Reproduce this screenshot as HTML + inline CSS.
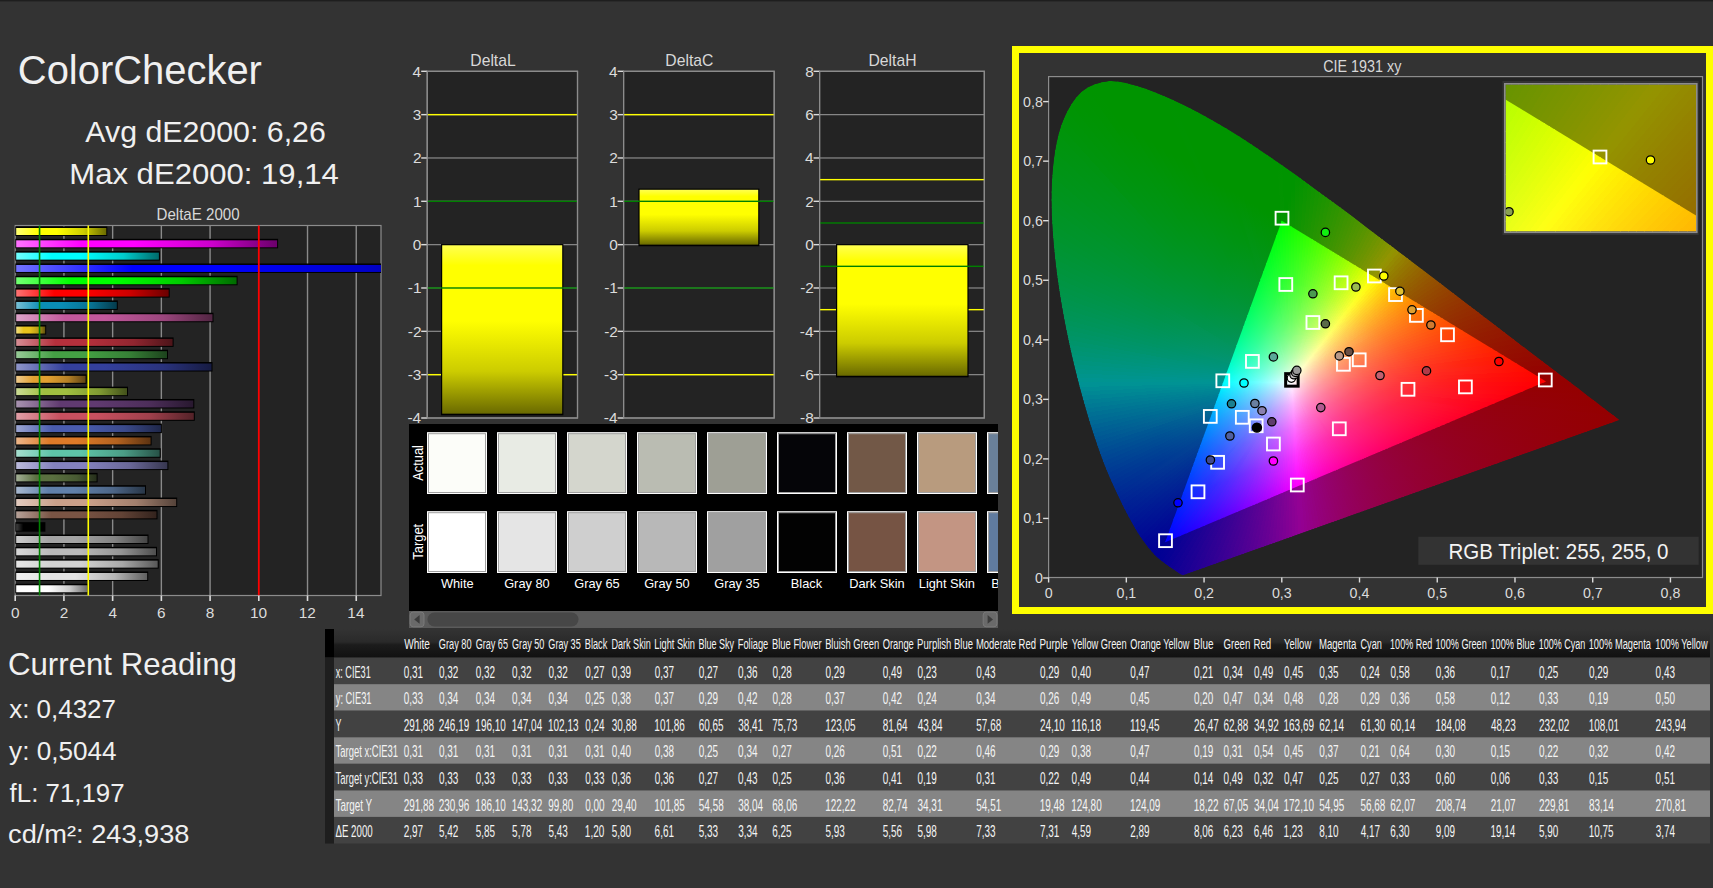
<!DOCTYPE html><html><head><meta charset="utf-8"><style>html,body{margin:0;padding:0;background:#333;width:1713px;height:888px;overflow:hidden}svg{display:block}text{font-family:"Liberation Sans",sans-serif}</style></head><body><svg width="1713" height="888" viewBox="0 0 1713 888"><defs><linearGradient id="eb0" gradientUnits="userSpaceOnUse" x1="16.2" y1="0" x2="106.3" y2="0"><stop offset="0" stop-color="#ffff73"/><stop offset=".25" stop-color="#ffff00"/><stop offset=".45" stop-color="#ffff00"/><stop offset=".75" stop-color="#cccc00"/><stop offset="1" stop-color="#6b6b00"/></linearGradient><linearGradient id="eb1" gradientUnits="userSpaceOnUse" x1="16.2" y1="0" x2="277.1" y2="0"><stop offset="0" stop-color="#ff73ff"/><stop offset=".25" stop-color="#ff00ff"/><stop offset=".45" stop-color="#ff00ff"/><stop offset=".75" stop-color="#cc00cc"/><stop offset="1" stop-color="#6b006b"/></linearGradient><linearGradient id="eb2" gradientUnits="userSpaceOnUse" x1="16.2" y1="0" x2="158.9" y2="0"><stop offset="0" stop-color="#73ffff"/><stop offset=".25" stop-color="#00ffff"/><stop offset=".45" stop-color="#00ffff"/><stop offset=".75" stop-color="#00cccc"/><stop offset="1" stop-color="#006b6b"/></linearGradient><linearGradient id="eb3" gradientUnits="userSpaceOnUse" x1="16.2" y1="0" x2="481.5" y2="0"><stop offset="0" stop-color="#7373ff"/><stop offset=".25" stop-color="#0000ff"/><stop offset=".45" stop-color="#0000ff"/><stop offset=".75" stop-color="#0000cc"/><stop offset="1" stop-color="#00006b"/></linearGradient><linearGradient id="eb4" gradientUnits="userSpaceOnUse" x1="16.2" y1="0" x2="236.6" y2="0"><stop offset="0" stop-color="#73ff73"/><stop offset=".25" stop-color="#00ff00"/><stop offset=".45" stop-color="#00ff00"/><stop offset=".75" stop-color="#00cc00"/><stop offset="1" stop-color="#006b00"/></linearGradient><linearGradient id="eb5" gradientUnits="userSpaceOnUse" x1="16.2" y1="0" x2="168.7" y2="0"><stop offset="0" stop-color="#ff7373"/><stop offset=".25" stop-color="#ff0000"/><stop offset=".45" stop-color="#ff0000"/><stop offset=".75" stop-color="#cc0000"/><stop offset="1" stop-color="#6b0000"/></linearGradient><linearGradient id="eb6" gradientUnits="userSpaceOnUse" x1="16.2" y1="0" x2="116.8" y2="0"><stop offset="0" stop-color="#78c0d6"/><stop offset=".25" stop-color="#0a8db5"/><stop offset=".45" stop-color="#0a8db5"/><stop offset=".75" stop-color="#087191"/><stop offset="1" stop-color="#043b4c"/></linearGradient><linearGradient id="eb7" gradientUnits="userSpaceOnUse" x1="16.2" y1="0" x2="212.5" y2="0"><stop offset="0" stop-color="#dda3c9"/><stop offset=".25" stop-color="#c2589c"/><stop offset=".45" stop-color="#c2589c"/><stop offset=".75" stop-color="#9b467d"/><stop offset="1" stop-color="#512542"/></linearGradient><linearGradient id="eb8" gradientUnits="userSpaceOnUse" x1="16.2" y1="0" x2="45.2" y2="0"><stop offset="0" stop-color="#f2df82"/><stop offset=".25" stop-color="#e8c41c"/><stop offset=".45" stop-color="#e8c41c"/><stop offset=".75" stop-color="#ba9d16"/><stop offset="1" stop-color="#61520c"/></linearGradient><linearGradient id="eb9" gradientUnits="userSpaceOnUse" x1="16.2" y1="0" x2="172.6" y2="0"><stop offset="0" stop-color="#d68d94"/><stop offset=".25" stop-color="#b5303c"/><stop offset=".45" stop-color="#b5303c"/><stop offset=".75" stop-color="#912630"/><stop offset="1" stop-color="#4c1419"/></linearGradient><linearGradient id="eb10" gradientUnits="userSpaceOnUse" x1="16.2" y1="0" x2="167.0" y2="0"><stop offset="0" stop-color="#98cb98"/><stop offset=".25" stop-color="#44a044"/><stop offset=".45" stop-color="#44a044"/><stop offset=".75" stop-color="#368036"/><stop offset="1" stop-color="#1d431d"/></linearGradient><linearGradient id="eb11" gradientUnits="userSpaceOnUse" x1="16.2" y1="0" x2="211.5" y2="0"><stop offset="0" stop-color="#8f96c9"/><stop offset=".25" stop-color="#34409c"/><stop offset=".45" stop-color="#34409c"/><stop offset=".75" stop-color="#2a337d"/><stop offset="1" stop-color="#161b42"/></linearGradient><linearGradient id="eb12" gradientUnits="userSpaceOnUse" x1="16.2" y1="0" x2="85.6" y2="0"><stop offset="0" stop-color="#efcb8d"/><stop offset=".25" stop-color="#e2a030"/><stop offset=".45" stop-color="#e2a030"/><stop offset=".75" stop-color="#b58026"/><stop offset="1" stop-color="#5f4314"/></linearGradient><linearGradient id="eb13" gradientUnits="userSpaceOnUse" x1="16.2" y1="0" x2="127.0" y2="0"><stop offset="0" stop-color="#cbdc96"/><stop offset=".25" stop-color="#a0c040"/><stop offset=".45" stop-color="#a0c040"/><stop offset=".75" stop-color="#809a33"/><stop offset="1" stop-color="#43511b"/></linearGradient><linearGradient id="eb14" gradientUnits="userSpaceOnUse" x1="16.2" y1="0" x2="193.3" y2="0"><stop offset="0" stop-color="#a893b0"/><stop offset=".25" stop-color="#603a70"/><stop offset=".45" stop-color="#603a70"/><stop offset=".75" stop-color="#4d2e5a"/><stop offset="1" stop-color="#28182f"/></linearGradient><linearGradient id="eb15" gradientUnits="userSpaceOnUse" x1="16.2" y1="0" x2="193.8" y2="0"><stop offset="0" stop-color="#e19fa7"/><stop offset=".25" stop-color="#c8505f"/><stop offset=".45" stop-color="#c8505f"/><stop offset=".75" stop-color="#a0404c"/><stop offset="1" stop-color="#542228"/></linearGradient><linearGradient id="eb16" gradientUnits="userSpaceOnUse" x1="16.2" y1="0" x2="160.9" y2="0"><stop offset="0" stop-color="#9ba5d2"/><stop offset=".25" stop-color="#4a5cae"/><stop offset=".45" stop-color="#4a5cae"/><stop offset=".75" stop-color="#3b4a8b"/><stop offset="1" stop-color="#1f2749"/></linearGradient><linearGradient id="eb17" gradientUnits="userSpaceOnUse" x1="16.2" y1="0" x2="150.6" y2="0"><stop offset="0" stop-color="#edb689"/><stop offset=".25" stop-color="#de7a28"/><stop offset=".45" stop-color="#de7a28"/><stop offset=".75" stop-color="#b26220"/><stop offset="1" stop-color="#5d3311"/></linearGradient><linearGradient id="eb18" gradientUnits="userSpaceOnUse" x1="16.2" y1="0" x2="159.7" y2="0"><stop offset="0" stop-color="#a6dfcf"/><stop offset=".25" stop-color="#5ec4a8"/><stop offset=".45" stop-color="#5ec4a8"/><stop offset=".75" stop-color="#4b9d86"/><stop offset="1" stop-color="#275247"/></linearGradient><linearGradient id="eb19" gradientUnits="userSpaceOnUse" x1="16.2" y1="0" x2="167.4" y2="0"><stop offset="0" stop-color="#bbbadb"/><stop offset=".25" stop-color="#8482be"/><stop offset=".45" stop-color="#8482be"/><stop offset=".75" stop-color="#6a6898"/><stop offset="1" stop-color="#373750"/></linearGradient><linearGradient id="eb20" gradientUnits="userSpaceOnUse" x1="16.2" y1="0" x2="96.6" y2="0"><stop offset="0" stop-color="#a4b096"/><stop offset=".25" stop-color="#5a7040"/><stop offset=".45" stop-color="#5a7040"/><stop offset=".75" stop-color="#485a33"/><stop offset="1" stop-color="#262f1b"/></linearGradient><linearGradient id="eb21" gradientUnits="userSpaceOnUse" x1="16.2" y1="0" x2="145.0" y2="0"><stop offset="0" stop-color="#a8b9d0"/><stop offset=".25" stop-color="#6080aa"/><stop offset=".45" stop-color="#6080aa"/><stop offset=".75" stop-color="#4d6688"/><stop offset="1" stop-color="#283647"/></linearGradient><linearGradient id="eb22" gradientUnits="userSpaceOnUse" x1="16.2" y1="0" x2="176.2" y2="0"><stop offset="0" stop-color="#e2cbbf"/><stop offset=".25" stop-color="#caa08a"/><stop offset=".45" stop-color="#caa08a"/><stop offset=".75" stop-color="#a2806e"/><stop offset="1" stop-color="#55433a"/></linearGradient><linearGradient id="eb23" gradientUnits="userSpaceOnUse" x1="16.2" y1="0" x2="156.5" y2="0"><stop offset="0" stop-color="#b6a198"/><stop offset=".25" stop-color="#7a5444"/><stop offset=".45" stop-color="#7a5444"/><stop offset=".75" stop-color="#624336"/><stop offset="1" stop-color="#33231d"/></linearGradient><linearGradient id="eb24" gradientUnits="userSpaceOnUse" x1="16.2" y1="0" x2="44.4" y2="0"><stop offset="0" stop-color="#404040"/><stop offset=".25" stop-color="#000000"/><stop offset=".45" stop-color="#000000"/><stop offset=".75" stop-color="#000000"/><stop offset="1" stop-color="#000000"/></linearGradient><linearGradient id="eb25" gradientUnits="userSpaceOnUse" x1="16.2" y1="0" x2="147.5" y2="0"><stop offset="0" stop-color="#cdcdcd"/><stop offset=".25" stop-color="#a4a4a4"/><stop offset=".45" stop-color="#a4a4a4"/><stop offset=".75" stop-color="#838383"/><stop offset="1" stop-color="#454545"/></linearGradient><linearGradient id="eb26" gradientUnits="userSpaceOnUse" x1="16.2" y1="0" x2="156.0" y2="0"><stop offset="0" stop-color="#d9d9d9"/><stop offset=".25" stop-color="#bababa"/><stop offset=".45" stop-color="#bababa"/><stop offset=".75" stop-color="#959595"/><stop offset="1" stop-color="#4e4e4e"/></linearGradient><linearGradient id="eb27" gradientUnits="userSpaceOnUse" x1="16.2" y1="0" x2="157.7" y2="0"><stop offset="0" stop-color="#e6e6e6"/><stop offset=".25" stop-color="#d2d2d2"/><stop offset=".45" stop-color="#d2d2d2"/><stop offset=".75" stop-color="#a8a8a8"/><stop offset="1" stop-color="#585858"/></linearGradient><linearGradient id="eb28" gradientUnits="userSpaceOnUse" x1="16.2" y1="0" x2="147.2" y2="0"><stop offset="0" stop-color="#f0f0f0"/><stop offset=".25" stop-color="#e4e4e4"/><stop offset=".45" stop-color="#e4e4e4"/><stop offset=".75" stop-color="#b6b6b6"/><stop offset="1" stop-color="#606060"/></linearGradient><linearGradient id="eb29" gradientUnits="userSpaceOnUse" x1="16.2" y1="0" x2="87.5" y2="0"><stop offset="0" stop-color="#ffffff"/><stop offset=".25" stop-color="#ffffff"/><stop offset=".45" stop-color="#ffffff"/><stop offset=".75" stop-color="#cccccc"/><stop offset="1" stop-color="#6b6b6b"/></linearGradient><linearGradient id="dgDeltaL" x1="0" y1="0" x2="0" y2="1"><stop offset="0" stop-color="#ffff50"/><stop offset=".12" stop-color="#ffff00"/><stop offset=".45" stop-color="#ffff00"/><stop offset=".75" stop-color="#cccc00"/><stop offset="1" stop-color="#6a6a00"/></linearGradient><linearGradient id="dgDeltaC" x1="0" y1="0" x2="0" y2="1"><stop offset="0" stop-color="#ffff50"/><stop offset=".12" stop-color="#ffff00"/><stop offset=".45" stop-color="#ffff00"/><stop offset=".75" stop-color="#cccc00"/><stop offset="1" stop-color="#6a6a00"/></linearGradient><linearGradient id="dgDeltaH" x1="0" y1="0" x2="0" y2="1"><stop offset="0" stop-color="#ffff50"/><stop offset=".12" stop-color="#ffff00"/><stop offset=".45" stop-color="#ffff00"/><stop offset=".75" stop-color="#cccc00"/><stop offset="1" stop-color="#6a6a00"/></linearGradient><clipPath id="loc"><path d="M1183.93 575.02C1183.91 575.02 1183.89 575.01 1183.85 575.02C1183.81 575.03 1183.75 575.07 1183.69 575.08C1183.64 575.09 1183.60 575.07 1183.54 575.08C1183.47 575.09 1183.38 575.13 1183.31 575.14C1183.23 575.15 1183.16 575.14 1183.07 575.14C1182.98 575.14 1182.88 575.14 1182.76 575.14C1182.65 575.14 1182.53 575.17 1182.37 575.14C1182.22 575.11 1182.06 575.06 1181.83 574.96C1181.60 574.86 1181.30 574.72 1180.97 574.55C1180.65 574.37 1180.33 574.17 1179.89 573.89C1179.45 573.61 1178.91 573.28 1178.33 572.88C1177.75 572.48 1177.14 572.03 1176.39 571.51C1175.64 570.99 1174.83 570.46 1173.82 569.78C1172.81 569.11 1171.63 568.34 1170.33 567.46C1169.02 566.58 1167.60 565.67 1165.97 564.48C1164.34 563.29 1162.54 562.02 1160.53 560.31C1158.52 558.61 1156.50 557.03 1153.92 554.24C1151.35 551.45 1148.42 548.23 1145.06 543.58C1141.71 538.93 1138.04 533.74 1133.79 526.31C1129.54 518.88 1124.87 510.28 1119.57 498.98C1114.27 487.67 1107.95 474.59 1102.00 458.48C1096.05 442.37 1089.75 423.37 1083.89 402.33C1078.03 381.29 1071.69 356.39 1066.87 332.24C1062.05 308.08 1057.51 281.41 1054.97 257.38C1052.43 233.35 1050.89 209.09 1051.63 188.07C1052.37 167.05 1054.87 146.86 1059.40 131.26C1063.94 115.65 1071.01 102.75 1078.84 94.45C1086.66 86.16 1096.60 82.88 1106.35 81.47C1116.11 80.06 1126.95 83.23 1137.37 86.00C1147.78 88.77 1158.65 93.66 1168.85 98.09C1179.04 102.51 1188.84 107.44 1198.54 112.56C1208.24 117.68 1217.62 123.13 1227.07 128.81C1236.51 134.50 1245.88 140.53 1255.21 146.68C1264.53 152.83 1273.77 159.24 1283.03 165.74C1292.30 172.23 1301.52 178.90 1310.78 185.63C1320.05 192.35 1329.36 199.23 1338.61 206.11C1347.86 212.99 1357.08 219.97 1366.28 226.89C1375.48 233.82 1384.72 240.79 1393.80 247.68C1402.88 254.56 1411.91 261.46 1420.77 268.22C1429.63 274.98 1438.42 281.70 1446.97 288.23C1455.52 294.76 1463.95 301.21 1472.07 307.40C1480.20 313.60 1488.18 319.64 1495.70 325.39C1503.23 331.14 1510.52 336.75 1517.23 341.88C1523.94 347.02 1530.10 351.70 1535.97 356.18C1541.84 360.65 1547.42 364.92 1552.45 368.74C1557.47 372.56 1561.99 375.96 1566.13 379.10C1570.26 382.25 1573.91 385.07 1577.24 387.62C1580.57 390.17 1583.45 392.38 1586.10 394.41C1588.76 396.43 1591.05 398.15 1593.18 399.77C1595.30 401.38 1597.11 402.78 1598.85 404.11C1600.59 405.44 1602.15 406.64 1603.59 407.75C1605.03 408.85 1606.31 409.84 1607.48 410.72C1608.64 411.61 1609.68 412.36 1610.59 413.05C1611.49 413.73 1612.01 414.14 1612.92 414.83C1613.83 415.53 1615.07 416.48 1616.03 417.22C1616.99 417.95 1618.06 418.77 1618.67 419.24C1619.28 419.71 1619.51 419.88 1619.68 420.01Z"/></clipPath><clipPath id="tri"><path d="M1546.07 381.49L1281.79 220.70L1165.19 542.27Z"/></clipPath><path id="w0" d="M0 0L700 -8.73L700 8.73Z"/><linearGradient id="q0"><stop offset=".0944" stop-color="#039492"/><stop offset=".0999" stop-color="#009492"/><stop offset=".3132" stop-color="#009490"/></linearGradient><linearGradient id="q1"><stop offset=".0937" stop-color="#039490"/><stop offset=".0993" stop-color="#009490"/><stop offset=".3149" stop-color="#00948b"/></linearGradient><linearGradient id="q2"><stop offset=".0931" stop-color="#03948d"/><stop offset=".0988" stop-color="#00948d"/><stop offset=".3168" stop-color="#009486"/></linearGradient><linearGradient id="q3"><stop offset=".0926" stop-color="#03948b"/><stop offset=".0954" stop-color="#00948b"/><stop offset=".3188" stop-color="#009481"/></linearGradient><linearGradient id="q4"><stop offset=".092" stop-color="#039489"/><stop offset=".0949" stop-color="#009489"/><stop offset=".3209" stop-color="#00947c"/></linearGradient><linearGradient id="q5"><stop offset=".0916" stop-color="#039487"/><stop offset=".0945" stop-color="#009486"/><stop offset=".3233" stop-color="#009477"/></linearGradient><linearGradient id="q6"><stop offset=".0911" stop-color="#039484"/><stop offset=".0941" stop-color="#009484"/><stop offset=".3258" stop-color="#009472"/></linearGradient><linearGradient id="q7"><stop offset=".0907" stop-color="#039482"/><stop offset=".0937" stop-color="#009482"/><stop offset=".3285" stop-color="#00946e"/></linearGradient><linearGradient id="q8"><stop offset=".0904" stop-color="#039480"/><stop offset=".0934" stop-color="#009480"/><stop offset=".3314" stop-color="#009469"/></linearGradient><linearGradient id="q9"><stop offset=".0901" stop-color="#03947e"/><stop offset=".0932" stop-color="#00947e"/><stop offset=".1953" stop-color="#009470"/><stop offset=".3345" stop-color="#009465"/></linearGradient><linearGradient id="q10"><stop offset=".0898" stop-color="#03947c"/><stop offset=".093" stop-color="#00947c"/><stop offset=".1965" stop-color="#00946d"/><stop offset=".3377" stop-color="#009461"/></linearGradient><linearGradient id="q11"><stop offset=".0896" stop-color="#03947a"/><stop offset=".0928" stop-color="#00947a"/><stop offset=".1976" stop-color="#00946a"/><stop offset=".3406" stop-color="#00945d"/></linearGradient><linearGradient id="q12"><stop offset=".0894" stop-color="#039478"/><stop offset=".0926" stop-color="#009478"/><stop offset=".1988" stop-color="#009466"/><stop offset=".3436" stop-color="#009459"/></linearGradient><linearGradient id="q13"><stop offset=".0893" stop-color="#039477"/><stop offset=".0925" stop-color="#009476"/><stop offset=".2001" stop-color="#009463"/><stop offset=".3468" stop-color="#009455"/></linearGradient><linearGradient id="q14"><stop offset=".0892" stop-color="#039475"/><stop offset=".1982" stop-color="#009461"/><stop offset=".3503" stop-color="#009452"/></linearGradient><linearGradient id="q15"><stop offset=".0891" stop-color="#039473"/><stop offset=".1997" stop-color="#00945e"/><stop offset=".3539" stop-color="#00944e"/></linearGradient><linearGradient id="q16"><stop offset=".0891" stop-color="#039471"/><stop offset=".2014" stop-color="#00945b"/><stop offset=".3578" stop-color="#00944b"/></linearGradient><linearGradient id="q17"><stop offset=".0891" stop-color="#03946f"/><stop offset=".2031" stop-color="#009458"/><stop offset=".362" stop-color="#009447"/></linearGradient><linearGradient id="q18"><stop offset=".0892" stop-color="#03946e"/><stop offset=".205" stop-color="#009455"/><stop offset=".3664" stop-color="#009444"/></linearGradient><linearGradient id="q19"><stop offset=".0893" stop-color="#03946c"/><stop offset=".207" stop-color="#009452"/><stop offset=".3711" stop-color="#009441"/></linearGradient><linearGradient id="q20"><stop offset=".0894" stop-color="#03946a"/><stop offset=".2091" stop-color="#009450"/><stop offset=".3761" stop-color="#00943d"/></linearGradient><linearGradient id="q21"><stop offset=".0896" stop-color="#039469"/><stop offset=".2077" stop-color="#00944d"/><stop offset=".3813" stop-color="#00943a"/></linearGradient><linearGradient id="q22"><stop offset=".0898" stop-color="#039467"/><stop offset=".2101" stop-color="#00944b"/><stop offset=".3869" stop-color="#009437"/></linearGradient><linearGradient id="q23"><stop offset=".09" stop-color="#039465"/><stop offset=".2125" stop-color="#009448"/><stop offset=".3924" stop-color="#009434"/></linearGradient><linearGradient id="q24"><stop offset=".0903" stop-color="#039464"/><stop offset=".2147" stop-color="#009446"/><stop offset=".3974" stop-color="#009431"/></linearGradient><linearGradient id="q25"><stop offset=".0907" stop-color="#039462"/><stop offset=".217" stop-color="#009443"/><stop offset=".4027" stop-color="#00942e"/></linearGradient><linearGradient id="q26"><stop offset=".091" stop-color="#039460"/><stop offset=".1473" stop-color="#00944f"/><stop offset=".2195" stop-color="#009440"/><stop offset=".4083" stop-color="#00942b"/></linearGradient><linearGradient id="q27"><stop offset=".0915" stop-color="#03945f"/><stop offset=".1487" stop-color="#00944d"/><stop offset=".2222" stop-color="#00943e"/><stop offset=".4142" stop-color="#009428"/></linearGradient><linearGradient id="q28"><stop offset=".0919" stop-color="#03945d"/><stop offset=".1502" stop-color="#00944b"/><stop offset=".225" stop-color="#00943b"/><stop offset=".4205" stop-color="#009425"/></linearGradient><linearGradient id="q29"><stop offset=".0924" stop-color="#03945c"/><stop offset=".1518" stop-color="#009449"/><stop offset=".2238" stop-color="#00943a"/><stop offset=".4272" stop-color="#009423"/></linearGradient><linearGradient id="q30"><stop offset=".093" stop-color="#03945a"/><stop offset=".1535" stop-color="#009447"/><stop offset=".2269" stop-color="#009437"/><stop offset=".4343" stop-color="#009420"/></linearGradient><linearGradient id="q31"><stop offset=".0936" stop-color="#039458"/><stop offset=".1553" stop-color="#009444"/><stop offset=".2302" stop-color="#009435"/><stop offset=".4418" stop-color="#00941d"/></linearGradient><linearGradient id="q32"><stop offset=".0943" stop-color="#039457"/><stop offset=".1573" stop-color="#009442"/><stop offset=".2337" stop-color="#009432"/><stop offset=".4497" stop-color="#00941a"/></linearGradient><linearGradient id="q33"><stop offset=".095" stop-color="#039455"/><stop offset=".1589" stop-color="#009440"/><stop offset=".2364" stop-color="#009430"/><stop offset=".4555" stop-color="#009418"/></linearGradient><linearGradient id="q34"><stop offset=".0957" stop-color="#039454"/><stop offset=".1606" stop-color="#00943e"/><stop offset=".2393" stop-color="#00942d"/><stop offset=".4616" stop-color="#009415"/></linearGradient><linearGradient id="q35"><stop offset=".0965" stop-color="#039452"/><stop offset=".1624" stop-color="#00943c"/><stop offset=".2423" stop-color="#00942b"/><stop offset=".4681" stop-color="#009413"/></linearGradient><linearGradient id="q36"><stop offset=".0974" stop-color="#039450"/><stop offset=".1643" stop-color="#00943a"/><stop offset=".2456" stop-color="#009429"/><stop offset=".475" stop-color="#009411"/></linearGradient><linearGradient id="q37"><stop offset=".0984" stop-color="#03944f"/><stop offset=".1615" stop-color="#009439"/><stop offset=".2442" stop-color="#009427"/><stop offset=".4823" stop-color="#00940e"/></linearGradient><linearGradient id="q38"><stop offset=".0993" stop-color="#03944d"/><stop offset=".1636" stop-color="#009437"/><stop offset=".2477" stop-color="#009425"/><stop offset=".4901" stop-color="#00940c"/></linearGradient><linearGradient id="q39"><stop offset=".1004" stop-color="#03944b"/><stop offset=".1658" stop-color="#009435"/><stop offset=".2512" stop-color="#009423"/><stop offset=".4975" stop-color="#009409"/></linearGradient><linearGradient id="q40"><stop offset=".1015" stop-color="#03944a"/><stop offset=".1673" stop-color="#009433"/><stop offset=".2533" stop-color="#009421"/><stop offset=".3647" stop-color="#009412"/><stop offset=".5013" stop-color="#009407"/></linearGradient><linearGradient id="q41"><stop offset=".1027" stop-color="#039448"/><stop offset=".169" stop-color="#009431"/><stop offset=".2556" stop-color="#00941f"/><stop offset=".3677" stop-color="#009410"/><stop offset=".5053" stop-color="#009405"/></linearGradient><linearGradient id="q42"><stop offset=".104" stop-color="#039446"/><stop offset=".1708" stop-color="#009430"/><stop offset=".2581" stop-color="#00941d"/><stop offset=".371" stop-color="#00940e"/><stop offset=".5097" stop-color="#009403"/></linearGradient><linearGradient id="q43"><stop offset=".1054" stop-color="#039445"/><stop offset=".1727" stop-color="#00942e"/><stop offset=".2607" stop-color="#00941b"/><stop offset=".3746" stop-color="#00940c"/><stop offset=".5143" stop-color="#009401"/></linearGradient><linearGradient id="q44"><stop offset=".1068" stop-color="#039443"/><stop offset=".1799" stop-color="#00942a"/><stop offset=".2687" stop-color="#009418"/><stop offset=".3888" stop-color="#009409"/><stop offset=".5193" stop-color="#009400"/></linearGradient><linearGradient id="q45"><stop offset=".1083" stop-color="#039441"/><stop offset=".1809" stop-color="#009429"/><stop offset=".2742" stop-color="#009416"/><stop offset=".4142" stop-color="#009405"/><stop offset=".5179" stop-color="#009400"/></linearGradient><linearGradient id="q46"><stop offset=".1099" stop-color="#039440"/><stop offset=".1819" stop-color="#009427"/><stop offset=".2796" stop-color="#009413"/><stop offset=".439" stop-color="#009401"/><stop offset=".5161" stop-color="#009400"/></linearGradient><linearGradient id="q47"><stop offset=".1117" stop-color="#02943e"/><stop offset=".1881" stop-color="#009424"/><stop offset=".285" stop-color="#009411"/><stop offset=".438" stop-color="#009400"/><stop offset=".5145" stop-color="#009400"/></linearGradient><linearGradient id="q48"><stop offset=".1135" stop-color="#02943c"/><stop offset=".1894" stop-color="#009423"/><stop offset=".2906" stop-color="#00940f"/><stop offset=".4171" stop-color="#009400"/><stop offset=".5132" stop-color="#009400"/></linearGradient><linearGradient id="q49"><stop offset=".1154" stop-color="#02943a"/><stop offset=".1944" stop-color="#009420"/><stop offset=".2932" stop-color="#00940d"/><stop offset=".4018" stop-color="#009400"/><stop offset=".5055" stop-color="#009400"/></linearGradient><linearGradient id="q50"><stop offset=".1175" stop-color="#029438"/><stop offset=".1944" stop-color="#00941f"/><stop offset=".2954" stop-color="#00940b"/><stop offset=".3867" stop-color="#009400"/><stop offset=".4973" stop-color="#009400"/></linearGradient><linearGradient id="q51"><stop offset=".1196" stop-color="#029436"/><stop offset=".1993" stop-color="#00941d"/><stop offset=".3023" stop-color="#009409"/><stop offset=".3726" stop-color="#009400"/><stop offset=".4897" stop-color="#009400"/></linearGradient><linearGradient id="q52"><stop offset=".122" stop-color="#029435"/><stop offset=".1991" stop-color="#00941b"/><stop offset=".3036" stop-color="#009407"/><stop offset=".3626" stop-color="#009400"/><stop offset=".4807" stop-color="#009400"/></linearGradient><linearGradient id="q53"><stop offset=".1244" stop-color="#029433"/><stop offset=".2032" stop-color="#009419"/><stop offset=".3082" stop-color="#009405"/><stop offset=".3519" stop-color="#009400"/><stop offset=".47" stop-color="#009400"/></linearGradient><linearGradient id="q54"><stop offset=".127" stop-color="#029431"/><stop offset=".2071" stop-color="#009417"/><stop offset=".3083" stop-color="#009404"/><stop offset=".3378" stop-color="#009400"/><stop offset=".4601" stop-color="#009400"/></linearGradient><linearGradient id="q55"><stop offset=".1298" stop-color="#02942e"/><stop offset=".2111" stop-color="#009415"/><stop offset=".3126" stop-color="#009402"/><stop offset=".4507" stop-color="#009400"/></linearGradient><linearGradient id="q56"><stop offset=".1328" stop-color="#02942c"/><stop offset=".2145" stop-color="#009413"/><stop offset=".3157" stop-color="#009400"/><stop offset=".4403" stop-color="#009400"/></linearGradient><linearGradient id="q57"><stop offset=".136" stop-color="#02942a"/><stop offset=".2105" stop-color="#009413"/><stop offset=".3075" stop-color="#009400"/><stop offset=".4305" stop-color="#009400"/></linearGradient><linearGradient id="q58"><stop offset=".1394" stop-color="#029428"/><stop offset=".2108" stop-color="#009412"/><stop offset=".3" stop-color="#009400"/><stop offset=".4213" stop-color="#009400"/></linearGradient><linearGradient id="q59"><stop offset=".143" stop-color="#029426"/><stop offset=".2112" stop-color="#009411"/><stop offset=".293" stop-color="#009400"/><stop offset=".4123" stop-color="#009400"/></linearGradient><linearGradient id="q60"><stop offset=".1469" stop-color="#029423"/><stop offset=".2085" stop-color="#009410"/><stop offset=".2863" stop-color="#009400"/><stop offset=".4031" stop-color="#009400"/></linearGradient><linearGradient id="q61"><stop offset=".1511" stop-color="#029421"/><stop offset=".2805" stop-color="#009400"/><stop offset=".3945" stop-color="#009400"/></linearGradient><linearGradient id="q62"><stop offset=".1556" stop-color="#02941f"/><stop offset=".2754" stop-color="#009400"/><stop offset=".3864" stop-color="#009400"/></linearGradient><linearGradient id="q63"><stop offset=".1604" stop-color="#02941c"/><stop offset=".2681" stop-color="#009400"/><stop offset=".3785" stop-color="#009400"/></linearGradient><linearGradient id="q64"><stop offset=".1657" stop-color="#029419"/><stop offset=".2617" stop-color="#009400"/><stop offset=".3707" stop-color="#009400"/></linearGradient><linearGradient id="q65"><stop offset=".1713" stop-color="#029417"/><stop offset=".2588" stop-color="#009400"/><stop offset=".3633" stop-color="#009400"/></linearGradient><linearGradient id="q66"><stop offset=".1775" stop-color="#029414"/><stop offset=".2522" stop-color="#009400"/><stop offset=".3564" stop-color="#009400"/></linearGradient><linearGradient id="q67"><stop offset=".1842" stop-color="#029411"/><stop offset=".2492" stop-color="#009400"/><stop offset=".3499" stop-color="#009400"/></linearGradient><linearGradient id="q68"><stop offset=".1915" stop-color="#02940e"/><stop offset=".2453" stop-color="#009400"/><stop offset=".3434" stop-color="#009400"/></linearGradient><linearGradient id="q69"><stop offset=".1995" stop-color="#02940b"/><stop offset=".2413" stop-color="#009400"/><stop offset=".3372" stop-color="#009400"/></linearGradient><linearGradient id="q70"><stop offset=".2082" stop-color="#029407"/><stop offset=".2363" stop-color="#009400"/><stop offset=".3314" stop-color="#009400"/></linearGradient><linearGradient id="q71"><stop offset=".2179" stop-color="#029404"/><stop offset=".233" stop-color="#009400"/><stop offset=".326" stop-color="#009400"/></linearGradient><linearGradient id="q72"><stop offset=".2227" stop-color="#039402"/><stop offset=".3208" stop-color="#009400"/></linearGradient><linearGradient id="q73"><stop offset=".2196" stop-color="#079402"/><stop offset=".2489" stop-color="#009400"/><stop offset=".3159" stop-color="#009400"/></linearGradient><linearGradient id="q74"><stop offset=".2167" stop-color="#0b9402"/><stop offset=".2621" stop-color="#009400"/><stop offset=".3111" stop-color="#009400"/></linearGradient><linearGradient id="q75"><stop offset=".214" stop-color="#0e9402"/><stop offset=".2773" stop-color="#009400"/><stop offset=".3066" stop-color="#009400"/></linearGradient><linearGradient id="q76"><stop offset=".2114" stop-color="#129402"/><stop offset=".3023" stop-color="#009400"/></linearGradient><linearGradient id="q77"><stop offset=".2089" stop-color="#159402"/><stop offset=".2983" stop-color="#039400"/></linearGradient><linearGradient id="q78"><stop offset=".2067" stop-color="#199402"/><stop offset=".2946" stop-color="#079400"/></linearGradient><linearGradient id="q79"><stop offset=".2045" stop-color="#1d9402"/><stop offset=".291" stop-color="#0b9400"/></linearGradient><linearGradient id="q80"><stop offset=".2025" stop-color="#209402"/><stop offset=".2876" stop-color="#0f9400"/></linearGradient><linearGradient id="q81"><stop offset=".2006" stop-color="#249402"/><stop offset=".2843" stop-color="#139400"/></linearGradient><linearGradient id="q82"><stop offset=".1988" stop-color="#289402"/><stop offset=".2813" stop-color="#179400"/></linearGradient><linearGradient id="q83"><stop offset=".1972" stop-color="#2b9402"/><stop offset=".2784" stop-color="#1b9400"/></linearGradient><linearGradient id="q84"><stop offset=".1956" stop-color="#2f9402"/><stop offset=".2757" stop-color="#1f9400"/></linearGradient><linearGradient id="q85"><stop offset=".1942" stop-color="#339402"/><stop offset=".2732" stop-color="#249400"/></linearGradient><linearGradient id="q86"><stop offset=".1929" stop-color="#379402"/><stop offset=".2708" stop-color="#289400"/></linearGradient><linearGradient id="q87"><stop offset=".1917" stop-color="#3a9402"/><stop offset=".2686" stop-color="#2c9400"/></linearGradient><linearGradient id="q88"><stop offset=".1905" stop-color="#3e9402"/><stop offset=".2665" stop-color="#319400"/></linearGradient><linearGradient id="q89"><stop offset=".1895" stop-color="#429402"/><stop offset=".2646" stop-color="#359400"/></linearGradient><linearGradient id="q90"><stop offset=".1886" stop-color="#469402"/><stop offset=".2627" stop-color="#3a9400"/></linearGradient><linearGradient id="q91"><stop offset=".1877" stop-color="#4a9402"/><stop offset=".261" stop-color="#3e9400"/></linearGradient><linearGradient id="q92"><stop offset=".187" stop-color="#4e9402"/><stop offset=".2595" stop-color="#439400"/></linearGradient><linearGradient id="q93"><stop offset=".1863" stop-color="#539402"/><stop offset=".258" stop-color="#489400"/></linearGradient><linearGradient id="q94"><stop offset=".1857" stop-color="#579402"/><stop offset=".2567" stop-color="#4c9400"/></linearGradient><linearGradient id="q95"><stop offset=".1852" stop-color="#5b9402"/><stop offset=".2555" stop-color="#519400"/></linearGradient><linearGradient id="q96"><stop offset=".1848" stop-color="#5f9402"/><stop offset=".2545" stop-color="#569400"/></linearGradient><linearGradient id="q97"><stop offset=".1845" stop-color="#649402"/><stop offset=".2535" stop-color="#5c9400"/></linearGradient><linearGradient id="q98"><stop offset=".1842" stop-color="#699402"/><stop offset=".2526" stop-color="#619400"/></linearGradient><linearGradient id="q99"><stop offset=".184" stop-color="#6d9402"/><stop offset=".2519" stop-color="#669400"/></linearGradient><linearGradient id="q100"><stop offset=".184" stop-color="#729402"/><stop offset=".2513" stop-color="#6c9400"/></linearGradient><linearGradient id="q101"><stop offset=".1839" stop-color="#779403"/><stop offset=".2507" stop-color="#729400"/></linearGradient><linearGradient id="q102"><stop offset=".184" stop-color="#7c9403"/><stop offset=".2503" stop-color="#789400"/></linearGradient><linearGradient id="q103"><stop offset=".1842" stop-color="#819403"/><stop offset=".25" stop-color="#7e9400"/></linearGradient><linearGradient id="q104"><stop offset=".1844" stop-color="#869403"/><stop offset=".2498" stop-color="#849400"/></linearGradient><linearGradient id="q105"><stop offset=".1847" stop-color="#8c9403"/><stop offset=".2497" stop-color="#8a9400"/></linearGradient><linearGradient id="q106"><stop offset=".1851" stop-color="#929403"/><stop offset=".2497" stop-color="#919400"/></linearGradient><linearGradient id="q107"><stop offset=".1856" stop-color="#949103"/><stop offset=".2498" stop-color="#949000"/></linearGradient><linearGradient id="q108"><stop offset=".1862" stop-color="#948b03"/><stop offset=".25" stop-color="#948900"/></linearGradient><linearGradient id="q109"><stop offset=".1868" stop-color="#948603"/><stop offset=".2503" stop-color="#948300"/></linearGradient><linearGradient id="q110"><stop offset=".1876" stop-color="#948102"/><stop offset=".2508" stop-color="#947d00"/></linearGradient><linearGradient id="q111"><stop offset=".1884" stop-color="#947c02"/><stop offset=".2513" stop-color="#947800"/></linearGradient><linearGradient id="q112"><stop offset=".1893" stop-color="#947702"/><stop offset=".2519" stop-color="#947300"/></linearGradient><linearGradient id="q113"><stop offset=".1903" stop-color="#947202"/><stop offset=".2527" stop-color="#946e00"/></linearGradient><linearGradient id="q114"><stop offset=".1914" stop-color="#946e02"/><stop offset=".2535" stop-color="#946900"/></linearGradient><linearGradient id="q115"><stop offset=".1926" stop-color="#946a02"/><stop offset=".2545" stop-color="#946400"/></linearGradient><linearGradient id="q116"><stop offset=".1939" stop-color="#946602"/><stop offset=".2556" stop-color="#946000"/></linearGradient><linearGradient id="q117"><stop offset=".1954" stop-color="#946202"/><stop offset=".2568" stop-color="#945b00"/></linearGradient><linearGradient id="q118"><stop offset=".1969" stop-color="#945e02"/><stop offset=".2581" stop-color="#945700"/></linearGradient><linearGradient id="q119"><stop offset=".1985" stop-color="#945a02"/><stop offset=".2595" stop-color="#945300"/></linearGradient><linearGradient id="q120"><stop offset=".2002" stop-color="#945602"/><stop offset=".2611" stop-color="#944f00"/></linearGradient><linearGradient id="q121"><stop offset=".2021" stop-color="#945302"/><stop offset=".2628" stop-color="#944c00"/></linearGradient><linearGradient id="q122"><stop offset=".2041" stop-color="#944f02"/><stop offset=".2647" stop-color="#944800"/></linearGradient><linearGradient id="q123"><stop offset=".2062" stop-color="#944c02"/><stop offset=".2667" stop-color="#944400"/></linearGradient><linearGradient id="q124"><stop offset=".2085" stop-color="#944902"/><stop offset=".2688" stop-color="#944100"/></linearGradient><linearGradient id="q125"><stop offset=".2109" stop-color="#944502"/><stop offset=".2711" stop-color="#943e00"/></linearGradient><linearGradient id="q126"><stop offset=".2134" stop-color="#944202"/><stop offset=".2735" stop-color="#943a00"/></linearGradient><linearGradient id="q127"><stop offset=".2162" stop-color="#943f02"/><stop offset=".2761" stop-color="#943700"/></linearGradient><linearGradient id="q128"><stop offset=".219" stop-color="#943c02"/><stop offset=".2789" stop-color="#943400"/></linearGradient><linearGradient id="q129"><stop offset=".2221" stop-color="#943902"/><stop offset=".2818" stop-color="#943100"/></linearGradient><linearGradient id="q130"><stop offset=".2253" stop-color="#943602"/><stop offset=".285" stop-color="#942e00"/></linearGradient><linearGradient id="q131"><stop offset=".2288" stop-color="#943302"/><stop offset=".2883" stop-color="#942b00"/></linearGradient><linearGradient id="q132"><stop offset=".2324" stop-color="#943002"/><stop offset=".2919" stop-color="#942900"/></linearGradient><linearGradient id="q133"><stop offset=".2363" stop-color="#942d01"/><stop offset=".2957" stop-color="#942600"/></linearGradient><linearGradient id="q134"><stop offset=".2404" stop-color="#942a01"/><stop offset=".2997" stop-color="#942300"/></linearGradient><linearGradient id="q135"><stop offset=".2448" stop-color="#942801"/><stop offset=".3039" stop-color="#942000"/></linearGradient><linearGradient id="q136"><stop offset=".2494" stop-color="#942501"/><stop offset=".3085" stop-color="#941e00"/></linearGradient><linearGradient id="q137"><stop offset=".2544" stop-color="#942201"/><stop offset=".3132" stop-color="#941b00"/></linearGradient><linearGradient id="q138"><stop offset=".2596" stop-color="#941f01"/><stop offset=".3183" stop-color="#941800"/></linearGradient><linearGradient id="q139"><stop offset=".2652" stop-color="#941d01"/><stop offset=".3236" stop-color="#941600"/></linearGradient><linearGradient id="q140"><stop offset=".2712" stop-color="#941a01"/><stop offset=".3293" stop-color="#941300"/></linearGradient><linearGradient id="q141"><stop offset=".2775" stop-color="#941701"/><stop offset=".3354" stop-color="#941100"/></linearGradient><linearGradient id="q142"><stop offset=".2843" stop-color="#941501"/><stop offset=".3419" stop-color="#940e00"/></linearGradient><linearGradient id="q143"><stop offset=".2916" stop-color="#941201"/><stop offset=".3487" stop-color="#940c00"/></linearGradient><linearGradient id="q144"><stop offset=".2993" stop-color="#940f01"/><stop offset=".356" stop-color="#940a00"/></linearGradient><linearGradient id="q145"><stop offset=".3077" stop-color="#940d01"/><stop offset=".3638" stop-color="#940700"/></linearGradient><linearGradient id="q146"><stop offset=".3166" stop-color="#940a01"/><stop offset=".3722" stop-color="#940500"/></linearGradient><linearGradient id="q147"><stop offset=".3263" stop-color="#940701"/><stop offset=".3811" stop-color="#940200"/></linearGradient><linearGradient id="q148"><stop offset=".3367" stop-color="#940501"/><stop offset=".3906" stop-color="#940000"/></linearGradient><linearGradient id="q149"><stop offset=".3479" stop-color="#940201"/><stop offset=".4009" stop-color="#940000"/></linearGradient><linearGradient id="q150"><stop offset=".3421" stop-color="#940103"/><stop offset=".4117" stop-color="#940000"/></linearGradient><linearGradient id="q151"><stop offset=".3265" stop-color="#940105"/><stop offset=".4234" stop-color="#940000"/></linearGradient><linearGradient id="q152"><stop offset=".3123" stop-color="#940108"/><stop offset=".4361" stop-color="#940000"/></linearGradient><linearGradient id="q153"><stop offset=".2994" stop-color="#94010a"/><stop offset=".4497" stop-color="#940000"/></linearGradient><linearGradient id="q154"><stop offset=".2877" stop-color="#94010c"/><stop offset=".4644" stop-color="#940000"/></linearGradient><linearGradient id="q155"><stop offset=".277" stop-color="#94010f"/><stop offset=".4802" stop-color="#940000"/></linearGradient><linearGradient id="q156"><stop offset=".2672" stop-color="#940111"/><stop offset=".4611" stop-color="#940001"/></linearGradient><linearGradient id="q157"><stop offset=".2581" stop-color="#940113"/><stop offset=".4436" stop-color="#940003"/></linearGradient><linearGradient id="q158"><stop offset=".2498" stop-color="#940115"/><stop offset=".4276" stop-color="#940005"/></linearGradient><linearGradient id="q159"><stop offset=".242" stop-color="#940117"/><stop offset=".4129" stop-color="#940007"/></linearGradient><linearGradient id="q160"><stop offset=".2349" stop-color="#940119"/><stop offset=".3993" stop-color="#940009"/></linearGradient><linearGradient id="q161"><stop offset=".2282" stop-color="#94011b"/><stop offset=".3868" stop-color="#94000b"/></linearGradient><linearGradient id="q162"><stop offset=".222" stop-color="#94011d"/><stop offset=".3752" stop-color="#94000d"/></linearGradient><linearGradient id="q163"><stop offset=".2163" stop-color="#94011f"/><stop offset=".3645" stop-color="#94000f"/></linearGradient><linearGradient id="q164"><stop offset=".2109" stop-color="#940121"/><stop offset=".3545" stop-color="#940011"/></linearGradient><linearGradient id="q165"><stop offset=".2058" stop-color="#940123"/><stop offset=".3452" stop-color="#940013"/></linearGradient><linearGradient id="q166"><stop offset=".2011" stop-color="#940125"/><stop offset=".3366" stop-color="#940014"/></linearGradient><linearGradient id="q167"><stop offset=".1967" stop-color="#940126"/><stop offset=".3285" stop-color="#940016"/></linearGradient><linearGradient id="q168"><stop offset=".1925" stop-color="#940128"/><stop offset=".3209" stop-color="#940018"/></linearGradient><linearGradient id="q169"><stop offset=".1886" stop-color="#94012a"/><stop offset=".3138" stop-color="#94001a"/></linearGradient><linearGradient id="q170"><stop offset=".185" stop-color="#94012c"/><stop offset=".3072" stop-color="#94001c"/></linearGradient><linearGradient id="q171"><stop offset=".1815" stop-color="#94022d"/><stop offset=".3009" stop-color="#94001d"/></linearGradient><linearGradient id="q172"><stop offset=".1783" stop-color="#94022f"/><stop offset=".2951" stop-color="#94001f"/></linearGradient><linearGradient id="q173"><stop offset=".1752" stop-color="#940231"/><stop offset=".2896" stop-color="#940021"/></linearGradient><linearGradient id="q174"><stop offset=".1724" stop-color="#940232"/><stop offset=".2844" stop-color="#940023"/></linearGradient><linearGradient id="q175"><stop offset=".1696" stop-color="#940234"/><stop offset=".2795" stop-color="#940024"/></linearGradient><linearGradient id="q176"><stop offset=".1671" stop-color="#940236"/><stop offset=".2749" stop-color="#940026"/></linearGradient><linearGradient id="q177"><stop offset=".1647" stop-color="#940237"/><stop offset=".2706" stop-color="#940028"/></linearGradient><linearGradient id="q178"><stop offset=".1624" stop-color="#940239"/><stop offset=".2665" stop-color="#94002a"/></linearGradient><linearGradient id="q179"><stop offset=".1603" stop-color="#94023a"/><stop offset=".2627" stop-color="#94002b"/></linearGradient><linearGradient id="q180"><stop offset=".1583" stop-color="#94023c"/><stop offset=".2591" stop-color="#94002d"/></linearGradient><linearGradient id="q181"><stop offset=".1564" stop-color="#94023e"/><stop offset=".2556" stop-color="#94002f"/></linearGradient><linearGradient id="q182"><stop offset=".1546" stop-color="#94023f"/><stop offset=".2524" stop-color="#940030"/></linearGradient><linearGradient id="q183"><stop offset=".1529" stop-color="#940241"/><stop offset=".2494" stop-color="#940032"/></linearGradient><linearGradient id="q184"><stop offset=".1513" stop-color="#940243"/><stop offset=".2466" stop-color="#940034"/></linearGradient><linearGradient id="q185"><stop offset=".1499" stop-color="#940244"/><stop offset=".2439" stop-color="#940036"/></linearGradient><linearGradient id="q186"><stop offset=".1485" stop-color="#940246"/><stop offset=".2414" stop-color="#940037"/></linearGradient><linearGradient id="q187"><stop offset=".1472" stop-color="#940247"/><stop offset=".239" stop-color="#940039"/></linearGradient><linearGradient id="q188"><stop offset=".146" stop-color="#940249"/><stop offset=".2368" stop-color="#94003b"/></linearGradient><linearGradient id="q189"><stop offset=".1448" stop-color="#94024b"/><stop offset=".2347" stop-color="#94003d"/></linearGradient><linearGradient id="q190"><stop offset=".1438" stop-color="#94024c"/><stop offset=".2327" stop-color="#94003f"/></linearGradient><linearGradient id="q191"><stop offset=".1428" stop-color="#94024e"/><stop offset=".2309" stop-color="#940040"/></linearGradient><linearGradient id="q192"><stop offset=".1419" stop-color="#940250"/><stop offset=".2292" stop-color="#940042"/></linearGradient><linearGradient id="q193"><stop offset=".1411" stop-color="#940251"/><stop offset=".2277" stop-color="#940044"/></linearGradient><linearGradient id="q194"><stop offset=".1403" stop-color="#940253"/><stop offset=".2262" stop-color="#940046"/></linearGradient><linearGradient id="q195"><stop offset=".1397" stop-color="#940255"/><stop offset=".2249" stop-color="#940048"/></linearGradient><linearGradient id="q196"><stop offset=".139" stop-color="#940257"/><stop offset=".2236" stop-color="#94004a"/></linearGradient><linearGradient id="q197"><stop offset=".1385" stop-color="#940258"/><stop offset=".2225" stop-color="#94004c"/></linearGradient><linearGradient id="q198"><stop offset=".138" stop-color="#94025a"/><stop offset=".2215" stop-color="#94004e"/></linearGradient><linearGradient id="q199"><stop offset=".1376" stop-color="#94025c"/><stop offset=".2206" stop-color="#940050"/></linearGradient><linearGradient id="q200"><stop offset=".1372" stop-color="#94025e"/><stop offset=".2198" stop-color="#940052"/></linearGradient><linearGradient id="q201"><stop offset=".1369" stop-color="#940260"/><stop offset=".2191" stop-color="#940055"/></linearGradient><linearGradient id="q202"><stop offset=".1367" stop-color="#940262"/><stop offset=".2184" stop-color="#940057"/></linearGradient><linearGradient id="q203"><stop offset=".1365" stop-color="#940264"/><stop offset=".2179" stop-color="#940059"/></linearGradient><linearGradient id="q204"><stop offset=".1364" stop-color="#940266"/><stop offset=".2175" stop-color="#94005b"/></linearGradient><linearGradient id="q205"><stop offset=".1364" stop-color="#940268"/><stop offset=".2171" stop-color="#94005e"/></linearGradient><linearGradient id="q206"><stop offset=".1364" stop-color="#94026a"/><stop offset=".2169" stop-color="#940060"/></linearGradient><linearGradient id="q207"><stop offset=".1364" stop-color="#94026c"/><stop offset=".2167" stop-color="#940063"/></linearGradient><linearGradient id="q208"><stop offset=".1365" stop-color="#94026e"/><stop offset=".2167" stop-color="#940065"/></linearGradient><linearGradient id="q209"><stop offset=".1367" stop-color="#940270"/><stop offset=".2167" stop-color="#940068"/></linearGradient><linearGradient id="q210"><stop offset=".137" stop-color="#940273"/><stop offset=".2168" stop-color="#94006b"/></linearGradient><linearGradient id="q211"><stop offset=".1373" stop-color="#940275"/><stop offset=".217" stop-color="#94006e"/></linearGradient><linearGradient id="q212"><stop offset=".1376" stop-color="#940278"/><stop offset=".2173" stop-color="#940071"/></linearGradient><linearGradient id="q213"><stop offset=".1381" stop-color="#94027a"/><stop offset=".2177" stop-color="#940074"/></linearGradient><linearGradient id="q214"><stop offset=".1386" stop-color="#94027d"/><stop offset=".2182" stop-color="#940077"/></linearGradient><linearGradient id="q215"><stop offset=".1391" stop-color="#94027f"/><stop offset=".2188" stop-color="#94007a"/></linearGradient><linearGradient id="q216"><stop offset=".1398" stop-color="#940382"/><stop offset=".2195" stop-color="#94007e"/></linearGradient><linearGradient id="q217"><stop offset=".1405" stop-color="#940385"/><stop offset=".2203" stop-color="#940081"/></linearGradient><linearGradient id="q218"><stop offset=".1412" stop-color="#940388"/><stop offset=".2212" stop-color="#940085"/></linearGradient><linearGradient id="q219"><stop offset=".142" stop-color="#94038b"/><stop offset=".2221" stop-color="#940089"/></linearGradient><linearGradient id="q220"><stop offset=".143" stop-color="#94038e"/><stop offset=".2232" stop-color="#94008d"/></linearGradient><linearGradient id="q221"><stop offset=".1439" stop-color="#940392"/><stop offset=".2244" stop-color="#940091"/></linearGradient><linearGradient id="q222"><stop offset=".145" stop-color="#920394"/><stop offset=".2257" stop-color="#920094"/></linearGradient><linearGradient id="q223"><stop offset=".1461" stop-color="#8f0394"/><stop offset=".2271" stop-color="#8d0094"/></linearGradient><linearGradient id="q224"><stop offset=".1474" stop-color="#8b0394"/><stop offset=".2286" stop-color="#890094"/></linearGradient><linearGradient id="q225"><stop offset=".1487" stop-color="#880394"/><stop offset=".2303" stop-color="#840094"/></linearGradient><linearGradient id="q226"><stop offset=".1501" stop-color="#840394"/><stop offset=".2321" stop-color="#800094"/></linearGradient><linearGradient id="q227"><stop offset=".1516" stop-color="#810394"/><stop offset=".234" stop-color="#7b0094"/></linearGradient><linearGradient id="q228"><stop offset=".1531" stop-color="#7d0394"/><stop offset=".236" stop-color="#770094"/></linearGradient><linearGradient id="q229"><stop offset=".1548" stop-color="#790394"/><stop offset=".2382" stop-color="#730094"/></linearGradient><linearGradient id="q230"><stop offset=".1566" stop-color="#760394"/><stop offset=".2405" stop-color="#6e0094"/></linearGradient><linearGradient id="q231"><stop offset=".1585" stop-color="#720394"/><stop offset=".2429" stop-color="#6a0094"/></linearGradient><linearGradient id="q232"><stop offset=".1606" stop-color="#6e0294"/><stop offset=".2456" stop-color="#650094"/></linearGradient><linearGradient id="q233"><stop offset=".1627" stop-color="#6b0294"/><stop offset=".2483" stop-color="#610094"/></linearGradient><linearGradient id="q234"><stop offset=".165" stop-color="#670294"/><stop offset=".2513" stop-color="#5d0094"/></linearGradient><linearGradient id="q235"><stop offset=".1675" stop-color="#630294"/><stop offset=".2545" stop-color="#580094"/></linearGradient><linearGradient id="q236"><stop offset=".17" stop-color="#5f0294"/><stop offset=".2578" stop-color="#540094"/></linearGradient><linearGradient id="q237"><stop offset=".1728" stop-color="#5c0294"/><stop offset=".2613" stop-color="#4f0094"/></linearGradient><linearGradient id="q238"><stop offset=".1757" stop-color="#580294"/><stop offset=".2651" stop-color="#4b0094"/></linearGradient><linearGradient id="q239"><stop offset=".1787" stop-color="#540294"/><stop offset=".2691" stop-color="#460094"/></linearGradient><linearGradient id="q240"><stop offset=".182" stop-color="#500294"/><stop offset=".2733" stop-color="#420094"/></linearGradient><linearGradient id="q241"><stop offset=".1855" stop-color="#4c0294"/><stop offset=".2778" stop-color="#3d0094"/></linearGradient><linearGradient id="q242"><stop offset=".1892" stop-color="#480294"/><stop offset=".2826" stop-color="#390094"/></linearGradient><linearGradient id="q243"><stop offset=".1931" stop-color="#440294"/><stop offset=".2877" stop-color="#340094"/></linearGradient><linearGradient id="q244"><stop offset=".1973" stop-color="#3f0294"/><stop offset=".293" stop-color="#2f0094"/></linearGradient><linearGradient id="q245"><stop offset=".2018" stop-color="#3b0294"/><stop offset=".2988" stop-color="#2a0094"/></linearGradient><linearGradient id="q246"><stop offset=".2065" stop-color="#370294"/><stop offset=".3049" stop-color="#260094"/></linearGradient><linearGradient id="q247"><stop offset=".2116" stop-color="#320294"/><stop offset=".3114" stop-color="#210094"/></linearGradient><linearGradient id="q248"><stop offset=".2171" stop-color="#2e0294"/><stop offset=".3183" stop-color="#1c0094"/></linearGradient><linearGradient id="q249"><stop offset=".2229" stop-color="#290294"/><stop offset=".3251" stop-color="#160094"/></linearGradient><linearGradient id="q250"><stop offset=".2292" stop-color="#240294"/><stop offset=".3256" stop-color="#130094"/></linearGradient><linearGradient id="q251"><stop offset=".2359" stop-color="#1f0294"/><stop offset=".3252" stop-color="#0f0094"/></linearGradient><linearGradient id="q252"><stop offset=".2431" stop-color="#1a0294"/><stop offset=".3251" stop-color="#0b0094"/></linearGradient><linearGradient id="q253"><stop offset=".2509" stop-color="#150294"/><stop offset=".325" stop-color="#070094"/></linearGradient><linearGradient id="q254"><stop offset=".2594" stop-color="#0f0294"/><stop offset=".3248" stop-color="#030094"/></linearGradient><linearGradient id="q255"><stop offset=".2685" stop-color="#0a0294"/><stop offset=".3245" stop-color="#000094"/></linearGradient><linearGradient id="q256"><stop offset=".2785" stop-color="#040294"/><stop offset=".3239" stop-color="#000094"/></linearGradient><linearGradient id="q257"><stop offset=".2727" stop-color="#020594"/><stop offset=".3232" stop-color="#000094"/></linearGradient><linearGradient id="q258"><stop offset=".2571" stop-color="#020b94"/><stop offset=".3219" stop-color="#000094"/></linearGradient><linearGradient id="q259"><stop offset=".2434" stop-color="#021094"/><stop offset=".3208" stop-color="#000194"/></linearGradient><linearGradient id="q260"><stop offset=".2311" stop-color="#021594"/><stop offset=".3196" stop-color="#000394"/></linearGradient><linearGradient id="q261"><stop offset=".2201" stop-color="#021a94"/><stop offset=".3181" stop-color="#000694"/></linearGradient><linearGradient id="q262"><stop offset=".2102" stop-color="#021f94"/><stop offset=".3166" stop-color="#000994"/></linearGradient><linearGradient id="q263"><stop offset=".2013" stop-color="#022494"/><stop offset=".3154" stop-color="#000b94"/></linearGradient><linearGradient id="q264"><stop offset=".1931" stop-color="#022894"/><stop offset=".3142" stop-color="#000e94"/></linearGradient><linearGradient id="q265"><stop offset=".1857" stop-color="#022c94"/><stop offset=".3127" stop-color="#001194"/></linearGradient><linearGradient id="q266"><stop offset=".1789" stop-color="#023094"/><stop offset=".3112" stop-color="#001494"/></linearGradient><linearGradient id="q267"><stop offset=".1726" stop-color="#023494"/><stop offset=".3098" stop-color="#001794"/></linearGradient><linearGradient id="q268"><stop offset=".1669" stop-color="#023894"/><stop offset=".3086" stop-color="#001a94"/></linearGradient><linearGradient id="q269"><stop offset=".1615" stop-color="#023c94"/><stop offset=".3075" stop-color="#001c94"/></linearGradient><linearGradient id="q270"><stop offset=".1566" stop-color="#034094"/><stop offset=".3066" stop-color="#001f94"/></linearGradient><linearGradient id="q271"><stop offset=".152" stop-color="#034394"/><stop offset=".3058" stop-color="#002294"/></linearGradient><linearGradient id="q272"><stop offset=".1478" stop-color="#034794"/><stop offset=".3047" stop-color="#002594"/></linearGradient><linearGradient id="q273"><stop offset=".1438" stop-color="#034a94"/><stop offset=".2167" stop-color="#003894"/><stop offset=".3037" stop-color="#002994"/></linearGradient><linearGradient id="q274"><stop offset=".1401" stop-color="#034e94"/><stop offset=".2143" stop-color="#003b94"/><stop offset=".3029" stop-color="#002c94"/></linearGradient><linearGradient id="q275"><stop offset=".1367" stop-color="#035194"/><stop offset=".2121" stop-color="#003e94"/><stop offset=".3022" stop-color="#002f94"/></linearGradient><linearGradient id="q276"><stop offset=".1335" stop-color="#035494"/><stop offset=".2101" stop-color="#004194"/><stop offset=".3016" stop-color="#003294"/></linearGradient><linearGradient id="q277"><stop offset=".1305" stop-color="#035794"/><stop offset=".2082" stop-color="#004494"/><stop offset=".3011" stop-color="#003594"/></linearGradient><linearGradient id="q278"><stop offset=".1276" stop-color="#035a94"/><stop offset=".2065" stop-color="#004794"/><stop offset=".3008" stop-color="#003994"/></linearGradient><linearGradient id="q279"><stop offset=".125" stop-color="#035d94"/><stop offset=".205" stop-color="#004b94"/><stop offset=".3006" stop-color="#003c94"/></linearGradient><linearGradient id="q280"><stop offset=".1225" stop-color="#036094"/><stop offset=".2014" stop-color="#004e94"/><stop offset=".3006" stop-color="#003f94"/></linearGradient><linearGradient id="q281"><stop offset=".1201" stop-color="#036394"/><stop offset=".2001" stop-color="#005194"/><stop offset=".3006" stop-color="#004394"/></linearGradient><linearGradient id="q282"><stop offset=".1179" stop-color="#036694"/><stop offset=".1988" stop-color="#005594"/><stop offset=".3004" stop-color="#004694"/></linearGradient><linearGradient id="q283"><stop offset=".1158" stop-color="#036994"/><stop offset=".1975" stop-color="#005894"/><stop offset=".3001" stop-color="#004a94"/></linearGradient><linearGradient id="q284"><stop offset=".1139" stop-color="#036b94"/><stop offset=".1963" stop-color="#005b94"/><stop offset=".3" stop-color="#004e94"/></linearGradient><linearGradient id="q285"><stop offset=".112" stop-color="#036e94"/><stop offset=".2999" stop-color="#005194"/></linearGradient><linearGradient id="q286"><stop offset=".1103" stop-color="#037194"/><stop offset=".3001" stop-color="#005594"/></linearGradient><linearGradient id="q287"><stop offset=".1087" stop-color="#037494"/><stop offset=".3003" stop-color="#005994"/></linearGradient><linearGradient id="q288"><stop offset=".1071" stop-color="#037694"/><stop offset=".112" stop-color="#007594"/><stop offset=".3007" stop-color="#005d94"/></linearGradient><linearGradient id="q289"><stop offset=".1057" stop-color="#037994"/><stop offset=".1106" stop-color="#007894"/><stop offset=".3012" stop-color="#006194"/></linearGradient><linearGradient id="q290"><stop offset=".1043" stop-color="#037c94"/><stop offset=".1093" stop-color="#007b94"/><stop offset=".3018" stop-color="#006694"/></linearGradient><linearGradient id="q291"><stop offset=".103" stop-color="#037e94"/><stop offset=".1081" stop-color="#007d94"/><stop offset=".3026" stop-color="#006a94"/></linearGradient><linearGradient id="q292"><stop offset=".1018" stop-color="#038194"/><stop offset=".1069" stop-color="#008094"/><stop offset=".3035" stop-color="#006e94"/></linearGradient><linearGradient id="q293"><stop offset=".1006" stop-color="#038394"/><stop offset=".1058" stop-color="#008394"/><stop offset=".3045" stop-color="#007394"/></linearGradient><linearGradient id="q294"><stop offset=".0996" stop-color="#038694"/><stop offset=".1048" stop-color="#008594"/><stop offset=".3057" stop-color="#007894"/></linearGradient><linearGradient id="q295"><stop offset=".0986" stop-color="#038994"/><stop offset=".1038" stop-color="#008894"/><stop offset=".3069" stop-color="#007c94"/></linearGradient><linearGradient id="q296"><stop offset=".0976" stop-color="#038b94"/><stop offset=".1029" stop-color="#008b94"/><stop offset=".3079" stop-color="#008294"/></linearGradient><linearGradient id="q297"><stop offset=".0967" stop-color="#038e94"/><stop offset=".1021" stop-color="#008d94"/><stop offset=".309" stop-color="#008794"/></linearGradient><linearGradient id="q298"><stop offset=".0959" stop-color="#039094"/><stop offset=".1013" stop-color="#009094"/><stop offset=".3103" stop-color="#008c94"/></linearGradient><linearGradient id="q299"><stop offset=".0951" stop-color="#039394"/><stop offset=".1006" stop-color="#009394"/><stop offset=".3117" stop-color="#009294"/></linearGradient><path id="w1" d="M0 0L700 -8.73L700 8.73Z"/><linearGradient id="q300"><stop offset="0" stop-color="#ffffff"/><stop offset=".0222" stop-color="#b9fffe"/><stop offset=".0456" stop-color="#78fffe"/><stop offset=".0715" stop-color="#38fffd"/><stop offset=".0974" stop-color="#00fffc"/></linearGradient><linearGradient id="q301"><stop offset="0" stop-color="#ffffff"/><stop offset=".022" stop-color="#b9fffd"/><stop offset=".0453" stop-color="#77fffb"/><stop offset=".071" stop-color="#38fff9"/><stop offset=".0967" stop-color="#00fff8"/></linearGradient><linearGradient id="q302"><stop offset="0" stop-color="#ffffff"/><stop offset=".0219" stop-color="#b8fffc"/><stop offset=".045" stop-color="#77fff9"/><stop offset=".0706" stop-color="#37fff6"/><stop offset=".0961" stop-color="#00fff4"/></linearGradient><linearGradient id="q303"><stop offset="0" stop-color="#ffffff"/><stop offset=".0218" stop-color="#b8fffb"/><stop offset=".0447" stop-color="#76fff7"/><stop offset=".0701" stop-color="#37fff3"/><stop offset=".0955" stop-color="#00ffef"/></linearGradient><linearGradient id="q304"><stop offset="0" stop-color="#ffffff"/><stop offset=".0216" stop-color="#b7fffa"/><stop offset=".0445" stop-color="#76fff4"/><stop offset=".0697" stop-color="#37fff0"/><stop offset=".095" stop-color="#00ffeb"/></linearGradient><linearGradient id="q305"><stop offset="0" stop-color="#ffffff"/><stop offset=".0215" stop-color="#b7fff8"/><stop offset=".0442" stop-color="#75fff2"/><stop offset=".0694" stop-color="#36ffed"/><stop offset=".0945" stop-color="#00ffe8"/></linearGradient><linearGradient id="q306"><stop offset="0" stop-color="#ffffff"/><stop offset=".0214" stop-color="#b7fff7"/><stop offset=".044" stop-color="#75fff0"/><stop offset=".0678" stop-color="#39ffea"/><stop offset=".094" stop-color="#00ffe4"/></linearGradient><linearGradient id="q307"><stop offset="0" stop-color="#ffffff"/><stop offset=".0213" stop-color="#b6fff6"/><stop offset=".0439" stop-color="#74ffee"/><stop offset=".0676" stop-color="#38ffe7"/><stop offset=".0936" stop-color="#00ffe0"/></linearGradient><linearGradient id="q308"><stop offset="0" stop-color="#ffffff"/><stop offset=".0213" stop-color="#b6fff5"/><stop offset=".0437" stop-color="#74ffec"/><stop offset=".0673" stop-color="#38ffe4"/><stop offset=".0933" stop-color="#00ffdc"/></linearGradient><linearGradient id="q309"><stop offset="0" stop-color="#ffffff"/><stop offset=".02" stop-color="#b9fff5"/><stop offset=".0424" stop-color="#77ffeb"/><stop offset=".0671" stop-color="#38ffe1"/><stop offset=".093" stop-color="#00ffd9"/></linearGradient><linearGradient id="q310"><stop offset="0" stop-color="#ffffff"/><stop offset=".0199" stop-color="#b9fff4"/><stop offset=".0422" stop-color="#76ffe9"/><stop offset=".0669" stop-color="#37ffde"/><stop offset=".0927" stop-color="#00ffd5"/></linearGradient><linearGradient id="q311"><stop offset="0" stop-color="#ffffff"/><stop offset=".0199" stop-color="#b8fff3"/><stop offset=".0421" stop-color="#76ffe7"/><stop offset=".0667" stop-color="#37ffdc"/><stop offset=".0925" stop-color="#00ffd2"/></linearGradient><linearGradient id="q312"><stop offset="0" stop-color="#ffffff"/><stop offset=".0199" stop-color="#b8fff2"/><stop offset=".042" stop-color="#75ffe5"/><stop offset=".0666" stop-color="#37ffd9"/><stop offset=".0923" stop-color="#00ffcf"/></linearGradient><linearGradient id="q313"><stop offset="0" stop-color="#ffffff"/><stop offset=".0198" stop-color="#b8fff1"/><stop offset=".042" stop-color="#75ffe3"/><stop offset=".0665" stop-color="#37ffd6"/><stop offset=".0921" stop-color="#00ffcb"/></linearGradient><linearGradient id="q314"><stop offset="0" stop-color="#ffffff"/><stop offset=".0198" stop-color="#b7fff0"/><stop offset=".0419" stop-color="#74ffe1"/><stop offset=".0664" stop-color="#36ffd4"/><stop offset=".092" stop-color="#00ffc8"/></linearGradient><linearGradient id="q315"><stop offset="0" stop-color="#ffffff"/><stop offset=".0198" stop-color="#b7ffef"/><stop offset=".0419" stop-color="#74ffdf"/><stop offset=".0664" stop-color="#36ffd1"/><stop offset=".092" stop-color="#00ffc5"/></linearGradient><linearGradient id="q316"><stop offset="0" stop-color="#ffffff"/><stop offset=".0198" stop-color="#b7ffee"/><stop offset=".0419" stop-color="#73ffdd"/><stop offset=".0663" stop-color="#36ffcf"/><stop offset=".0919" stop-color="#00ffc2"/></linearGradient><linearGradient id="q317"><stop offset="0" stop-color="#ffffff"/><stop offset=".0198" stop-color="#b6ffed"/><stop offset=".0419" stop-color="#73ffdc"/><stop offset=".0663" stop-color="#35ffcc"/><stop offset=".092" stop-color="#00ffbf"/></linearGradient><linearGradient id="q318"><stop offset="0" stop-color="#ffffff"/><stop offset=".0198" stop-color="#b6ffec"/><stop offset=".0419" stop-color="#72ffda"/><stop offset=".0664" stop-color="#35ffca"/><stop offset=".092" stop-color="#00ffbc"/></linearGradient><linearGradient id="q319"><stop offset="0" stop-color="#ffffff"/><stop offset=".0198" stop-color="#b6ffeb"/><stop offset=".042" stop-color="#72ffd8"/><stop offset=".0665" stop-color="#35ffc7"/><stop offset=".0921" stop-color="#00ffb9"/></linearGradient><linearGradient id="q320"><stop offset="0" stop-color="#ffffff"/><stop offset=".0198" stop-color="#b5ffea"/><stop offset=".042" stop-color="#72ffd6"/><stop offset=".0666" stop-color="#34ffc5"/><stop offset=".0922" stop-color="#00ffb6"/></linearGradient><linearGradient id="q321"><stop offset="0" stop-color="#ffffff"/><stop offset=".0199" stop-color="#b5ffe9"/><stop offset=".0421" stop-color="#71ffd5"/><stop offset=".0667" stop-color="#34ffc2"/><stop offset=".0924" stop-color="#00ffb3"/></linearGradient><linearGradient id="q322"><stop offset="0" stop-color="#ffffff"/><stop offset=".0199" stop-color="#b4ffe8"/><stop offset=".0422" stop-color="#71ffd3"/><stop offset=".0668" stop-color="#34ffc0"/><stop offset=".0926" stop-color="#00ffb0"/></linearGradient><linearGradient id="q323"><stop offset="0" stop-color="#ffffff"/><stop offset=".02" stop-color="#b4ffe7"/><stop offset=".0412" stop-color="#74ffd2"/><stop offset=".0659" stop-color="#36ffbe"/><stop offset=".0929" stop-color="#00ffad"/></linearGradient><linearGradient id="q324"><stop offset="0" stop-color="#ffffff"/><stop offset=".0201" stop-color="#b4ffe6"/><stop offset=".0413" stop-color="#73ffd0"/><stop offset=".0661" stop-color="#36ffbc"/><stop offset=".0932" stop-color="#00ffaa"/></linearGradient><linearGradient id="q325"><stop offset="0" stop-color="#ffffff"/><stop offset=".0201" stop-color="#b3ffe5"/><stop offset=".0414" stop-color="#73ffcf"/><stop offset=".0663" stop-color="#36ffba"/><stop offset=".0936" stop-color="#00ffa7"/></linearGradient><linearGradient id="q326"><stop offset="0" stop-color="#ffffff"/><stop offset=".0202" stop-color="#b3ffe4"/><stop offset=".0416" stop-color="#72ffcd"/><stop offset=".0666" stop-color="#35ffb7"/><stop offset=".0939" stop-color="#00ffa4"/></linearGradient><linearGradient id="q327"><stop offset="0" stop-color="#ffffff"/><stop offset=".0203" stop-color="#b3ffe3"/><stop offset=".0418" stop-color="#72ffcb"/><stop offset=".0669" stop-color="#35ffb5"/><stop offset=".0944" stop-color="#00ffa2"/></linearGradient><linearGradient id="q328"><stop offset="0" stop-color="#ffffff"/><stop offset=".0204" stop-color="#b2ffe2"/><stop offset=".042" stop-color="#71ffca"/><stop offset=".0672" stop-color="#35ffb3"/><stop offset=".0949" stop-color="#00ff9f"/></linearGradient><linearGradient id="q329"><stop offset="0" stop-color="#ffffff"/><stop offset=".0205" stop-color="#b2ffe1"/><stop offset=".0423" stop-color="#71ffc8"/><stop offset=".0676" stop-color="#35ffb0"/><stop offset=".0954" stop-color="#00ff9c"/></linearGradient><linearGradient id="q330"><stop offset="0" stop-color="#ffffff"/><stop offset=".0194" stop-color="#b6ffe2"/><stop offset=".0425" stop-color="#71ffc6"/><stop offset=".068" stop-color="#34ffae"/><stop offset=".096" stop-color="#00ff99"/></linearGradient><linearGradient id="q331"><stop offset="0" stop-color="#ffffff"/><stop offset=".0196" stop-color="#b5ffe1"/><stop offset=".0428" stop-color="#70ffc4"/><stop offset=".0685" stop-color="#34ffac"/><stop offset=".0966" stop-color="#00ff96"/></linearGradient><linearGradient id="q332"><stop offset="0" stop-color="#ffffff"/><stop offset=".0197" stop-color="#b5ffe0"/><stop offset=".0431" stop-color="#70ffc3"/><stop offset=".069" stop-color="#34ffa9"/><stop offset=".0973" stop-color="#00ff93"/></linearGradient><linearGradient id="q333"><stop offset="0" stop-color="#ffffff"/><stop offset=".0198" stop-color="#b5ffdf"/><stop offset=".0434" stop-color="#6fffc1"/><stop offset=".0695" stop-color="#33ffa7"/><stop offset=".098" stop-color="#00ff91"/></linearGradient><linearGradient id="q334"><stop offset="0" stop-color="#ffffff"/><stop offset=".02" stop-color="#b4ffde"/><stop offset=".0438" stop-color="#6fffbf"/><stop offset=".07" stop-color="#33ffa5"/><stop offset=".0988" stop-color="#00ff8e"/></linearGradient><linearGradient id="q335"><stop offset="0" stop-color="#ffffff"/><stop offset=".0202" stop-color="#b4ffdd"/><stop offset=".0441" stop-color="#6effbd"/><stop offset=".0706" stop-color="#33ffa2"/><stop offset=".0996" stop-color="#00ff8b"/></linearGradient><linearGradient id="q336"><stop offset="0" stop-color="#ffffff"/><stop offset=".0204" stop-color="#b3ffdc"/><stop offset=".0445" stop-color="#6effbb"/><stop offset=".0713" stop-color="#33ffa0"/><stop offset=".1005" stop-color="#00ff88"/></linearGradient><linearGradient id="q337"><stop offset="0" stop-color="#ffffff"/><stop offset=".0206" stop-color="#b3ffdb"/><stop offset=".045" stop-color="#6dffba"/><stop offset=".0719" stop-color="#32ff9d"/><stop offset=".1015" stop-color="#00ff85"/></linearGradient><linearGradient id="q338"><stop offset="0" stop-color="#ffffff"/><stop offset=".0208" stop-color="#b3ffda"/><stop offset=".0441" stop-color="#70ffb9"/><stop offset=".0714" stop-color="#34ff9c"/><stop offset=".1025" stop-color="#00ff83"/></linearGradient><linearGradient id="q339"><stop offset="0" stop-color="#ffffff"/><stop offset=".021" stop-color="#b2ffd9"/><stop offset=".0446" stop-color="#70ffb8"/><stop offset=".0721" stop-color="#34ff9a"/><stop offset=".1036" stop-color="#00ff80"/></linearGradient><linearGradient id="q340"><stop offset="0" stop-color="#ffffff"/><stop offset=".0212" stop-color="#b2ffd8"/><stop offset=".0451" stop-color="#6fffb6"/><stop offset=".0729" stop-color="#34ff97"/><stop offset=".1048" stop-color="#00ff7d"/></linearGradient><linearGradient id="q341"><stop offset="0" stop-color="#ffffff"/><stop offset=".0215" stop-color="#b1ffd7"/><stop offset=".0456" stop-color="#6fffb4"/><stop offset=".0738" stop-color="#33ff95"/><stop offset=".106" stop-color="#00ff7a"/></linearGradient><linearGradient id="q342"><stop offset="0" stop-color="#ffffff"/><stop offset=".0217" stop-color="#b1ffd5"/><stop offset=".0462" stop-color="#6effb2"/><stop offset=".0747" stop-color="#33ff92"/><stop offset=".1073" stop-color="#00ff77"/></linearGradient><linearGradient id="q343"><stop offset="0" stop-color="#ffffff"/><stop offset=".022" stop-color="#b1ffd4"/><stop offset=".0468" stop-color="#6effb0"/><stop offset=".0757" stop-color="#33ff90"/><stop offset=".1087" stop-color="#00ff74"/></linearGradient><linearGradient id="q344"><stop offset="0" stop-color="#ffffff"/><stop offset=".0223" stop-color="#b0ffd3"/><stop offset=".0474" stop-color="#6dffae"/><stop offset=".0767" stop-color="#32ff8d"/><stop offset=".1102" stop-color="#00ff71"/></linearGradient><linearGradient id="q345"><stop offset="0" stop-color="#ffffff"/><stop offset=".0226" stop-color="#b0ffd2"/><stop offset=".0481" stop-color="#6dffac"/><stop offset=".0778" stop-color="#32ff8b"/><stop offset=".1118" stop-color="#00ff6e"/></linearGradient><linearGradient id="q346"><stop offset="0" stop-color="#ffffff"/><stop offset=".023" stop-color="#afffd1"/><stop offset=".0488" stop-color="#6cffaa"/><stop offset=".079" stop-color="#32ff88"/><stop offset=".1135" stop-color="#00ff6b"/></linearGradient><linearGradient id="q347"><stop offset="0" stop-color="#ffffff"/><stop offset=".0233" stop-color="#afffcf"/><stop offset=".0496" stop-color="#6cffa8"/><stop offset=".0802" stop-color="#31ff85"/><stop offset=".1152" stop-color="#00ff68"/></linearGradient><linearGradient id="q348"><stop offset="0" stop-color="#ffffff"/><stop offset=".0119" stop-color="#d3ffe5"/><stop offset=".0237" stop-color="#aeffce"/><stop offset=".0504" stop-color="#6bffa6"/><stop offset=".0815" stop-color="#31ff83"/><stop offset=".1171" stop-color="#00ff65"/></linearGradient><linearGradient id="q349"><stop offset="0" stop-color="#ffffff"/><stop offset=".0121" stop-color="#d3ffe4"/><stop offset=".0241" stop-color="#aeffcd"/><stop offset=".0513" stop-color="#6bffa3"/><stop offset=".0829" stop-color="#31ff80"/><stop offset=".1191" stop-color="#00ff62"/></linearGradient><linearGradient id="q350"><stop offset="0" stop-color="#ffffff"/><stop offset=".023" stop-color="#b2ffce"/><stop offset=".0506" stop-color="#6dffa3"/><stop offset=".0829" stop-color="#33ff7e"/><stop offset=".1212" stop-color="#00ff5e"/></linearGradient><linearGradient id="q351"><stop offset="0" stop-color="#ffffff"/><stop offset=".0234" stop-color="#b1ffcd"/><stop offset=".0516" stop-color="#6dffa1"/><stop offset=".0844" stop-color="#32ff7c"/><stop offset=".1235" stop-color="#00ff5b"/></linearGradient><linearGradient id="q352"><stop offset="0" stop-color="#ffffff"/><stop offset=".0112" stop-color="#d7ffe5"/><stop offset=".0239" stop-color="#b1ffcc"/><stop offset=".0526" stop-color="#6cff9f"/><stop offset=".086" stop-color="#32ff79"/><stop offset=".1258" stop-color="#00ff58"/></linearGradient><linearGradient id="q353"><stop offset="0" stop-color="#ffffff"/><stop offset=".0114" stop-color="#d7ffe4"/><stop offset=".0244" stop-color="#b0ffca"/><stop offset=".0536" stop-color="#6bff9c"/><stop offset=".0878" stop-color="#32ff76"/><stop offset=".1284" stop-color="#00ff54"/></linearGradient><linearGradient id="q354"><stop offset="0" stop-color="#ffffff"/><stop offset=".0116" stop-color="#d7ffe3"/><stop offset=".0249" stop-color="#afffc9"/><stop offset=".0548" stop-color="#6bff9a"/><stop offset=".0896" stop-color="#31ff73"/><stop offset=".1311" stop-color="#00ff51"/></linearGradient><linearGradient id="q355"><stop offset="0" stop-color="#ffffff"/><stop offset=".0119" stop-color="#d6ffe3"/><stop offset=".0254" stop-color="#afffc7"/><stop offset=".056" stop-color="#6aff97"/><stop offset=".0916" stop-color="#31ff6f"/><stop offset=".134" stop-color="#00ff4d"/></linearGradient><linearGradient id="q356"><stop offset="0" stop-color="#ffffff"/><stop offset=".0121" stop-color="#d6ffe2"/><stop offset=".026" stop-color="#aeffc6"/><stop offset=".0572" stop-color="#69ff95"/><stop offset=".0937" stop-color="#30ff6c"/><stop offset=".137" stop-color="#00ff4a"/></linearGradient><linearGradient id="q357"><stop offset="0" stop-color="#ffffff"/><stop offset=".0124" stop-color="#d5ffe1"/><stop offset=".0266" stop-color="#aeffc4"/><stop offset=".0586" stop-color="#69ff92"/><stop offset=".0959" stop-color="#30ff69"/><stop offset=".1403" stop-color="#00ff46"/></linearGradient><linearGradient id="q358"><stop offset="0" stop-color="#ffffff"/><stop offset=".0127" stop-color="#d5ffe0"/><stop offset=".0273" stop-color="#adffc2"/><stop offset=".0437" stop-color="#87ffa6"/><stop offset=".0601" stop-color="#68ff8f"/><stop offset=".0983" stop-color="#2fff65"/><stop offset=".1438" stop-color="#00ff42"/></linearGradient><linearGradient id="q359"><stop offset="0" stop-color="#ffffff"/><stop offset=".0131" stop-color="#d5ffdf"/><stop offset=".028" stop-color="#acffc0"/><stop offset=".0448" stop-color="#87ffa4"/><stop offset=".0616" stop-color="#67ff8c"/><stop offset=".1009" stop-color="#2fff62"/><stop offset=".1476" stop-color="#00ff3e"/></linearGradient><linearGradient id="q360"><stop offset="0" stop-color="#ffffff"/><stop offset=".0134" stop-color="#d4ffde"/><stop offset=".0288" stop-color="#acffbf"/><stop offset=".0614" stop-color="#6aff8c"/><stop offset=".1017" stop-color="#31ff60"/><stop offset=".1516" stop-color="#00ff3a"/></linearGradient><linearGradient id="q361"><stop offset="0" stop-color="#ffffff"/><stop offset=".0138" stop-color="#d4ffdd"/><stop offset=".0296" stop-color="#abffbd"/><stop offset=".0632" stop-color="#69ff89"/><stop offset=".1046" stop-color="#30ff5c"/><stop offset=".1559" stop-color="#00ff36"/></linearGradient><linearGradient id="q362"><stop offset="0" stop-color="#ffffff"/><stop offset=".0142" stop-color="#d3ffdc"/><stop offset=".0285" stop-color="#afffbe"/><stop offset=".0467" stop-color="#88ff9f"/><stop offset=".065" stop-color="#68ff85"/><stop offset=".1077" stop-color="#30ff58"/><stop offset=".1606" stop-color="#00ff32"/></linearGradient><linearGradient id="q363"><stop offset="0" stop-color="#ffffff"/><stop offset=".0147" stop-color="#d3ffdb"/><stop offset=".0293" stop-color="#aeffbc"/><stop offset=".0482" stop-color="#87ff9c"/><stop offset=".0671" stop-color="#67ff82"/><stop offset=".1111" stop-color="#2fff54"/><stop offset=".1656" stop-color="#00ff2d"/></linearGradient><linearGradient id="q364"><stop offset="0" stop-color="#ffffff"/><stop offset=".0151" stop-color="#d2ffd9"/><stop offset=".0303" stop-color="#adffba"/><stop offset=".0498" stop-color="#86ff99"/><stop offset=".0693" stop-color="#66ff7f"/><stop offset=".1147" stop-color="#2eff50"/><stop offset=".171" stop-color="#00ff29"/></linearGradient><linearGradient id="q365"><stop offset="0" stop-color="#ffffff"/><stop offset=".0157" stop-color="#d1ffd8"/><stop offset=".0313" stop-color="#acffb8"/><stop offset=".0515" stop-color="#85ff96"/><stop offset=".0716" stop-color="#65ff7b"/><stop offset=".1186" stop-color="#2eff4b"/><stop offset=".1768" stop-color="#00ff24"/></linearGradient><linearGradient id="q366"><stop offset="0" stop-color="#ffffff"/><stop offset=".0162" stop-color="#d1ffd6"/><stop offset=".0325" stop-color="#abffb5"/><stop offset=".0533" stop-color="#84ff93"/><stop offset=".0742" stop-color="#64ff77"/><stop offset=".1229" stop-color="#2dff47"/><stop offset=".1832" stop-color="#00ff1f"/></linearGradient><linearGradient id="q367"><stop offset="0" stop-color="#ffffff"/><stop offset=".0168" stop-color="#d0ffd5"/><stop offset=".0337" stop-color="#aaffb3"/><stop offset=".0529" stop-color="#87ff93"/><stop offset=".0746" stop-color="#66ff76"/><stop offset=".0986" stop-color="#49ff5c"/><stop offset=".1275" stop-color="#2dff42"/><stop offset=".1901" stop-color="#00ff1a"/></linearGradient><linearGradient id="q368"><stop offset="0" stop-color="#ffffff"/><stop offset=".0175" stop-color="#cfffd3"/><stop offset=".035" stop-color="#a9ffb0"/><stop offset=".055" stop-color="#85ff8f"/><stop offset=".0775" stop-color="#65ff72"/><stop offset=".1301" stop-color="#2eff3f"/><stop offset=".1976" stop-color="#00ff15"/></linearGradient><linearGradient id="q369"><stop offset="0" stop-color="#ffffff"/><stop offset=".0182" stop-color="#cfffd2"/><stop offset=".0365" stop-color="#a8ffad"/><stop offset=".0573" stop-color="#84ff8c"/><stop offset=".0808" stop-color="#64ff6d"/><stop offset=".1355" stop-color="#2dff3a"/><stop offset=".2058" stop-color="#00ff0f"/></linearGradient><linearGradient id="q370"><stop offset="0" stop-color="#ffffff"/><stop offset=".019" stop-color="#ceffd0"/><stop offset=".0381" stop-color="#a7ffaa"/><stop offset=".0598" stop-color="#83ff87"/><stop offset=".0843" stop-color="#62ff68"/><stop offset=".1414" stop-color="#2cff34"/><stop offset=".2149" stop-color="#00ff0a"/></linearGradient><linearGradient id="q371"><stop offset="0" stop-color="#ffffff"/><stop offset=".0199" stop-color="#cdffce"/><stop offset=".0399" stop-color="#a5ffa7"/><stop offset=".0626" stop-color="#81ff83"/><stop offset=".0882" stop-color="#61ff63"/><stop offset=".148" stop-color="#2cff2f"/><stop offset=".2249" stop-color="#00ff04"/></linearGradient><linearGradient id="q372"><stop offset="0" stop-color="#ffffff"/><stop offset=".0175" stop-color="#d3ffd3"/><stop offset=".0378" stop-color="#abffaa"/><stop offset=".0611" stop-color="#86ff85"/><stop offset=".0873" stop-color="#65ff64"/><stop offset=".1164" stop-color="#49ff47"/><stop offset=".1513" stop-color="#2dff2b"/><stop offset=".2298" stop-color="#03ff00"/></linearGradient><linearGradient id="q373"><stop offset="0" stop-color="#ffffff"/><stop offset=".0201" stop-color="#cfffcd"/><stop offset=".0402" stop-color="#a9ffa6"/><stop offset=".0631" stop-color="#86ff82"/><stop offset=".0889" stop-color="#67ff61"/><stop offset=".1492" stop-color="#33ff2c"/><stop offset=".2266" stop-color="#09ff00"/></linearGradient><linearGradient id="q374"><stop offset="0" stop-color="#ffffff"/><stop offset=".0198" stop-color="#d0ffce"/><stop offset=".0396" stop-color="#acffa6"/><stop offset=".0623" stop-color="#8aff82"/><stop offset=".0878" stop-color="#6bff62"/><stop offset=".1472" stop-color="#39ff2c"/><stop offset=".2236" stop-color="#0fff00"/></linearGradient><linearGradient id="q375"><stop offset="0" stop-color="#ffffff"/><stop offset=".0196" stop-color="#d2ffce"/><stop offset=".0391" stop-color="#aeffa7"/><stop offset=".0615" stop-color="#8eff83"/><stop offset=".0866" stop-color="#70ff63"/><stop offset=".1453" stop-color="#3eff2d"/><stop offset=".2208" stop-color="#15ff00"/></linearGradient><linearGradient id="q376"><stop offset="0" stop-color="#ffffff"/><stop offset=".0193" stop-color="#d4ffcf"/><stop offset=".0387" stop-color="#b1ffa8"/><stop offset=".0607" stop-color="#91ff84"/><stop offset=".0856" stop-color="#75ff64"/><stop offset=".1436" stop-color="#44ff2d"/><stop offset=".2181" stop-color="#1cff00"/></linearGradient><linearGradient id="q377"><stop offset="0" stop-color="#ffffff"/><stop offset=".0191" stop-color="#d5ffcf"/><stop offset=".0382" stop-color="#b4ffa9"/><stop offset=".06" stop-color="#95ff85"/><stop offset=".0846" stop-color="#79ff64"/><stop offset=".1419" stop-color="#49ff2e"/><stop offset=".2156" stop-color="#22ff00"/></linearGradient><linearGradient id="q378"><stop offset="0" stop-color="#ffffff"/><stop offset=".0189" stop-color="#d7ffd0"/><stop offset=".0378" stop-color="#b7ffa9"/><stop offset=".0594" stop-color="#99ff86"/><stop offset=".0837" stop-color="#7dff65"/><stop offset=".1404" stop-color="#4fff2e"/><stop offset=".2133" stop-color="#28ff00"/></linearGradient><linearGradient id="q379"><stop offset="0" stop-color="#ffffff"/><stop offset=".0187" stop-color="#d9ffd0"/><stop offset=".0374" stop-color="#b9ffaa"/><stop offset=".0588" stop-color="#9cff86"/><stop offset=".0828" stop-color="#82ff66"/><stop offset=".1095" stop-color="#6aff49"/><stop offset=".1416" stop-color="#53ff2c"/><stop offset=".211" stop-color="#2fff00"/></linearGradient><linearGradient id="q380"><stop offset="0" stop-color="#ffffff"/><stop offset=".0185" stop-color="#daffd0"/><stop offset=".037" stop-color="#bcffab"/><stop offset=".0582" stop-color="#a0ff87"/><stop offset=".082" stop-color="#86ff67"/><stop offset=".1084" stop-color="#6fff49"/><stop offset=".1402" stop-color="#58ff2d"/><stop offset=".209" stop-color="#35ff00"/></linearGradient><linearGradient id="q381"><stop offset="0" stop-color="#ffffff"/><stop offset=".0183" stop-color="#dcffd1"/><stop offset=".0367" stop-color="#bfffab"/><stop offset=".0603" stop-color="#a1ff84"/><stop offset=".0839" stop-color="#88ff64"/><stop offset=".1389" stop-color="#5eff2d"/><stop offset=".207" stop-color="#3bff00"/></linearGradient><linearGradient id="q382"><stop offset="0" stop-color="#ffffff"/><stop offset=".0182" stop-color="#ddffd1"/><stop offset=".0364" stop-color="#c1ffac"/><stop offset=".0597" stop-color="#a4ff85"/><stop offset=".0831" stop-color="#8dff65"/><stop offset=".1377" stop-color="#64ff2e"/><stop offset=".2052" stop-color="#42ff00"/></linearGradient><linearGradient id="q383"><stop offset="0" stop-color="#ffffff"/><stop offset=".018" stop-color="#dfffd2"/><stop offset=".0361" stop-color="#c4ffad"/><stop offset=".0592" stop-color="#a8ff86"/><stop offset=".0824" stop-color="#91ff66"/><stop offset=".1365" stop-color="#69ff2e"/><stop offset=".2035" stop-color="#48ff00"/></linearGradient><linearGradient id="q384"><stop offset="0" stop-color="#ffffff"/><stop offset=".0179" stop-color="#e0ffd2"/><stop offset=".0358" stop-color="#c6ffad"/><stop offset=".0588" stop-color="#abff86"/><stop offset=".0818" stop-color="#95ff66"/><stop offset=".1354" stop-color="#6fff2f"/><stop offset=".2019" stop-color="#4fff00"/></linearGradient><linearGradient id="q385"><stop offset="0" stop-color="#ffffff"/><stop offset=".0178" stop-color="#e1ffd3"/><stop offset=".0355" stop-color="#c9ffae"/><stop offset=".0583" stop-color="#afff87"/><stop offset=".0812" stop-color="#9aff67"/><stop offset=".1345" stop-color="#75ff2f"/><stop offset=".2004" stop-color="#55ff00"/></linearGradient><linearGradient id="q386"><stop offset="0" stop-color="#ffffff"/><stop offset=".0176" stop-color="#e3ffd3"/><stop offset=".0353" stop-color="#ccffaf"/><stop offset=".058" stop-color="#b3ff88"/><stop offset=".0806" stop-color="#9eff68"/><stop offset=".1335" stop-color="#7aff30"/><stop offset=".199" stop-color="#5cff00"/></linearGradient><linearGradient id="q387"><stop offset="0" stop-color="#ffffff"/><stop offset=".0175" stop-color="#e4ffd4"/><stop offset=".0376" stop-color="#cbffab"/><stop offset=".0801" stop-color="#a3ff69"/><stop offset=".1327" stop-color="#80ff30"/><stop offset=".1978" stop-color="#62ff00"/></linearGradient><linearGradient id="q388"><stop offset="0" stop-color="#ffffff"/><stop offset=".0174" stop-color="#e6ffd4"/><stop offset=".0373" stop-color="#ceffab"/><stop offset=".0796" stop-color="#a7ff69"/><stop offset=".1319" stop-color="#86ff30"/><stop offset=".1966" stop-color="#69ff00"/></linearGradient><linearGradient id="q389"><stop offset="0" stop-color="#ffffff"/><stop offset=".0173" stop-color="#e7ffd4"/><stop offset=".0371" stop-color="#d0ffac"/><stop offset=".0792" stop-color="#acff6a"/><stop offset=".1312" stop-color="#8cff31"/><stop offset=".1956" stop-color="#70ff00"/></linearGradient><linearGradient id="q390"><stop offset="0" stop-color="#ffffff"/><stop offset=".0172" stop-color="#e8ffd5"/><stop offset=".0369" stop-color="#d3ffad"/><stop offset=".0591" stop-color="#bfff87"/><stop offset=".0813" stop-color="#aeff68"/><stop offset=".133" stop-color="#90ff2f"/><stop offset=".1946" stop-color="#77ff00"/></linearGradient><linearGradient id="q391"><stop offset="0" stop-color="#ffffff"/><stop offset=".0172" stop-color="#eaffd5"/><stop offset=".0368" stop-color="#d6ffad"/><stop offset=".0809" stop-color="#b3ff68"/><stop offset=".1324" stop-color="#96ff30"/><stop offset=".1937" stop-color="#7eff00"/></linearGradient><linearGradient id="q392"><stop offset="0" stop-color="#ffffff"/><stop offset=".0171" stop-color="#ebffd6"/><stop offset=".0366" stop-color="#d8ffae"/><stop offset=".0806" stop-color="#b7ff69"/><stop offset=".1319" stop-color="#9cff30"/><stop offset=".1929" stop-color="#85ff00"/></linearGradient><linearGradient id="q393"><stop offset="0" stop-color="#ffffff"/><stop offset=".017" stop-color="#edffd6"/><stop offset=".0365" stop-color="#dbffaf"/><stop offset=".0803" stop-color="#bcff6a"/><stop offset=".1314" stop-color="#a2ff31"/><stop offset=".1922" stop-color="#8cff00"/></linearGradient><linearGradient id="q394"><stop offset="0" stop-color="#ffffff"/><stop offset=".017" stop-color="#eeffd6"/><stop offset=".0364" stop-color="#ddffaf"/><stop offset=".0801" stop-color="#c1ff6a"/><stop offset=".131" stop-color="#a8ff31"/><stop offset=".1916" stop-color="#94ff00"/></linearGradient><linearGradient id="q395"><stop offset="0" stop-color="#ffffff"/><stop offset=".0169" stop-color="#efffd7"/><stop offset=".0363" stop-color="#e0ffb0"/><stop offset=".0798" stop-color="#c5ff6b"/><stop offset=".1306" stop-color="#afff31"/><stop offset=".1911" stop-color="#9bff00"/></linearGradient><linearGradient id="q396"><stop offset="0" stop-color="#ffffff"/><stop offset=".0169" stop-color="#f1ffd7"/><stop offset=".0362" stop-color="#e3ffb1"/><stop offset=".0797" stop-color="#caff6c"/><stop offset=".1304" stop-color="#b5ff32"/><stop offset=".1907" stop-color="#a3ff00"/></linearGradient><linearGradient id="q397"><stop offset="0" stop-color="#ffffff"/><stop offset=".0361" stop-color="#e5ffb1"/><stop offset=".0795" stop-color="#cfff6d"/><stop offset=".1301" stop-color="#bcff32"/><stop offset=".1904" stop-color="#abff00"/></linearGradient><linearGradient id="q398"><stop offset="0" stop-color="#ffffff"/><stop offset=".0193" stop-color="#f2ffd3"/><stop offset=".0385" stop-color="#e7ffad"/><stop offset=".0818" stop-color="#d3ff6a"/><stop offset=".1323" stop-color="#c1ff31"/><stop offset=".1901" stop-color="#b3ff00"/></linearGradient><linearGradient id="q399"><stop offset="0" stop-color="#ffffff"/><stop offset=".0192" stop-color="#f3ffd3"/><stop offset=".0385" stop-color="#e9ffae"/><stop offset=".0817" stop-color="#d8ff6b"/><stop offset=".1322" stop-color="#c8ff31"/><stop offset=".1899" stop-color="#bbff00"/></linearGradient><linearGradient id="q400"><stop offset="0" stop-color="#ffffff"/><stop offset=".0384" stop-color="#ecffaf"/><stop offset=".0817" stop-color="#ddff6c"/><stop offset=".1322" stop-color="#cfff32"/><stop offset=".1898" stop-color="#c3ff00"/></linearGradient><linearGradient id="q401"><stop offset="0" stop-color="#ffffff"/><stop offset=".0384" stop-color="#efffb0"/><stop offset=".0817" stop-color="#e2ff6d"/><stop offset=".1322" stop-color="#d6ff32"/><stop offset=".1898" stop-color="#ccff00"/></linearGradient><linearGradient id="q402"><stop offset="0" stop-color="#ffffff"/><stop offset=".0385" stop-color="#f2ffb0"/><stop offset=".0817" stop-color="#e7ff6d"/><stop offset=".1322" stop-color="#ddff33"/><stop offset=".1899" stop-color="#d5ff00"/></linearGradient><linearGradient id="q403"><stop offset="0" stop-color="#ffffff"/><stop offset=".0385" stop-color="#f5ffb1"/><stop offset=".0818" stop-color="#ecff6e"/><stop offset=".1323" stop-color="#e5ff33"/><stop offset=".1901" stop-color="#deff00"/></linearGradient><linearGradient id="q404"><stop offset="0" stop-color="#ffffff"/><stop offset=".0385" stop-color="#f8ffb2"/><stop offset=".0819" stop-color="#f2ff6f"/><stop offset=".1325" stop-color="#ecff34"/><stop offset=".1903" stop-color="#e7ff00"/></linearGradient><linearGradient id="q405"><stop offset="0" stop-color="#ffffff"/><stop offset=".0386" stop-color="#fbffb2"/><stop offset=".082" stop-color="#f7ff70"/><stop offset=".1327" stop-color="#f4ff34"/><stop offset=".1906" stop-color="#f1ff00"/></linearGradient><linearGradient id="q406"><stop offset="0" stop-color="#ffffff"/><stop offset=".0387" stop-color="#feffb3"/><stop offset=".0846" stop-color="#fdff6e"/><stop offset=".1354" stop-color="#fcff32"/><stop offset=".191" stop-color="#fbff00"/></linearGradient><linearGradient id="q407"><stop offset="0" stop-color="#ffffff"/><stop offset=".0388" stop-color="#fffdb3"/><stop offset=".0824" stop-color="#fffc70"/><stop offset=".1333" stop-color="#fffa34"/><stop offset=".1915" stop-color="#fff900"/></linearGradient><linearGradient id="q408"><stop offset="0" stop-color="#ffffff"/><stop offset=".0389" stop-color="#fffab1"/><stop offset=".0827" stop-color="#fff66f"/><stop offset=".1338" stop-color="#fff333"/><stop offset=".1921" stop-color="#ffef00"/></linearGradient><linearGradient id="q409"><stop offset="0" stop-color="#ffffff"/><stop offset=".039" stop-color="#fff7b0"/><stop offset=".083" stop-color="#fff16d"/><stop offset=".1342" stop-color="#ffeb32"/><stop offset=".1928" stop-color="#ffe600"/></linearGradient><linearGradient id="q410"><stop offset="0" stop-color="#ffffff"/><stop offset=".0392" stop-color="#fff4af"/><stop offset=".0833" stop-color="#ffeb6c"/><stop offset=".1348" stop-color="#ffe431"/><stop offset=".1936" stop-color="#ffdd00"/></linearGradient><linearGradient id="q411"><stop offset="0" stop-color="#ffffff"/><stop offset=".0369" stop-color="#fff2b2"/><stop offset=".0812" stop-color="#ffe76d"/><stop offset=".1329" stop-color="#ffdd33"/><stop offset=".1944" stop-color="#ffd500"/></linearGradient><linearGradient id="q412"><stop offset="0" stop-color="#ffffff"/><stop offset=".0173" stop-color="#fff7d7"/><stop offset=".0371" stop-color="#ffefb0"/><stop offset=".0816" stop-color="#ffe26c"/><stop offset=".1335" stop-color="#ffd632"/><stop offset=".1954" stop-color="#ffcc00"/></linearGradient><linearGradient id="q413"><stop offset="0" stop-color="#ffffff"/><stop offset=".0174" stop-color="#fff6d6"/><stop offset=".0373" stop-color="#ffedaf"/><stop offset=".082" stop-color="#ffdd6a"/><stop offset=".1343" stop-color="#ffd031"/><stop offset=".1964" stop-color="#ffc400"/></linearGradient><linearGradient id="q414"><stop offset="0" stop-color="#ffffff"/><stop offset=".0175" stop-color="#fff4d6"/><stop offset=".0375" stop-color="#ffeaae"/><stop offset=".0825" stop-color="#ffd869"/><stop offset=".135" stop-color="#ffc930"/><stop offset=".1976" stop-color="#ffbd00"/></linearGradient><linearGradient id="q415"><stop offset="0" stop-color="#ffffff"/><stop offset=".0176" stop-color="#fff3d5"/><stop offset=".0377" stop-color="#ffe7ad"/><stop offset=".0604" stop-color="#ffdc87"/><stop offset=".083" stop-color="#ffd368"/><stop offset=".1359" stop-color="#ffc32f"/><stop offset=".1988" stop-color="#ffb500"/></linearGradient><linearGradient id="q416"><stop offset="0" stop-color="#ffffff"/><stop offset=".0177" stop-color="#fff1d4"/><stop offset=".038" stop-color="#ffe4ab"/><stop offset=".0811" stop-color="#ffd069"/><stop offset=".1343" stop-color="#ffbe30"/><stop offset=".2001" stop-color="#ffae00"/></linearGradient><linearGradient id="q417"><stop offset="0" stop-color="#ffffff"/><stop offset=".0179" stop-color="#fff0d3"/><stop offset=".0383" stop-color="#ffe2aa"/><stop offset=".0817" stop-color="#ffcb68"/><stop offset=".1352" stop-color="#ffb830"/><stop offset=".2016" stop-color="#ffa700"/></linearGradient><linearGradient id="q418"><stop offset="0" stop-color="#ffffff"/><stop offset=".018" stop-color="#ffefd2"/><stop offset=".036" stop-color="#ffe1ad"/><stop offset=".0591" stop-color="#ffd286"/><stop offset=".0823" stop-color="#ffc767"/><stop offset=".1363" stop-color="#ffb22f"/><stop offset=".2032" stop-color="#ffa000"/></linearGradient><linearGradient id="q419"><stop offset="0" stop-color="#ffffff"/><stop offset=".0182" stop-color="#ffedd2"/><stop offset=".0363" stop-color="#ffdeac"/><stop offset=".0596" stop-color="#ffcf85"/><stop offset=".083" stop-color="#ffc265"/><stop offset=".1374" stop-color="#ffac2e"/><stop offset=".2048" stop-color="#ff9a00"/></linearGradient><linearGradient id="q420"><stop offset="0" stop-color="#ffffff"/><stop offset=".0183" stop-color="#ffecd1"/><stop offset=".0366" stop-color="#ffdcab"/><stop offset=".0602" stop-color="#ffcb84"/><stop offset=".0837" stop-color="#ffbe64"/><stop offset=".1386" stop-color="#ffa72d"/><stop offset=".2066" stop-color="#ff9400"/></linearGradient><linearGradient id="q421"><stop offset="0" stop-color="#ffffff"/><stop offset=".0185" stop-color="#ffead0"/><stop offset=".037" stop-color="#ffd9aa"/><stop offset=".0581" stop-color="#ffc986"/><stop offset=".0818" stop-color="#ffbb66"/><stop offset=".1082" stop-color="#ffae48"/><stop offset=".1399" stop-color="#ffa12c"/><stop offset=".2086" stop-color="#ff8d00"/></linearGradient><linearGradient id="q422"><stop offset="0" stop-color="#ffffff"/><stop offset=".0187" stop-color="#ffe9cf"/><stop offset=".0373" stop-color="#ffd6a9"/><stop offset=".0587" stop-color="#ffc685"/><stop offset=".0827" stop-color="#ffb664"/><stop offset=".1386" stop-color="#ff9d2e"/><stop offset=".2106" stop-color="#ff8700"/></linearGradient><linearGradient id="q423"><stop offset="0" stop-color="#ffffff"/><stop offset=".0189" stop-color="#ffe7ce"/><stop offset=".0377" stop-color="#ffd4a7"/><stop offset=".0593" stop-color="#ffc283"/><stop offset=".0835" stop-color="#ffb263"/><stop offset=".1401" stop-color="#ff972d"/><stop offset=".2128" stop-color="#ff8100"/></linearGradient><linearGradient id="q424"><stop offset="0" stop-color="#ffffff"/><stop offset=".0191" stop-color="#ffe5cd"/><stop offset=".0381" stop-color="#ffd1a6"/><stop offset=".0599" stop-color="#ffbf82"/><stop offset=".0844" stop-color="#ffae62"/><stop offset=".1416" stop-color="#ff922c"/><stop offset=".2151" stop-color="#ff7c00"/></linearGradient><linearGradient id="q425"><stop offset="0" stop-color="#ffffff"/><stop offset=".0165" stop-color="#ffe7d3"/><stop offset=".0358" stop-color="#ffd1aa"/><stop offset=".0579" stop-color="#ffbd85"/><stop offset=".0826" stop-color="#ffac64"/><stop offset=".1102" stop-color="#ff9c47"/><stop offset=".1432" stop-color="#ff8d2b"/><stop offset=".2176" stop-color="#ff7600"/></linearGradient><linearGradient id="q426"><stop offset="0" stop-color="#ffffff"/><stop offset=".0167" stop-color="#ffe6d2"/><stop offset=".0362" stop-color="#ffcfa9"/><stop offset=".0586" stop-color="#ffba83"/><stop offset=".0836" stop-color="#ffa762"/><stop offset=".1115" stop-color="#ff9745"/><stop offset=".145" stop-color="#ff882a"/><stop offset=".2203" stop-color="#ff7000"/></linearGradient><linearGradient id="q427"><stop offset="0" stop-color="#ffffff"/><stop offset=".0169" stop-color="#ffe4d1"/><stop offset=".0367" stop-color="#ffcca7"/><stop offset=".0593" stop-color="#ffb682"/><stop offset=".0847" stop-color="#ffa361"/><stop offset=".1129" stop-color="#ff9344"/><stop offset=".1468" stop-color="#ff832a"/><stop offset=".2231" stop-color="#ff6b00"/></linearGradient><linearGradient id="q428"><stop offset="0" stop-color="#ffffff"/><stop offset=".0172" stop-color="#ffe3d0"/><stop offset=".0372" stop-color="#ffcaa6"/><stop offset=".0601" stop-color="#ffb381"/><stop offset=".0858" stop-color="#ff9f60"/><stop offset=".1144" stop-color="#ff8e43"/><stop offset=".1488" stop-color="#ff7e29"/><stop offset=".226" stop-color="#ff6600"/></linearGradient><linearGradient id="q429"><stop offset="0" stop-color="#ffffff"/><stop offset=".0174" stop-color="#ffe2d0"/><stop offset=".0377" stop-color="#ffc7a5"/><stop offset=".0609" stop-color="#ffaf7f"/><stop offset=".087" stop-color="#ff9b5e"/><stop offset=".116" stop-color="#ff8a42"/><stop offset=".148" stop-color="#ff7a2a"/><stop offset=".2292" stop-color="#ff6000"/></linearGradient><linearGradient id="q430"><stop offset="0" stop-color="#ffffff"/><stop offset=".0177" stop-color="#ffe0cf"/><stop offset=".0383" stop-color="#ffc4a3"/><stop offset=".0589" stop-color="#ffaf82"/><stop offset=".0854" stop-color="#ff9960"/><stop offset=".1148" stop-color="#ff8744"/><stop offset=".1501" stop-color="#ff7629"/><stop offset=".2325" stop-color="#ff5b00"/></linearGradient><linearGradient id="q431"><stop offset="0" stop-color="#ffffff"/><stop offset=".0179" stop-color="#ffdece"/><stop offset=".0388" stop-color="#ffc2a2"/><stop offset=".0598" stop-color="#ffab80"/><stop offset=".0867" stop-color="#ff955f"/><stop offset=".1165" stop-color="#ff8242"/><stop offset=".1524" stop-color="#ff7128"/><stop offset=".2361" stop-color="#ff5600"/></linearGradient><linearGradient id="q432"><stop offset="0" stop-color="#ffffff"/><stop offset=".0182" stop-color="#ffddcd"/><stop offset=".0395" stop-color="#ffbfa1"/><stop offset=".0607" stop-color="#ffa87f"/><stop offset=".088" stop-color="#ff915e"/><stop offset=".1184" stop-color="#ff7e41"/><stop offset=".1548" stop-color="#ff6c28"/><stop offset=".2399" stop-color="#ff5100"/></linearGradient><linearGradient id="q433"><stop offset="0" stop-color="#ffffff"/><stop offset=".0185" stop-color="#ffdbcc"/><stop offset=".037" stop-color="#ffc0a5"/><stop offset=".0617" stop-color="#ffa47e"/><stop offset=".0895" stop-color="#ff8d5c"/><stop offset=".1204" stop-color="#ff7940"/><stop offset=".1574" stop-color="#ff6727"/><stop offset=".2439" stop-color="#ff4c00"/></linearGradient><linearGradient id="q434"><stop offset="0" stop-color="#ffffff"/><stop offset=".0188" stop-color="#ffdacb"/><stop offset=".0377" stop-color="#ffbda4"/><stop offset=".0628" stop-color="#ffa17c"/><stop offset=".0911" stop-color="#ff895b"/><stop offset=".1225" stop-color="#ff753f"/><stop offset=".1602" stop-color="#ff6326"/><stop offset=".2481" stop-color="#ff4700"/></linearGradient><linearGradient id="q435"><stop offset="0" stop-color="#ffffff"/><stop offset=".0192" stop-color="#ffd8ca"/><stop offset=".0384" stop-color="#ffbaa2"/><stop offset=".0608" stop-color="#ffa07f"/><stop offset=".0895" stop-color="#ff875d"/><stop offset=".1215" stop-color="#ff7240"/><stop offset=".1599" stop-color="#ff5f27"/><stop offset=".2526" stop-color="#ff4200"/></linearGradient><linearGradient id="q436"><stop offset="0" stop-color="#ffffff"/><stop offset=".0195" stop-color="#ffd6c9"/><stop offset=".0391" stop-color="#ffb8a1"/><stop offset=".0619" stop-color="#ff9d7d"/><stop offset=".0912" stop-color="#ff835b"/><stop offset=".1238" stop-color="#ff6e3f"/><stop offset=".1629" stop-color="#ff5b26"/><stop offset=".2574" stop-color="#ff3e00"/></linearGradient><linearGradient id="q437"><stop offset="0" stop-color="#ffffff"/><stop offset=".0199" stop-color="#ffd4c8"/><stop offset=".0399" stop-color="#ffb5a0"/><stop offset=".0631" stop-color="#ff997c"/><stop offset=".093" stop-color="#ff7f5a"/><stop offset=".1263" stop-color="#ff693e"/><stop offset=".1661" stop-color="#ff5626"/><stop offset=".2625" stop-color="#ff3900"/></linearGradient><linearGradient id="q438"><stop offset="0" stop-color="#ffffff"/><stop offset=".0203" stop-color="#ffd2c7"/><stop offset=".0407" stop-color="#ffb29e"/><stop offset=".0644" stop-color="#ff957a"/><stop offset=".095" stop-color="#ff7b58"/><stop offset=".1289" stop-color="#ff653d"/><stop offset=".1696" stop-color="#ff5125"/><stop offset=".2679" stop-color="#ff3400"/></linearGradient><linearGradient id="q439"><stop offset="0" stop-color="#ffffff"/><stop offset=".0208" stop-color="#ffd1c6"/><stop offset=".0416" stop-color="#ffaf9d"/><stop offset=".0658" stop-color="#ff9279"/><stop offset=".097" stop-color="#ff7657"/><stop offset=".1316" stop-color="#ff603c"/><stop offset=".1732" stop-color="#ff4d24"/><stop offset=".2737" stop-color="#ff2f00"/></linearGradient><linearGradient id="q440"><stop offset="0" stop-color="#ffffff"/><stop offset=".0177" stop-color="#ffd6cd"/><stop offset=".039" stop-color="#ffb1a1"/><stop offset=".0638" stop-color="#ff927c"/><stop offset=".0956" stop-color="#ff7559"/><stop offset=".1311" stop-color="#ff5e3d"/><stop offset=".1736" stop-color="#ff4a25"/><stop offset=".2798" stop-color="#ff2b00"/></linearGradient><linearGradient id="q441"><stop offset="0" stop-color="#ffffff"/><stop offset=".0181" stop-color="#ffd4cc"/><stop offset=".0399" stop-color="#ffaea0"/><stop offset=".0653" stop-color="#ff8e7a"/><stop offset=".0979" stop-color="#ff7057"/><stop offset=".1341" stop-color="#ff593c"/><stop offset=".1776" stop-color="#ff4524"/><stop offset=".2864" stop-color="#ff2600"/></linearGradient><linearGradient id="q442"><stop offset="0" stop-color="#ffffff"/><stop offset=".0186" stop-color="#ffd2cb"/><stop offset=".0409" stop-color="#ffab9e"/><stop offset=".0668" stop-color="#ff8a78"/><stop offset=".1003" stop-color="#ff6c56"/><stop offset=".1374" stop-color="#ff553b"/><stop offset=".182" stop-color="#ff4023"/><stop offset=".2934" stop-color="#ff2200"/></linearGradient><linearGradient id="q443"><stop offset="0" stop-color="#ffffff"/><stop offset=".019" stop-color="#ffd0ca"/><stop offset=".0419" stop-color="#ffa89c"/><stop offset=".0686" stop-color="#ff8677"/><stop offset=".1028" stop-color="#ff6854"/><stop offset=".1409" stop-color="#ff5039"/><stop offset=".1866" stop-color="#ff3c23"/><stop offset=".3009" stop-color="#ff1d00"/></linearGradient><linearGradient id="q444"><stop offset="0" stop-color="#ffffff"/><stop offset=".0196" stop-color="#ffcec9"/><stop offset=".043" stop-color="#ffa49b"/><stop offset=".0704" stop-color="#ff8275"/><stop offset=".1017" stop-color="#ff6656"/><stop offset=".1408" stop-color="#ff4d3b"/><stop offset=".1877" stop-color="#ff3823"/><stop offset=".2424" stop-color="#ff2710"/><stop offset=".3089" stop-color="#ff1800"/></linearGradient><linearGradient id="q445"><stop offset="0" stop-color="#ffffff"/><stop offset=".0201" stop-color="#ffccc7"/><stop offset=".0442" stop-color="#ffa199"/><stop offset=".0723" stop-color="#ff7e73"/><stop offset=".1045" stop-color="#ff6254"/><stop offset=".1447" stop-color="#ff4939"/><stop offset=".1929" stop-color="#ff3422"/><stop offset=".2492" stop-color="#ff2310"/><stop offset=".3175" stop-color="#ff1400"/></linearGradient><linearGradient id="q446"><stop offset="0" stop-color="#ffffff"/><stop offset=".0207" stop-color="#ffcac6"/><stop offset=".0455" stop-color="#ff9d97"/><stop offset=".0744" stop-color="#ff7a71"/><stop offset=".1075" stop-color="#ff5d53"/><stop offset=".1489" stop-color="#ff4438"/><stop offset=".1985" stop-color="#ff2f22"/><stop offset=".3267" stop-color="#ff0f00"/></linearGradient><linearGradient id="q447"><stop offset="0" stop-color="#ffffff"/><stop offset=".0213" stop-color="#ffc7c5"/><stop offset=".0469" stop-color="#ff9a95"/><stop offset=".0767" stop-color="#ff756f"/><stop offset=".1108" stop-color="#ff5851"/><stop offset=".1534" stop-color="#ff3f37"/><stop offset=".2046" stop-color="#ff2a21"/><stop offset=".3367" stop-color="#ff0b00"/></linearGradient><linearGradient id="q448"><stop offset="0" stop-color="#ffffff"/><stop offset=".022" stop-color="#ffc5c3"/><stop offset=".044" stop-color="#ff9d9a"/><stop offset=".0748" stop-color="#ff7572"/><stop offset=".1099" stop-color="#ff5753"/><stop offset=".1539" stop-color="#ff3c38"/><stop offset=".2067" stop-color="#ff2721"/><stop offset=".2727" stop-color="#ff150f"/><stop offset=".3474" stop-color="#ff0600"/></linearGradient><linearGradient id="q449"><stop offset="0" stop-color="#ffffff"/><stop offset=".0091" stop-color="#ffe4e4"/><stop offset=".0227" stop-color="#ffc2c2"/><stop offset=".0454" stop-color="#ff9998"/><stop offset=".0773" stop-color="#ff7170"/><stop offset=".1136" stop-color="#ff5251"/><stop offset=".1591" stop-color="#ff3836"/><stop offset=".2136" stop-color="#ff2220"/><stop offset=".2818" stop-color="#ff100e"/><stop offset=".359" stop-color="#ff0200"/></linearGradient><linearGradient id="q450"><stop offset="0" stop-color="#ffffff"/><stop offset=".0223" stop-color="#ffc2c3"/><stop offset=".0447" stop-color="#ff999a"/><stop offset=".076" stop-color="#ff7072"/><stop offset=".1117" stop-color="#ff5153"/><stop offset=".1564" stop-color="#ff3639"/><stop offset=".21" stop-color="#ff2123"/><stop offset=".2771" stop-color="#ff0e11"/><stop offset=".3531" stop-color="#ff0003"/></linearGradient><linearGradient id="q451"><stop offset="0" stop-color="#ffffff"/><stop offset=".0213" stop-color="#ffc4c5"/><stop offset=".0426" stop-color="#ff9b9d"/><stop offset=".0725" stop-color="#ff7276"/><stop offset=".1066" stop-color="#ff5358"/><stop offset=".1493" stop-color="#ff383d"/><stop offset=".2004" stop-color="#ff2228"/><stop offset=".2644" stop-color="#ff0f15"/><stop offset=".3369" stop-color="#ff0007"/></linearGradient><linearGradient id="q452"><stop offset="0" stop-color="#ffffff"/><stop offset=".0204" stop-color="#ffc5c8"/><stop offset=".0449" stop-color="#ff969a"/><stop offset=".0734" stop-color="#ff7076"/><stop offset=".1061" stop-color="#ff5159"/><stop offset=".1469" stop-color="#ff3740"/><stop offset=".1958" stop-color="#ff212b"/><stop offset=".3223" stop-color="#ff000b"/></linearGradient><linearGradient id="q453"><stop offset="0" stop-color="#ffffff"/><stop offset=".0196" stop-color="#ffc6ca"/><stop offset=".043" stop-color="#ff979e"/><stop offset=".0704" stop-color="#ff717a"/><stop offset=".1017" stop-color="#ff535d"/><stop offset=".1408" stop-color="#ff3844"/><stop offset=".1878" stop-color="#ff222f"/><stop offset=".309" stop-color="#ff000f"/></linearGradient><linearGradient id="q454"><stop offset="0" stop-color="#ffffff"/><stop offset=".0188" stop-color="#ffc7cc"/><stop offset=".0413" stop-color="#ff99a1"/><stop offset=".0677" stop-color="#ff737e"/><stop offset=".0977" stop-color="#ff5461"/><stop offset=".1353" stop-color="#ff3948"/><stop offset=".1804" stop-color="#ff2233"/><stop offset=".2969" stop-color="#ff0014"/></linearGradient><linearGradient id="q455"><stop offset="0" stop-color="#ffffff"/><stop offset=".0181" stop-color="#ffc8cd"/><stop offset=".0398" stop-color="#ff9aa4"/><stop offset=".0651" stop-color="#ff7581"/><stop offset=".0941" stop-color="#ff5665"/><stop offset=".1303" stop-color="#ff3a4c"/><stop offset=".1737" stop-color="#ff2337"/><stop offset=".2243" stop-color="#ff1026"/><stop offset=".2859" stop-color="#ff0017"/></linearGradient><linearGradient id="q456"><stop offset="0" stop-color="#ffffff"/><stop offset=".0174" stop-color="#ffc9cf"/><stop offset=".0384" stop-color="#ff9ca6"/><stop offset=".0628" stop-color="#ff7685"/><stop offset=".0907" stop-color="#ff5769"/><stop offset=".1256" stop-color="#ff3b50"/><stop offset=".1675" stop-color="#ff243b"/><stop offset=".2164" stop-color="#ff112a"/><stop offset=".2757" stop-color="#ff001b"/></linearGradient><linearGradient id="q457"><stop offset="0" stop-color="#ffffff"/><stop offset=".0169" stop-color="#ffcad1"/><stop offset=".0371" stop-color="#ff9da9"/><stop offset=".0607" stop-color="#ff7788"/><stop offset=".091" stop-color="#ff556a"/><stop offset=".1248" stop-color="#ff3a52"/><stop offset=".1652" stop-color="#ff233e"/><stop offset=".2664" stop-color="#ff001f"/></linearGradient><linearGradient id="q458"><stop offset="0" stop-color="#ffffff"/><stop offset=".0163" stop-color="#ffcbd2"/><stop offset=".0359" stop-color="#ff9eac"/><stop offset=".0587" stop-color="#ff798b"/><stop offset=".0881" stop-color="#ff566d"/><stop offset=".1207" stop-color="#ff3b56"/><stop offset=".1599" stop-color="#ff2441"/><stop offset=".2577" stop-color="#ff0023"/></linearGradient><linearGradient id="q459"><stop offset="0" stop-color="#ffffff"/><stop offset=".0158" stop-color="#ffccd4"/><stop offset=".0348" stop-color="#ffa0ae"/><stop offset=".0569" stop-color="#ff7a8e"/><stop offset=".0854" stop-color="#ff5771"/><stop offset=".117" stop-color="#ff3c59"/><stop offset=".1549" stop-color="#ff2445"/><stop offset=".2498" stop-color="#ff0026"/></linearGradient><linearGradient id="q460"><stop offset="0" stop-color="#ffffff"/><stop offset=".0153" stop-color="#ffcdd5"/><stop offset=".0337" stop-color="#ffa1b0"/><stop offset=".0552" stop-color="#ff7b91"/><stop offset=".0828" stop-color="#ff5974"/><stop offset=".1135" stop-color="#ff3d5d"/><stop offset=".1503" stop-color="#ff2548"/><stop offset=".2424" stop-color="#ff002a"/></linearGradient><linearGradient id="q461"><stop offset="0" stop-color="#ffffff"/><stop offset=".0149" stop-color="#ffced6"/><stop offset=".0328" stop-color="#ffa2b2"/><stop offset=".0537" stop-color="#ff7d94"/><stop offset=".0805" stop-color="#ff5a77"/><stop offset=".1103" stop-color="#ff3e60"/><stop offset=".1461" stop-color="#ff254c"/><stop offset=".2355" stop-color="#ff002d"/></linearGradient><linearGradient id="q462"><stop offset="0" stop-color="#ffffff"/><stop offset=".0174" stop-color="#ffc6d1"/><stop offset=".0348" stop-color="#ff9db0"/><stop offset=".0551" stop-color="#ff7993"/><stop offset=".0812" stop-color="#ff5877"/><stop offset=".1102" stop-color="#ff3c61"/><stop offset=".145" stop-color="#ff244e"/><stop offset=".2291" stop-color="#ff0030"/></linearGradient><linearGradient id="q463"><stop offset="0" stop-color="#ffffff"/><stop offset=".0169" stop-color="#ffc7d2"/><stop offset=".0339" stop-color="#ff9eb2"/><stop offset=".0537" stop-color="#ff7a95"/><stop offset=".0791" stop-color="#ff597a"/><stop offset=".1073" stop-color="#ff3d64"/><stop offset=".1412" stop-color="#ff2551"/><stop offset=".2232" stop-color="#ff0034"/></linearGradient><linearGradient id="q464"><stop offset="0" stop-color="#ffffff"/><stop offset=".0165" stop-color="#ffc8d4"/><stop offset=".0331" stop-color="#ff9fb4"/><stop offset=".0523" stop-color="#ff7b98"/><stop offset=".0771" stop-color="#ff5a7d"/><stop offset=".1047" stop-color="#ff3e67"/><stop offset=".1377" stop-color="#ff2554"/><stop offset=".2176" stop-color="#ff0037"/></linearGradient><linearGradient id="q465"><stop offset="0" stop-color="#ffffff"/><stop offset=".0161" stop-color="#ffc8d5"/><stop offset=".0323" stop-color="#ffa0b6"/><stop offset=".0511" stop-color="#ff7c9a"/><stop offset=".0753" stop-color="#ff5a80"/><stop offset=".1022" stop-color="#ff3f6a"/><stop offset=".1344" stop-color="#ff2657"/><stop offset=".2124" stop-color="#ff003a"/></linearGradient><linearGradient id="q466"><stop offset="0" stop-color="#ffffff"/><stop offset=".0158" stop-color="#ffc9d6"/><stop offset=".0315" stop-color="#ffa1b8"/><stop offset=".0499" stop-color="#ff7d9d"/><stop offset=".0736" stop-color="#ff5b83"/><stop offset=".0998" stop-color="#ff3f6d"/><stop offset=".1313" stop-color="#ff265a"/><stop offset=".2075" stop-color="#ff003d"/></linearGradient><linearGradient id="q467"><stop offset="0" stop-color="#ffffff"/><stop offset=".0154" stop-color="#ffcad7"/><stop offset=".0308" stop-color="#ffa2b9"/><stop offset=".0488" stop-color="#ff7e9f"/><stop offset=".0719" stop-color="#ff5c85"/><stop offset=".0976" stop-color="#ff4070"/><stop offset=".1285" stop-color="#ff275d"/><stop offset=".203" stop-color="#ff0040"/></linearGradient><linearGradient id="q468"><stop offset="0" stop-color="#ffffff"/><stop offset=".0151" stop-color="#ffcad8"/><stop offset=".0302" stop-color="#ffa3bb"/><stop offset=".0478" stop-color="#ff7fa1"/><stop offset=".0704" stop-color="#ff5d88"/><stop offset=".0956" stop-color="#ff4173"/><stop offset=".1257" stop-color="#ff2760"/><stop offset=".1987" stop-color="#ff0043"/></linearGradient><linearGradient id="q469"><stop offset="0" stop-color="#ffffff"/><stop offset=".0148" stop-color="#ffcbd9"/><stop offset=".0296" stop-color="#ffa4bd"/><stop offset=".0493" stop-color="#ff7ca0"/><stop offset=".0715" stop-color="#ff5b88"/><stop offset=".0961" stop-color="#ff3f74"/><stop offset=".1257" stop-color="#ff2662"/><stop offset=".1947" stop-color="#ff0046"/></linearGradient><linearGradient id="q470"><stop offset="0" stop-color="#ffffff"/><stop offset=".0145" stop-color="#ffccda"/><stop offset=".029" stop-color="#ffa5bf"/><stop offset=".0483" stop-color="#ff7da2"/><stop offset=".0701" stop-color="#ff5c8b"/><stop offset=".0942" stop-color="#ff4077"/><stop offset=".1232" stop-color="#ff2765"/><stop offset=".1909" stop-color="#ff0049"/></linearGradient><linearGradient id="q471"><stop offset="0" stop-color="#ffffff"/><stop offset=".0142" stop-color="#ffccdb"/><stop offset=".0308" stop-color="#ffa0bc"/><stop offset=".0474" stop-color="#ff7ea4"/><stop offset=".0688" stop-color="#ff5c8d"/><stop offset=".0925" stop-color="#ff4079"/><stop offset=".1209" stop-color="#ff2768"/><stop offset=".1873" stop-color="#ff004c"/></linearGradient><linearGradient id="q472"><stop offset="0" stop-color="#ffffff"/><stop offset=".014" stop-color="#ffcddc"/><stop offset=".0303" stop-color="#ffa1be"/><stop offset=".0466" stop-color="#ff7fa7"/><stop offset=".0675" stop-color="#ff5d8f"/><stop offset=".0908" stop-color="#ff417c"/><stop offset=".1188" stop-color="#ff286a"/><stop offset=".184" stop-color="#ff004f"/></linearGradient><linearGradient id="q473"><stop offset="0" stop-color="#ffffff"/><stop offset=".0137" stop-color="#ffcddd"/><stop offset=".0298" stop-color="#ffa1bf"/><stop offset=".0458" stop-color="#ff80a9"/><stop offset=".0664" stop-color="#ff5e92"/><stop offset=".0893" stop-color="#ff427f"/><stop offset=".1167" stop-color="#ff286d"/><stop offset=".1808" stop-color="#ff0052"/></linearGradient><linearGradient id="q474"><stop offset="0" stop-color="#ffffff"/><stop offset=".0135" stop-color="#ffcede"/><stop offset=".0293" stop-color="#ffa2c1"/><stop offset=".045" stop-color="#ff80ab"/><stop offset=".0653" stop-color="#ff5f94"/><stop offset=".0878" stop-color="#ff4281"/><stop offset=".1148" stop-color="#ff2870"/><stop offset=".1779" stop-color="#ff0055"/></linearGradient><linearGradient id="q475"><stop offset="0" stop-color="#ffffff"/><stop offset=".0133" stop-color="#ffcedf"/><stop offset=".0288" stop-color="#ffa3c3"/><stop offset=".0443" stop-color="#ff81ad"/><stop offset=".0643" stop-color="#ff6096"/><stop offset=".0864" stop-color="#ff4384"/><stop offset=".113" stop-color="#ff2973"/><stop offset=".1751" stop-color="#ff0058"/></linearGradient><linearGradient id="q476"><stop offset="0" stop-color="#ffffff"/><stop offset=".0131" stop-color="#ffcfe0"/><stop offset=".0284" stop-color="#ffa4c4"/><stop offset=".0437" stop-color="#ff82ae"/><stop offset=".0633" stop-color="#ff6099"/><stop offset=".0851" stop-color="#ff4486"/><stop offset=".1113" stop-color="#ff2975"/><stop offset=".1724" stop-color="#ff005b"/></linearGradient><linearGradient id="q477"><stop offset="0" stop-color="#ffffff"/><stop offset=".0129" stop-color="#ffcfe1"/><stop offset=".028" stop-color="#ffa4c6"/><stop offset=".0452" stop-color="#ff7fae"/><stop offset=".0645" stop-color="#ff5e99"/><stop offset=".086" stop-color="#ff4287"/><stop offset=".1097" stop-color="#ff2a78"/><stop offset=".1699" stop-color="#ff005d"/></linearGradient><linearGradient id="q478"><stop offset="0" stop-color="#ffffff"/><stop offset=".0127" stop-color="#ffd0e2"/><stop offset=".0276" stop-color="#ffa5c7"/><stop offset=".0446" stop-color="#ff7fb0"/><stop offset=".0636" stop-color="#ff5f9b"/><stop offset=".0849" stop-color="#ff428a"/><stop offset=".1082" stop-color="#ff2a7b"/><stop offset=".1676" stop-color="#ff0060"/></linearGradient><linearGradient id="q479"><stop offset="0" stop-color="#ffffff"/><stop offset=".0126" stop-color="#ffd0e2"/><stop offset=".0272" stop-color="#ffa6c8"/><stop offset=".044" stop-color="#ff80b1"/><stop offset=".0628" stop-color="#ff5f9d"/><stop offset=".0837" stop-color="#ff438c"/><stop offset=".1068" stop-color="#ff2b7d"/><stop offset=".1654" stop-color="#ff0063"/></linearGradient><linearGradient id="q480"><stop offset="0" stop-color="#ffffff"/><stop offset=".0124" stop-color="#ffd1e3"/><stop offset=".0269" stop-color="#ffa6ca"/><stop offset=".0434" stop-color="#ff81b3"/><stop offset=".062" stop-color="#ff60a0"/><stop offset=".0827" stop-color="#ff448e"/><stop offset=".1075" stop-color="#ff297f"/><stop offset=".1633" stop-color="#ff0066"/></linearGradient><linearGradient id="q481"><stop offset="0" stop-color="#ffffff"/><stop offset=".0123" stop-color="#ffd1e4"/><stop offset=".0266" stop-color="#ffa7cb"/><stop offset=".0429" stop-color="#ff82b5"/><stop offset=".0613" stop-color="#ff61a2"/><stop offset=".0817" stop-color="#ff4491"/><stop offset=".1062" stop-color="#ff2981"/><stop offset=".1614" stop-color="#ff0069"/></linearGradient><linearGradient id="q482"><stop offset="0" stop-color="#ffffff"/><stop offset=".0121" stop-color="#ffd2e5"/><stop offset=".0263" stop-color="#ffa8cd"/><stop offset=".0424" stop-color="#ff82b7"/><stop offset=".0606" stop-color="#ff61a4"/><stop offset=".0808" stop-color="#ff4593"/><stop offset=".105" stop-color="#ff2a84"/><stop offset=".1595" stop-color="#ff006b"/></linearGradient><linearGradient id="q483"><stop offset="0" stop-color="#ffffff"/><stop offset=".012" stop-color="#ffd2e5"/><stop offset=".026" stop-color="#ffa8ce"/><stop offset=".0419" stop-color="#ff83b9"/><stop offset=".0599" stop-color="#ff62a6"/><stop offset=".0799" stop-color="#ff4596"/><stop offset=".1039" stop-color="#ff2a86"/><stop offset=".1578" stop-color="#ff006e"/></linearGradient><linearGradient id="q484"><stop offset="0" stop-color="#ffffff"/><stop offset=".0119" stop-color="#ffd2e6"/><stop offset=".0257" stop-color="#ffa9cf"/><stop offset=".0415" stop-color="#ff84ba"/><stop offset=".0593" stop-color="#ff63a8"/><stop offset=".0791" stop-color="#ff4698"/><stop offset=".1028" stop-color="#ff2b89"/><stop offset=".1562" stop-color="#ff0071"/></linearGradient><linearGradient id="q485"><stop offset="0" stop-color="#ffffff"/><stop offset=".0117" stop-color="#ffd3e7"/><stop offset=".0254" stop-color="#ffaad0"/><stop offset=".0411" stop-color="#ff84bc"/><stop offset=".0587" stop-color="#ff63aa"/><stop offset=".0783" stop-color="#ff469a"/><stop offset=".1018" stop-color="#ff2b8b"/><stop offset=".1546" stop-color="#ff0074"/></linearGradient><linearGradient id="q486"><stop offset="0" stop-color="#ffffff"/><stop offset=".0136" stop-color="#ffcde4"/><stop offset=".0272" stop-color="#ffa5cf"/><stop offset=".0427" stop-color="#ff81bc"/><stop offset=".0601" stop-color="#ff61aa"/><stop offset=".1008" stop-color="#ff2b8e"/><stop offset=".1532" stop-color="#ff0077"/></linearGradient><linearGradient id="q487"><stop offset="0" stop-color="#ffffff"/><stop offset=".0135" stop-color="#ffcde5"/><stop offset=".0269" stop-color="#ffa6d0"/><stop offset=".0423" stop-color="#ff82bd"/><stop offset=".0596" stop-color="#ff62ad"/><stop offset=".1" stop-color="#ff2c90"/><stop offset=".1519" stop-color="#ff0079"/></linearGradient><linearGradient id="q488"><stop offset="0" stop-color="#ffffff"/><stop offset=".0133" stop-color="#ffcee6"/><stop offset=".0267" stop-color="#ffa6d2"/><stop offset=".0419" stop-color="#ff83bf"/><stop offset=".0591" stop-color="#ff62af"/><stop offset=".0991" stop-color="#ff2c93"/><stop offset=".1506" stop-color="#ff007c"/></linearGradient><linearGradient id="q489"><stop offset="0" stop-color="#ffffff"/><stop offset=".0132" stop-color="#ffcee7"/><stop offset=".0265" stop-color="#ffa7d3"/><stop offset=".0416" stop-color="#ff83c1"/><stop offset=".0587" stop-color="#ff63b1"/><stop offset=".0984" stop-color="#ff2d96"/><stop offset=".1495" stop-color="#ff007f"/></linearGradient><linearGradient id="q490"><stop offset="0" stop-color="#ffffff"/><stop offset=".0131" stop-color="#ffcfe7"/><stop offset=".0263" stop-color="#ffa8d4"/><stop offset=".0413" stop-color="#ff84c3"/><stop offset=".0582" stop-color="#ff64b3"/><stop offset=".0977" stop-color="#ff2d98"/><stop offset=".1484" stop-color="#ff0082"/></linearGradient><linearGradient id="q491"><stop offset="0" stop-color="#ffffff"/><stop offset=".0131" stop-color="#ffcfe8"/><stop offset=".0261" stop-color="#ffa8d6"/><stop offset=".041" stop-color="#ff85c4"/><stop offset=".0578" stop-color="#ff64b5"/><stop offset=".097" stop-color="#ff2d9b"/><stop offset=".1474" stop-color="#ff0085"/></linearGradient><linearGradient id="q492"><stop offset="0" stop-color="#ffffff"/><stop offset=".013" stop-color="#ffcfe9"/><stop offset=".026" stop-color="#ffa9d7"/><stop offset=".0408" stop-color="#ff85c6"/><stop offset=".0575" stop-color="#ff65b7"/><stop offset=".0964" stop-color="#ff2e9d"/><stop offset=".1465" stop-color="#ff0088"/></linearGradient><linearGradient id="q493"><stop offset="0" stop-color="#ffffff"/><stop offset=".0129" stop-color="#ffd0ea"/><stop offset=".0258" stop-color="#ffaad8"/><stop offset=".0405" stop-color="#ff86c8"/><stop offset=".0571" stop-color="#ff66b9"/><stop offset=".0958" stop-color="#ff2ea0"/><stop offset=".1456" stop-color="#ff008b"/></linearGradient><linearGradient id="q494"><stop offset="0" stop-color="#ffffff"/><stop offset=".0128" stop-color="#ffd0ea"/><stop offset=".0257" stop-color="#ffaad9"/><stop offset=".0403" stop-color="#ff87ca"/><stop offset=".0568" stop-color="#ff66bb"/><stop offset=".0752" stop-color="#ff49ae"/><stop offset=".0972" stop-color="#ff2da2"/><stop offset=".1448" stop-color="#ff008e"/></linearGradient><linearGradient id="q495"><stop offset="0" stop-color="#ffffff"/><stop offset=".0128" stop-color="#ffd1eb"/><stop offset=".0255" stop-color="#ffabdb"/><stop offset=".0401" stop-color="#ff87cb"/><stop offset=".0566" stop-color="#ff67bd"/><stop offset=".0748" stop-color="#ff49b1"/><stop offset=".0967" stop-color="#ff2da4"/><stop offset=".1441" stop-color="#ff0091"/></linearGradient><linearGradient id="q496"><stop offset="0" stop-color="#ffffff"/><stop offset=".0127" stop-color="#ffd1ec"/><stop offset=".0254" stop-color="#ffabdc"/><stop offset=".0418" stop-color="#ff84cb"/><stop offset=".0581" stop-color="#ff64be"/><stop offset=".0963" stop-color="#ff2da7"/><stop offset=".1435" stop-color="#ff0094"/></linearGradient><linearGradient id="q497"><stop offset="0" stop-color="#ffffff"/><stop offset=".0127" stop-color="#ffd1ec"/><stop offset=".0253" stop-color="#ffacdd"/><stop offset=".0416" stop-color="#ff85cd"/><stop offset=".0579" stop-color="#ff65c0"/><stop offset=".0959" stop-color="#ff2eaa"/><stop offset=".1429" stop-color="#ff0097"/></linearGradient><linearGradient id="q498"><stop offset="0" stop-color="#ffffff"/><stop offset=".0126" stop-color="#ffd2ed"/><stop offset=".0252" stop-color="#ffadde"/><stop offset=".0415" stop-color="#ff85cf"/><stop offset=".0577" stop-color="#ff66c2"/><stop offset=".0956" stop-color="#ff2eac"/><stop offset=".1424" stop-color="#ff009a"/></linearGradient><linearGradient id="q499"><stop offset="0" stop-color="#ffffff"/><stop offset=".0126" stop-color="#ffd2ee"/><stop offset=".0252" stop-color="#ffade0"/><stop offset=".0413" stop-color="#ff86d1"/><stop offset=".0575" stop-color="#ff66c4"/><stop offset=".0953" stop-color="#ff2faf"/><stop offset=".142" stop-color="#ff009d"/></linearGradient><linearGradient id="q500"><stop offset="0" stop-color="#ffffff"/><stop offset=".0125" stop-color="#ffd3ef"/><stop offset=".0251" stop-color="#ffaee1"/><stop offset=".0412" stop-color="#ff87d3"/><stop offset=".0574" stop-color="#ff67c7"/><stop offset=".095" stop-color="#ff2fb2"/><stop offset=".1416" stop-color="#ff00a1"/></linearGradient><linearGradient id="q501"><stop offset="0" stop-color="#ffffff"/><stop offset=".0125" stop-color="#ffd3ef"/><stop offset=".025" stop-color="#ffaee2"/><stop offset=".0411" stop-color="#ff88d4"/><stop offset=".0572" stop-color="#ff68c9"/><stop offset=".0948" stop-color="#ff2fb5"/><stop offset=".1413" stop-color="#ff00a4"/></linearGradient><linearGradient id="q502"><stop offset="0" stop-color="#ffffff"/><stop offset=".0125" stop-color="#ffd3f0"/><stop offset=".0268" stop-color="#ffaae2"/><stop offset=".0571" stop-color="#ff68cb"/><stop offset=".0946" stop-color="#ff30b8"/><stop offset=".1411" stop-color="#ff00a7"/></linearGradient><linearGradient id="q503"><stop offset="0" stop-color="#ffffff"/><stop offset=".0125" stop-color="#ffd4f1"/><stop offset=".0268" stop-color="#ffabe3"/><stop offset=".0571" stop-color="#ff69cd"/><stop offset=".0945" stop-color="#ff30bb"/><stop offset=".1409" stop-color="#ff00ab"/></linearGradient><linearGradient id="q504"><stop offset="0" stop-color="#ffffff"/><stop offset=".0125" stop-color="#ffd4f1"/><stop offset=".0267" stop-color="#fface5"/><stop offset=".057" stop-color="#ff6ad0"/><stop offset=".0944" stop-color="#ff31be"/><stop offset=".1408" stop-color="#ff00ae"/></linearGradient><linearGradient id="q505"><stop offset="0" stop-color="#ffffff"/><stop offset=".0125" stop-color="#ffd5f2"/><stop offset=".0267" stop-color="#fface6"/><stop offset=".0427" stop-color="#ff87da"/><stop offset=".0588" stop-color="#ff67d1"/><stop offset=".0962" stop-color="#ff2fc0"/><stop offset=".1407" stop-color="#ff00b2"/></linearGradient><linearGradient id="q506"><stop offset="0" stop-color="#ffffff"/><stop offset=".0125" stop-color="#ffd5f3"/><stop offset=".0267" stop-color="#ffade7"/><stop offset=".0427" stop-color="#ff87dc"/><stop offset=".0588" stop-color="#ff68d3"/><stop offset=".0962" stop-color="#ff2fc3"/><stop offset=".1407" stop-color="#ff00b5"/></linearGradient><linearGradient id="q507"><stop offset="0" stop-color="#ffffff"/><stop offset=".0125" stop-color="#ffd5f4"/><stop offset=".0267" stop-color="#ffaee9"/><stop offset=".0588" stop-color="#ff69d6"/><stop offset=".0962" stop-color="#ff30c6"/><stop offset=".1408" stop-color="#ff00b9"/></linearGradient><linearGradient id="q508"><stop offset="0" stop-color="#ffffff"/><stop offset=".0125" stop-color="#ffd6f4"/><stop offset=".0268" stop-color="#ffaeea"/><stop offset=".0589" stop-color="#ff69d8"/><stop offset=".0963" stop-color="#ff30c9"/><stop offset=".1409" stop-color="#ff00bd"/></linearGradient><linearGradient id="q509"><stop offset="0" stop-color="#ffffff"/><stop offset=".0125" stop-color="#ffd6f5"/><stop offset=".0268" stop-color="#ffafeb"/><stop offset=".0589" stop-color="#ff6adb"/><stop offset=".0964" stop-color="#ff31cd"/><stop offset=".1411" stop-color="#ff00c1"/></linearGradient><linearGradient id="q510"><stop offset="0" stop-color="#ffffff"/><stop offset=".0125" stop-color="#ffd7f6"/><stop offset=".0268" stop-color="#ffafed"/><stop offset=".059" stop-color="#ff6bdd"/><stop offset=".0966" stop-color="#ff31d0"/><stop offset=".1414" stop-color="#ff00c5"/></linearGradient><linearGradient id="q511"><stop offset="0" stop-color="#ffffff"/><stop offset=".0126" stop-color="#ffd7f7"/><stop offset=".0269" stop-color="#ffb0ee"/><stop offset=".0592" stop-color="#ff6ce0"/><stop offset=".0968" stop-color="#ff32d4"/><stop offset=".1417" stop-color="#ff00c9"/></linearGradient><linearGradient id="q512"><stop offset="0" stop-color="#ffffff"/><stop offset=".027" stop-color="#ffb1f0"/><stop offset=".0593" stop-color="#ff6ce2"/><stop offset=".0971" stop-color="#ff32d7"/><stop offset=".142" stop-color="#ff00cd"/></linearGradient><linearGradient id="q513"><stop offset="0" stop-color="#ffffff"/><stop offset=".0271" stop-color="#ffb2f1"/><stop offset=".0595" stop-color="#ff6de5"/><stop offset=".0974" stop-color="#ff33db"/><stop offset=".1425" stop-color="#ff00d2"/></linearGradient><linearGradient id="q514"><stop offset="0" stop-color="#ffffff"/><stop offset=".0145" stop-color="#ffd3f8"/><stop offset=".029" stop-color="#ffaef2"/><stop offset=".0615" stop-color="#ff6be7"/><stop offset=".0996" stop-color="#ff31de"/><stop offset=".143" stop-color="#ff00d6"/></linearGradient><linearGradient id="q515"><stop offset="0" stop-color="#ffffff"/><stop offset=".0291" stop-color="#ffaff4"/><stop offset=".0618" stop-color="#ff6cea"/><stop offset=".1" stop-color="#ff31e2"/><stop offset=".1436" stop-color="#ff00db"/></linearGradient><linearGradient id="q516"><stop offset="0" stop-color="#ffffff"/><stop offset=".0292" stop-color="#ffaff5"/><stop offset=".0621" stop-color="#ff6ced"/><stop offset=".1004" stop-color="#ff32e6"/><stop offset=".1442" stop-color="#ff00e0"/></linearGradient><linearGradient id="q517"><stop offset="0" stop-color="#ffffff"/><stop offset=".0294" stop-color="#ffb0f7"/><stop offset=".0624" stop-color="#ff6df0"/><stop offset=".1009" stop-color="#ff33ea"/><stop offset=".1449" stop-color="#ff00e5"/></linearGradient><linearGradient id="q518"><stop offset="0" stop-color="#ffffff"/><stop offset=".0295" stop-color="#ffb1f9"/><stop offset=".0627" stop-color="#ff6ef3"/><stop offset=".1015" stop-color="#ff33ee"/><stop offset=".1457" stop-color="#ff00ea"/></linearGradient><linearGradient id="q519"><stop offset="0" stop-color="#ffffff"/><stop offset=".0297" stop-color="#ffb2fa"/><stop offset=".0631" stop-color="#ff6ff6"/><stop offset=".1021" stop-color="#ff34f3"/><stop offset=".1466" stop-color="#ff00f0"/></linearGradient><linearGradient id="q520"><stop offset="0" stop-color="#ffffff"/><stop offset=".0299" stop-color="#ffb3fc"/><stop offset=".0635" stop-color="#ff70fa"/><stop offset=".1027" stop-color="#ff34f7"/><stop offset=".1475" stop-color="#ff00f5"/></linearGradient><linearGradient id="q521"><stop offset="0" stop-color="#ffffff"/><stop offset=".0301" stop-color="#ffb3fe"/><stop offset=".0658" stop-color="#ff6efd"/><stop offset=".1053" stop-color="#ff32fc"/><stop offset=".1485" stop-color="#ff00fb"/></linearGradient><linearGradient id="q522"><stop offset="0" stop-color="#ffffff"/><stop offset=".0303" stop-color="#feb4ff"/><stop offset=".0663" stop-color="#fd6eff"/><stop offset=".1061" stop-color="#fd33ff"/><stop offset=".1496" stop-color="#fc00ff"/></linearGradient><linearGradient id="q523"><stop offset="0" stop-color="#ffffff"/><stop offset=".0305" stop-color="#fcb3ff"/><stop offset=".0668" stop-color="#fa6eff"/><stop offset=".1069" stop-color="#f832ff"/><stop offset=".1508" stop-color="#f600ff"/></linearGradient><linearGradient id="q524"><stop offset="0" stop-color="#ffffff"/><stop offset=".0308" stop-color="#fab3ff"/><stop offset=".0654" stop-color="#f670ff"/><stop offset=".1059" stop-color="#f334ff"/><stop offset=".1521" stop-color="#f000ff"/></linearGradient><linearGradient id="q525"><stop offset="0" stop-color="#ffffff"/><stop offset=".0311" stop-color="#f8b2ff"/><stop offset=".066" stop-color="#f370ff"/><stop offset=".1068" stop-color="#ee34ff"/><stop offset=".1534" stop-color="#e900ff"/></linearGradient><linearGradient id="q526"><stop offset="0" stop-color="#ffffff"/><stop offset=".0314" stop-color="#f7b2ff"/><stop offset=".0666" stop-color="#ef6fff"/><stop offset=".1078" stop-color="#e934ff"/><stop offset=".1549" stop-color="#e300ff"/></linearGradient><linearGradient id="q527"><stop offset="0" stop-color="#ffffff"/><stop offset=".0317" stop-color="#f5b1ff"/><stop offset=".0673" stop-color="#ec6fff"/><stop offset=".1089" stop-color="#e433ff"/><stop offset=".1564" stop-color="#dd00ff"/></linearGradient><linearGradient id="q528"><stop offset="0" stop-color="#ffffff"/><stop offset=".032" stop-color="#f3b1ff"/><stop offset=".068" stop-color="#e86eff"/><stop offset=".11" stop-color="#df33ff"/><stop offset=".158" stop-color="#d700ff"/></linearGradient><linearGradient id="q529"><stop offset="0" stop-color="#ffffff"/><stop offset=".0324" stop-color="#f1b0ff"/><stop offset=".0688" stop-color="#e46dff"/><stop offset=".1112" stop-color="#da33ff"/><stop offset=".1598" stop-color="#d000ff"/></linearGradient><linearGradient id="q530"><stop offset="0" stop-color="#ffffff"/><stop offset=".0327" stop-color="#eeb0ff"/><stop offset=".0696" stop-color="#e16dff"/><stop offset=".1125" stop-color="#d432ff"/><stop offset=".1616" stop-color="#ca00ff"/></linearGradient><linearGradient id="q531"><stop offset="0" stop-color="#ffffff"/><stop offset=".0331" stop-color="#ecafff"/><stop offset=".0704" stop-color="#dd6cff"/><stop offset=".1139" stop-color="#cf32ff"/><stop offset=".1636" stop-color="#c400ff"/></linearGradient><linearGradient id="q532"><stop offset="0" stop-color="#ffffff"/><stop offset=".0336" stop-color="#eaafff"/><stop offset=".0713" stop-color="#d96cff"/><stop offset=".1154" stop-color="#ca31ff"/><stop offset=".1657" stop-color="#bd00ff"/></linearGradient><linearGradient id="q533"><stop offset="0" stop-color="#ffffff"/><stop offset=".017" stop-color="#f3d3ff"/><stop offset=".034" stop-color="#e8aeff"/><stop offset=".0723" stop-color="#d56bff"/><stop offset=".1169" stop-color="#c531ff"/><stop offset=".1679" stop-color="#b700ff"/></linearGradient><linearGradient id="q534"><stop offset="0" stop-color="#ffffff"/><stop offset=".0172" stop-color="#f1d3ff"/><stop offset=".0345" stop-color="#e6aeff"/><stop offset=".0733" stop-color="#d16aff"/><stop offset=".1186" stop-color="#bf31ff"/><stop offset=".1703" stop-color="#b000ff"/></linearGradient><linearGradient id="q535"><stop offset="0" stop-color="#ffffff"/><stop offset=".0328" stop-color="#e5b1ff"/><stop offset=".0722" stop-color="#ce6dff"/><stop offset=".1181" stop-color="#bb33ff"/><stop offset=".1728" stop-color="#aa00ff"/></linearGradient><linearGradient id="q536"><stop offset="0" stop-color="#ffffff"/><stop offset=".0333" stop-color="#e3b1ff"/><stop offset=".0733" stop-color="#ca6cff"/><stop offset=".1199" stop-color="#b532ff"/><stop offset=".1755" stop-color="#a300ff"/></linearGradient><linearGradient id="q537"><stop offset="0" stop-color="#ffffff"/><stop offset=".0158" stop-color="#f0d7ff"/><stop offset=".0339" stop-color="#e1b0ff"/><stop offset=".0745" stop-color="#c66cff"/><stop offset=".1219" stop-color="#b032ff"/><stop offset=".1783" stop-color="#9c00ff"/></linearGradient><linearGradient id="q538"><stop offset="0" stop-color="#ffffff"/><stop offset=".0161" stop-color="#eed7ff"/><stop offset=".0344" stop-color="#deb0ff"/><stop offset=".0757" stop-color="#c26bff"/><stop offset=".1239" stop-color="#aa31ff"/><stop offset=".1813" stop-color="#9600ff"/></linearGradient><linearGradient id="q539"><stop offset="0" stop-color="#ffffff"/><stop offset=".0163" stop-color="#edd6ff"/><stop offset=".035" stop-color="#dcafff"/><stop offset=".077" stop-color="#be6aff"/><stop offset=".1261" stop-color="#a431ff"/><stop offset=".1845" stop-color="#8f00ff"/></linearGradient><linearGradient id="q540"><stop offset="0" stop-color="#ffffff"/><stop offset=".0166" stop-color="#ecd6ff"/><stop offset=".0357" stop-color="#d9afff"/><stop offset=".0785" stop-color="#b96aff"/><stop offset=".1284" stop-color="#9f31ff"/><stop offset=".1878" stop-color="#8800ff"/></linearGradient><linearGradient id="q541"><stop offset="0" stop-color="#ffffff"/><stop offset=".017" stop-color="#ead6ff"/><stop offset=".0363" stop-color="#d7aeff"/><stop offset=".08" stop-color="#b569ff"/><stop offset=".1308" stop-color="#9930ff"/><stop offset=".1914" stop-color="#8100ff"/></linearGradient><linearGradient id="q542"><stop offset="0" stop-color="#ffffff"/><stop offset=".0173" stop-color="#e9d5ff"/><stop offset=".0371" stop-color="#d4adff"/><stop offset=".0816" stop-color="#b068ff"/><stop offset=".1334" stop-color="#9330ff"/><stop offset=".1952" stop-color="#7a00ff"/></linearGradient><linearGradient id="q543"><stop offset="0" stop-color="#ffffff"/><stop offset=".0177" stop-color="#e8d5ff"/><stop offset=".0378" stop-color="#d2adff"/><stop offset=".0605" stop-color="#bd87ff"/><stop offset=".0832" stop-color="#ab68ff"/><stop offset=".1362" stop-color="#8c2fff"/><stop offset=".1993" stop-color="#7200ff"/></linearGradient><linearGradient id="q544"><stop offset="0" stop-color="#ffffff"/><stop offset=".018" stop-color="#e6d4ff"/><stop offset=".0387" stop-color="#cfacff"/><stop offset=".0825" stop-color="#a86aff"/><stop offset=".1366" stop-color="#8731ff"/><stop offset=".2036" stop-color="#6b00ff"/></linearGradient><linearGradient id="q545"><stop offset="0" stop-color="#ffffff"/><stop offset=".0184" stop-color="#e5d4ff"/><stop offset=".0395" stop-color="#ccabff"/><stop offset=".0843" stop-color="#a469ff"/><stop offset=".1397" stop-color="#8130ff"/><stop offset=".2082" stop-color="#6300ff"/></linearGradient><linearGradient id="q546"><stop offset="0" stop-color="#ffffff"/><stop offset=".0189" stop-color="#e3d3ff"/><stop offset=".0405" stop-color="#c9aaff"/><stop offset=".0863" stop-color="#9f68ff"/><stop offset=".143" stop-color="#7a30ff"/><stop offset=".2131" stop-color="#5c00ff"/></linearGradient><linearGradient id="q547"><stop offset="0" stop-color="#ffffff"/><stop offset=".0194" stop-color="#e1d3ff"/><stop offset=".0387" stop-color="#c9aeff"/><stop offset=".0636" stop-color="#af87ff"/><stop offset=".0885" stop-color="#9967ff"/><stop offset=".1465" stop-color="#742fff"/><stop offset=".2184" stop-color="#5400ff"/></linearGradient><linearGradient id="q548"><stop offset="0" stop-color="#ffffff"/><stop offset=".0198" stop-color="#e0d2ff"/><stop offset=".0397" stop-color="#c6aeff"/><stop offset=".0652" stop-color="#aa87ff"/><stop offset=".0907" stop-color="#9467ff"/><stop offset=".1503" stop-color="#6d2fff"/><stop offset=".224" stop-color="#4c00ff"/></linearGradient><linearGradient id="q549"><stop offset="0" stop-color="#ffffff"/><stop offset=".0204" stop-color="#ded2ff"/><stop offset=".0408" stop-color="#c3adff"/><stop offset=".067" stop-color="#a686ff"/><stop offset=".0932" stop-color="#8e66ff"/><stop offset=".1543" stop-color="#662eff"/><stop offset=".23" stop-color="#4400ff"/></linearGradient><linearGradient id="q550"><stop offset="0" stop-color="#ffffff"/><stop offset=".021" stop-color="#dcd1ff"/><stop offset=".0419" stop-color="#bfacff"/><stop offset=".0688" stop-color="#a185ff"/><stop offset=".0958" stop-color="#8965ff"/><stop offset=".1586" stop-color="#5e2eff"/><stop offset=".2365" stop-color="#3b00ff"/></linearGradient><linearGradient id="q551"><stop offset="0" stop-color="#ffffff"/><stop offset=".0216" stop-color="#dad1ff"/><stop offset=".0431" stop-color="#bcabff"/><stop offset=".0678" stop-color="#9f87ff"/><stop offset=".0955" stop-color="#8567ff"/><stop offset=".1263" stop-color="#6e4aff"/><stop offset=".1633" stop-color="#572dff"/><stop offset=".2434" stop-color="#3300ff"/></linearGradient><linearGradient id="q552"><stop offset="0" stop-color="#ffffff"/><stop offset=".0222" stop-color="#d8d0ff"/><stop offset=".0445" stop-color="#b8aaff"/><stop offset=".0699" stop-color="#9a86ff"/><stop offset=".0984" stop-color="#7f66ff"/><stop offset=".1302" stop-color="#6749ff"/><stop offset=".1683" stop-color="#4f2cff"/><stop offset=".2509" stop-color="#2a00ff"/></linearGradient><linearGradient id="q553"><stop offset="0" stop-color="#ffffff"/><stop offset=".0229" stop-color="#d5cfff"/><stop offset=".0459" stop-color="#b4a9ff"/><stop offset=".0721" stop-color="#9585ff"/><stop offset=".1016" stop-color="#7965ff"/><stop offset=".1704" stop-color="#492eff"/><stop offset=".2589" stop-color="#2100ff"/></linearGradient><linearGradient id="q554"><stop offset="0" stop-color="#ffffff"/><stop offset=".0237" stop-color="#d3cfff"/><stop offset=".0474" stop-color="#b0a8ff"/><stop offset=".0745" stop-color="#8f84ff"/><stop offset=".105" stop-color="#7264ff"/><stop offset=".1762" stop-color="#412dff"/><stop offset=".2677" stop-color="#1800ff"/></linearGradient><linearGradient id="q555"><stop offset="0" stop-color="#ffffff"/><stop offset=".0246" stop-color="#d1ceff"/><stop offset=".0491" stop-color="#aca7ff"/><stop offset=".0772" stop-color="#8a83ff"/><stop offset=".1087" stop-color="#6b63ff"/><stop offset=".1824" stop-color="#382cff"/><stop offset=".2771" stop-color="#0e00ff"/></linearGradient><linearGradient id="q556"><stop offset="0" stop-color="#ffffff"/><stop offset=".0255" stop-color="#cecdff"/><stop offset=".0509" stop-color="#a7a6ff"/><stop offset=".08" stop-color="#8482ff"/><stop offset=".1128" stop-color="#6461ff"/><stop offset=".1892" stop-color="#2f2cff"/><stop offset=".2874" stop-color="#0400ff"/></linearGradient><linearGradient id="q557"><stop offset="0" stop-color="#ffffff"/><stop offset=".0249" stop-color="#cecfff"/><stop offset=".0499" stop-color="#a6a8ff"/><stop offset=".0784" stop-color="#8285ff"/><stop offset=".1104" stop-color="#6266ff"/><stop offset=".1852" stop-color="#2c31ff"/><stop offset=".2814" stop-color="#0006ff"/></linearGradient><linearGradient id="q558"><stop offset="0" stop-color="#ffffff"/><stop offset=".0235" stop-color="#cfd2ff"/><stop offset=".047" stop-color="#a8aeff"/><stop offset=".0739" stop-color="#858cff"/><stop offset=".1041" stop-color="#646eff"/><stop offset=".1747" stop-color="#2e3aff"/><stop offset=".2654" stop-color="#0010ff"/></linearGradient><linearGradient id="q559"><stop offset="0" stop-color="#ffffff"/><stop offset=".0223" stop-color="#d0d5ff"/><stop offset=".0445" stop-color="#aab3ff"/><stop offset=".0699" stop-color="#8793ff"/><stop offset=".0986" stop-color="#6675ff"/><stop offset=".1304" stop-color="#495bff"/><stop offset=".1685" stop-color="#2d41ff"/><stop offset=".2512" stop-color="#0019ff"/></linearGradient><linearGradient id="q560"><stop offset="0" stop-color="#ffffff"/><stop offset=".0211" stop-color="#d1d8ff"/><stop offset=".0423" stop-color="#acb7ff"/><stop offset=".0694" stop-color="#8595ff"/><stop offset=".0966" stop-color="#657aff"/><stop offset=".16" stop-color="#2e4aff"/><stop offset=".2385" stop-color="#0022ff"/></linearGradient><linearGradient id="q561"><stop offset="0" stop-color="#ffffff"/><stop offset=".0201" stop-color="#d3daff"/><stop offset=".0403" stop-color="#aebbff"/><stop offset=".0661" stop-color="#879bff"/><stop offset=".092" stop-color="#6780ff"/><stop offset=".1524" stop-color="#2f52ff"/><stop offset=".2272" stop-color="#002aff"/></linearGradient><linearGradient id="q562"><stop offset="0" stop-color="#ffffff"/><stop offset=".0192" stop-color="#d3dcff"/><stop offset=".0412" stop-color="#aabbff"/><stop offset=".0879" stop-color="#6986ff"/><stop offset=".1456" stop-color="#3059ff"/><stop offset=".217" stop-color="#0033ff"/></linearGradient><linearGradient id="q563"><stop offset="0" stop-color="#ffffff"/><stop offset=".0184" stop-color="#d4deff"/><stop offset=".0394" stop-color="#acbfff"/><stop offset=".0841" stop-color="#6a8cff"/><stop offset=".1394" stop-color="#3160ff"/><stop offset=".2077" stop-color="#003bff"/></linearGradient><linearGradient id="q564"><stop offset="0" stop-color="#ffffff"/><stop offset=".0177" stop-color="#d5e0ff"/><stop offset=".0378" stop-color="#adc3ff"/><stop offset=".0833" stop-color="#6890ff"/><stop offset=".1362" stop-color="#3066ff"/><stop offset=".1993" stop-color="#0042ff"/></linearGradient><linearGradient id="q565"><stop offset="0" stop-color="#ffffff"/><stop offset=".017" stop-color="#d6e2ff"/><stop offset=".0364" stop-color="#afc6ff"/><stop offset=".08" stop-color="#6a95ff"/><stop offset=".131" stop-color="#316cff"/><stop offset=".1916" stop-color="#004aff"/></linearGradient><linearGradient id="q566"><stop offset="0" stop-color="#ffffff"/><stop offset=".0164" stop-color="#d7e4ff"/><stop offset=".035" stop-color="#b0c9ff"/><stop offset=".0771" stop-color="#6b9aff"/><stop offset=".1262" stop-color="#3173ff"/><stop offset=".1846" stop-color="#0051ff"/></linearGradient><linearGradient id="q567"><stop offset="0" stop-color="#ffffff"/><stop offset=".0338" stop-color="#b1ccff"/><stop offset=".0744" stop-color="#6c9fff"/><stop offset=".1218" stop-color="#3279ff"/><stop offset=".1781" stop-color="#0058ff"/></linearGradient><linearGradient id="q568"><stop offset="0" stop-color="#ffffff"/><stop offset=".0174" stop-color="#d3e3ff"/><stop offset=".0349" stop-color="#adccff"/><stop offset=".0741" stop-color="#6aa1ff"/><stop offset=".1199" stop-color="#317dff"/><stop offset=".1722" stop-color="#005eff"/></linearGradient><linearGradient id="q569"><stop offset="0" stop-color="#ffffff"/><stop offset=".0169" stop-color="#d4e5ff"/><stop offset=".0338" stop-color="#aeceff"/><stop offset=".0717" stop-color="#6ba6ff"/><stop offset=".1161" stop-color="#3183ff"/><stop offset=".1667" stop-color="#0065ff"/></linearGradient><linearGradient id="q570"><stop offset="0" stop-color="#ffffff"/><stop offset=".0327" stop-color="#afd1ff"/><stop offset=".0696" stop-color="#6daaff"/><stop offset=".1125" stop-color="#3288ff"/><stop offset=".1616" stop-color="#006bff"/></linearGradient><linearGradient id="q571"><stop offset="0" stop-color="#ffffff"/><stop offset=".0318" stop-color="#b0d3ff"/><stop offset=".0675" stop-color="#6eaeff"/><stop offset=".1092" stop-color="#338eff"/><stop offset=".1569" stop-color="#0072ff"/></linearGradient><linearGradient id="q572"><stop offset="0" stop-color="#ffffff"/><stop offset=".0309" stop-color="#b1d6ff"/><stop offset=".0656" stop-color="#6fb2ff"/><stop offset=".1062" stop-color="#3393ff"/><stop offset=".1525" stop-color="#0078ff"/></linearGradient><linearGradient id="q573"><stop offset="0" stop-color="#ffffff"/><stop offset=".0301" stop-color="#b2d8ff"/><stop offset=".0639" stop-color="#70b6ff"/><stop offset=".1033" stop-color="#3498ff"/><stop offset=".1484" stop-color="#007eff"/></linearGradient><linearGradient id="q574"><stop offset="0" stop-color="#ffffff"/><stop offset=".0293" stop-color="#b3daff"/><stop offset=".0622" stop-color="#71baff"/><stop offset=".1007" stop-color="#359dff"/><stop offset=".1446" stop-color="#0083ff"/></linearGradient><linearGradient id="q575"><stop offset="0" stop-color="#ffffff"/><stop offset=".0286" stop-color="#b4dcff"/><stop offset=".0625" stop-color="#6ebcff"/><stop offset=".1" stop-color="#33a1ff"/><stop offset=".1411" stop-color="#0089ff"/></linearGradient><linearGradient id="q576"><stop offset="0" stop-color="#ffffff"/><stop offset=".0279" stop-color="#b4deff"/><stop offset=".061" stop-color="#6fc0ff"/><stop offset=".0976" stop-color="#33a5ff"/><stop offset=".1377" stop-color="#008fff"/></linearGradient><linearGradient id="q577"><stop offset="0" stop-color="#ffffff"/><stop offset=".0273" stop-color="#b5e0ff"/><stop offset=".0596" stop-color="#70c3ff"/><stop offset=".0954" stop-color="#34aaff"/><stop offset=".1346" stop-color="#0094ff"/></linearGradient><linearGradient id="q578"><stop offset="0" stop-color="#ffffff"/><stop offset=".0267" stop-color="#b6e2ff"/><stop offset=".0583" stop-color="#71c6ff"/><stop offset=".0934" stop-color="#34aeff"/><stop offset=".1317" stop-color="#0099ff"/></linearGradient><linearGradient id="q579"><stop offset="0" stop-color="#ffffff"/><stop offset=".0278" stop-color="#b2e2ff"/><stop offset=".0571" stop-color="#72caff"/><stop offset=".0914" stop-color="#35b3ff"/><stop offset=".129" stop-color="#009fff"/></linearGradient><linearGradient id="q580"><stop offset="0" stop-color="#ffffff"/><stop offset=".0272" stop-color="#b3e4ff"/><stop offset=".056" stop-color="#72cdff"/><stop offset=".0896" stop-color="#35b7ff"/><stop offset=".1264" stop-color="#00a4ff"/></linearGradient><linearGradient id="q581"><stop offset="0" stop-color="#ffffff"/><stop offset=".0267" stop-color="#b4e6ff"/><stop offset=".0549" stop-color="#73d0ff"/><stop offset=".0879" stop-color="#36bbff"/><stop offset=".124" stop-color="#00a9ff"/></linearGradient><linearGradient id="q582"><stop offset="0" stop-color="#ffffff"/><stop offset=".0262" stop-color="#b4e7ff"/><stop offset=".0555" stop-color="#71d2ff"/><stop offset=".0878" stop-color="#34beff"/><stop offset=".1217" stop-color="#00aeff"/></linearGradient><linearGradient id="q583"><stop offset="0" stop-color="#ffffff"/><stop offset=".0257" stop-color="#b5e9ff"/><stop offset=".0545" stop-color="#71d5ff"/><stop offset=".0863" stop-color="#34c3ff"/><stop offset=".1195" stop-color="#00b3ff"/></linearGradient><linearGradient id="q584"><stop offset="0" stop-color="#ffffff"/><stop offset=".0253" stop-color="#b6ebff"/><stop offset=".0536" stop-color="#72d8ff"/><stop offset=".0848" stop-color="#35c7ff"/><stop offset=".1175" stop-color="#00b8ff"/></linearGradient><linearGradient id="q585"><stop offset="0" stop-color="#ffffff"/><stop offset=".0249" stop-color="#b6ecff"/><stop offset=".0527" stop-color="#73dbff"/><stop offset=".0834" stop-color="#35cbff"/><stop offset=".1156" stop-color="#00bdff"/></linearGradient><linearGradient id="q586"><stop offset="0" stop-color="#ffffff"/><stop offset=".0245" stop-color="#b7eeff"/><stop offset=".0519" stop-color="#73ddff"/><stop offset=".0821" stop-color="#36ceff"/><stop offset=".1138" stop-color="#00c1ff"/></linearGradient><linearGradient id="q587"><stop offset="0" stop-color="#ffffff"/><stop offset=".0241" stop-color="#b7efff"/><stop offset=".0511" stop-color="#74e0ff"/><stop offset=".0809" stop-color="#36d2ff"/><stop offset=".1121" stop-color="#00c6ff"/></linearGradient><linearGradient id="q588"><stop offset="0" stop-color="#ffffff"/><stop offset=".0238" stop-color="#b8f0ff"/><stop offset=".0504" stop-color="#75e3ff"/><stop offset=".0798" stop-color="#37d6ff"/><stop offset=".1105" stop-color="#00cbff"/></linearGradient><linearGradient id="q589"><stop offset="0" stop-color="#ffffff"/><stop offset=".0235" stop-color="#b8f2ff"/><stop offset=".0497" stop-color="#75e5ff"/><stop offset=".0787" stop-color="#37daff"/><stop offset=".109" stop-color="#00d0ff"/></linearGradient><linearGradient id="q590"><stop offset="0" stop-color="#ffffff"/><stop offset=".0232" stop-color="#b9f3ff"/><stop offset=".049" stop-color="#76e8ff"/><stop offset=".0777" stop-color="#37deff"/><stop offset=".1076" stop-color="#00d4ff"/></linearGradient><linearGradient id="q591"><stop offset="0" stop-color="#ffffff"/><stop offset=".0229" stop-color="#b9f5ff"/><stop offset=".0484" stop-color="#77ebff"/><stop offset=".0767" stop-color="#38e1ff"/><stop offset=".1063" stop-color="#00d9ff"/></linearGradient><linearGradient id="q592"><stop offset="0" stop-color="#ffffff"/><stop offset=".0239" stop-color="#b6f5ff"/><stop offset=".0492" stop-color="#74edff"/><stop offset=".0758" stop-color="#38e5ff"/><stop offset=".105" stop-color="#00ddff"/></linearGradient><linearGradient id="q593"><stop offset="0" stop-color="#ffffff"/><stop offset=".0237" stop-color="#b6f7ff"/><stop offset=".0486" stop-color="#75efff"/><stop offset=".0749" stop-color="#39e8ff"/><stop offset=".1039" stop-color="#00e2ff"/></linearGradient><linearGradient id="q594"><stop offset="0" stop-color="#ffffff"/><stop offset=".0234" stop-color="#b7f8ff"/><stop offset=".0481" stop-color="#75f2ff"/><stop offset=".0754" stop-color="#36ecff"/><stop offset=".1028" stop-color="#00e7ff"/></linearGradient><linearGradient id="q595"><stop offset="0" stop-color="#ffffff"/><stop offset=".0232" stop-color="#b7f9ff"/><stop offset=".0476" stop-color="#76f4ff"/><stop offset=".0747" stop-color="#37efff"/><stop offset=".1017" stop-color="#00ebff"/></linearGradient><linearGradient id="q596"><stop offset="0" stop-color="#ffffff"/><stop offset=".023" stop-color="#b8fbff"/><stop offset=".0472" stop-color="#76f7ff"/><stop offset=".074" stop-color="#37f3ff"/><stop offset=".1007" stop-color="#00f0ff"/></linearGradient><linearGradient id="q597"><stop offset="0" stop-color="#ffffff"/><stop offset=".0227" stop-color="#b8fcff"/><stop offset=".0468" stop-color="#77f9ff"/><stop offset=".0733" stop-color="#37f7ff"/><stop offset=".0998" stop-color="#00f4ff"/></linearGradient><linearGradient id="q598"><stop offset="0" stop-color="#ffffff"/><stop offset=".0225" stop-color="#b9fdff"/><stop offset=".0464" stop-color="#77fcff"/><stop offset=".0727" stop-color="#38faff"/><stop offset=".099" stop-color="#00f9ff"/></linearGradient><linearGradient id="q599"><stop offset="0" stop-color="#ffffff"/><stop offset=".0224" stop-color="#b9ffff"/><stop offset=".046" stop-color="#78feff"/><stop offset=".0721" stop-color="#38feff"/><stop offset=".0982" stop-color="#00fdff"/></linearGradient><clipPath id="ins"><rect x="1505.5" y="84.5" width="190.5" height="147"/></clipPath><clipPath id="trii"><path d="M2458.25 679.16L1136.84 -124.77L553.87 1483.08Z"/></clipPath><path id="w2" d="M0 0L1100 -5.25L1100 5.25Z"/><linearGradient id="q600"><stop offset=".5438" stop-color="#6b9408"/><stop offset=".6073" stop-color="#689400"/><stop offset="1" stop-color="#5c9400"/></linearGradient><linearGradient id="q601"><stop offset=".5435" stop-color="#6d9408"/><stop offset=".6071" stop-color="#6a9400"/><stop offset="1" stop-color="#5f9400"/></linearGradient><linearGradient id="q602"><stop offset=".5433" stop-color="#6f9408"/><stop offset=".6069" stop-color="#6c9400"/><stop offset="1" stop-color="#619400"/></linearGradient><linearGradient id="q603"><stop offset=".5432" stop-color="#719409"/><stop offset=".6068" stop-color="#6e9400"/><stop offset="1" stop-color="#649400"/></linearGradient><linearGradient id="q604"><stop offset=".5431" stop-color="#729409"/><stop offset=".6067" stop-color="#709400"/><stop offset="1" stop-color="#669400"/></linearGradient><linearGradient id="q605"><stop offset=".543" stop-color="#749409"/><stop offset=".6067" stop-color="#729400"/><stop offset="1" stop-color="#699400"/></linearGradient><linearGradient id="q606"><stop offset=".543" stop-color="#769409"/><stop offset=".6067" stop-color="#759400"/><stop offset="1" stop-color="#6c9400"/></linearGradient><linearGradient id="q607"><stop offset=".5431" stop-color="#799409"/><stop offset=".6067" stop-color="#779400"/><stop offset="1" stop-color="#6e9400"/></linearGradient><linearGradient id="q608"><stop offset=".5431" stop-color="#7b9409"/><stop offset=".6067" stop-color="#799400"/><stop offset="1" stop-color="#719400"/></linearGradient><linearGradient id="q609"><stop offset=".5432" stop-color="#7d9409"/><stop offset=".6068" stop-color="#7b9400"/><stop offset="1" stop-color="#749400"/></linearGradient><linearGradient id="q610"><stop offset=".5434" stop-color="#7f9409"/><stop offset=".607" stop-color="#7d9400"/><stop offset="1" stop-color="#779400"/></linearGradient><linearGradient id="q611"><stop offset=".5436" stop-color="#819409"/><stop offset=".6071" stop-color="#809400"/><stop offset="1" stop-color="#7a9400"/></linearGradient><linearGradient id="q612"><stop offset=".5438" stop-color="#839409"/><stop offset=".6074" stop-color="#829400"/><stop offset="1" stop-color="#7d9400"/></linearGradient><linearGradient id="q613"><stop offset=".5441" stop-color="#859409"/><stop offset=".6076" stop-color="#849400"/><stop offset="1" stop-color="#809400"/></linearGradient><linearGradient id="q614"><stop offset=".5445" stop-color="#879409"/><stop offset=".6079" stop-color="#879400"/><stop offset="1" stop-color="#839400"/></linearGradient><linearGradient id="q615"><stop offset=".5448" stop-color="#8a9409"/><stop offset=".6082" stop-color="#899400"/><stop offset="1" stop-color="#869400"/></linearGradient><linearGradient id="q616"><stop offset=".5453" stop-color="#8c9409"/><stop offset=".6086" stop-color="#8b9400"/><stop offset="1" stop-color="#899400"/></linearGradient><linearGradient id="q617"><stop offset=".5457" stop-color="#8e9409"/><stop offset=".609" stop-color="#8e9400"/><stop offset="1" stop-color="#8c9400"/></linearGradient><linearGradient id="q618"><stop offset=".5462" stop-color="#909409"/><stop offset=".6094" stop-color="#909400"/><stop offset="1" stop-color="#8f9400"/></linearGradient><linearGradient id="q619"><stop offset=".5468" stop-color="#939409"/><stop offset=".6099" stop-color="#939400"/><stop offset="1" stop-color="#929400"/></linearGradient><linearGradient id="q620"><stop offset=".5474" stop-color="#949309"/><stop offset=".6104" stop-color="#949300"/><stop offset="1" stop-color="#949200"/></linearGradient><linearGradient id="q621"><stop offset=".548" stop-color="#949009"/><stop offset=".611" stop-color="#949000"/><stop offset="1" stop-color="#948f00"/></linearGradient><linearGradient id="q622"><stop offset=".5487" stop-color="#948e09"/><stop offset=".6116" stop-color="#948e00"/><stop offset="1" stop-color="#948c00"/></linearGradient><linearGradient id="q623"><stop offset=".5495" stop-color="#948c09"/><stop offset=".6122" stop-color="#948b00"/><stop offset="1" stop-color="#948900"/></linearGradient><linearGradient id="q624"><stop offset=".5503" stop-color="#948a09"/><stop offset=".6129" stop-color="#948900"/><stop offset="1" stop-color="#948600"/></linearGradient><linearGradient id="q625"><stop offset=".5511" stop-color="#948709"/><stop offset=".6136" stop-color="#948700"/><stop offset="1" stop-color="#948300"/></linearGradient><linearGradient id="q626"><stop offset=".552" stop-color="#948509"/><stop offset=".6143" stop-color="#948400"/><stop offset="1" stop-color="#948000"/></linearGradient><linearGradient id="q627"><stop offset=".5529" stop-color="#948309"/><stop offset=".6151" stop-color="#948200"/><stop offset="1" stop-color="#947d00"/></linearGradient><linearGradient id="q628"><stop offset=".5539" stop-color="#948109"/><stop offset=".616" stop-color="#948000"/><stop offset="1" stop-color="#947b00"/></linearGradient><linearGradient id="q629"><stop offset=".5549" stop-color="#947f08"/><stop offset=".6168" stop-color="#947e00"/><stop offset="1" stop-color="#947800"/></linearGradient><linearGradient id="q630"><stop offset=".5559" stop-color="#947d08"/><stop offset=".6178" stop-color="#947c00"/><stop offset="1" stop-color="#947500"/></linearGradient><linearGradient id="q631"><stop offset=".5571" stop-color="#947b08"/><stop offset=".6187" stop-color="#947a00"/><stop offset="1" stop-color="#947300"/></linearGradient><linearGradient id="q632"><stop offset=".5582" stop-color="#947908"/><stop offset=".6197" stop-color="#947800"/><stop offset="1" stop-color="#947100"/></linearGradient><linearGradient id="q633"><stop offset=".5594" stop-color="#947708"/><stop offset=".6264" stop-color="#947600"/><stop offset="1" stop-color="#946e00"/></linearGradient><linearGradient id="q634"><stop offset=".5607" stop-color="#947508"/><stop offset=".6274" stop-color="#947400"/><stop offset="1" stop-color="#946c00"/></linearGradient><linearGradient id="q635"><stop offset=".562" stop-color="#947408"/><stop offset=".6285" stop-color="#947200"/><stop offset="1" stop-color="#946a00"/></linearGradient><linearGradient id="q636"><stop offset=".5634" stop-color="#947208"/><stop offset=".6297" stop-color="#947000"/><stop offset="1" stop-color="#946700"/></linearGradient><linearGradient id="q637"><stop offset=".5648" stop-color="#947008"/><stop offset=".6309" stop-color="#946e00"/><stop offset="1" stop-color="#946500"/></linearGradient><linearGradient id="q638"><stop offset=".5663" stop-color="#946e08"/><stop offset=".6321" stop-color="#946c00"/><stop offset="1" stop-color="#946300"/></linearGradient><linearGradient id="q639"><stop offset=".5678" stop-color="#946c08"/><stop offset=".6334" stop-color="#946a00"/><stop offset="1" stop-color="#946100"/></linearGradient><path id="w3" d="M0 0L1100 -5.25L1100 5.25Z"/><linearGradient id="q640"><stop offset=".5136" stop-color="#baff16"/><stop offset=".6046" stop-color="#b4ff00"/><stop offset=".725" stop-color="#acff00"/></linearGradient><linearGradient id="q641"><stop offset=".5133" stop-color="#bdff16"/><stop offset=".6043" stop-color="#b7ff00"/><stop offset=".7247" stop-color="#b0ff00"/></linearGradient><linearGradient id="q642"><stop offset=".5132" stop-color="#c1ff16"/><stop offset=".6041" stop-color="#bbff00"/><stop offset=".7245" stop-color="#b4ff00"/></linearGradient><linearGradient id="q643"><stop offset=".513" stop-color="#c4ff17"/><stop offset=".6039" stop-color="#beff00"/><stop offset=".7243" stop-color="#b8ff00"/></linearGradient><linearGradient id="q644"><stop offset=".5129" stop-color="#c7ff17"/><stop offset=".6038" stop-color="#c2ff00"/><stop offset=".7241" stop-color="#bcff00"/></linearGradient><linearGradient id="q645"><stop offset=".5129" stop-color="#cbff17"/><stop offset=".6038" stop-color="#c5ff00"/><stop offset=".7241" stop-color="#c0ff00"/></linearGradient><linearGradient id="q646"><stop offset=".5129" stop-color="#ceff17"/><stop offset=".6037" stop-color="#c9ff00"/><stop offset=".724" stop-color="#c4ff00"/></linearGradient><linearGradient id="q647"><stop offset=".5129" stop-color="#d1ff17"/><stop offset=".6038" stop-color="#cdff00"/><stop offset=".7241" stop-color="#c8ff00"/></linearGradient><linearGradient id="q648"><stop offset=".513" stop-color="#d5ff17"/><stop offset=".6039" stop-color="#d1ff00"/><stop offset=".7242" stop-color="#ccff00"/></linearGradient><linearGradient id="q649"><stop offset=".5131" stop-color="#d8ff17"/><stop offset=".604" stop-color="#d4ff00"/><stop offset=".7243" stop-color="#d0ff00"/></linearGradient><linearGradient id="q650"><stop offset=".5132" stop-color="#dcff17"/><stop offset=".6042" stop-color="#d8ff00"/><stop offset=".7245" stop-color="#d4ff00"/></linearGradient><linearGradient id="q651"><stop offset=".5134" stop-color="#dfff18"/><stop offset=".6044" stop-color="#dcff00"/><stop offset=".7248" stop-color="#d8ff00"/></linearGradient><linearGradient id="q652"><stop offset=".5136" stop-color="#e3ff18"/><stop offset=".6047" stop-color="#e0ff00"/><stop offset=".7251" stop-color="#ddff00"/></linearGradient><linearGradient id="q653"><stop offset=".5139" stop-color="#e6ff18"/><stop offset=".605" stop-color="#e4ff00"/><stop offset=".7255" stop-color="#e1ff00"/></linearGradient><linearGradient id="q654"><stop offset=".5142" stop-color="#eaff18"/><stop offset=".6053" stop-color="#e8ff00"/><stop offset=".726" stop-color="#e5ff00"/></linearGradient><linearGradient id="q655"><stop offset=".5146" stop-color="#eeff18"/><stop offset=".6058" stop-color="#ecff00"/><stop offset=".7265" stop-color="#eaff00"/></linearGradient><linearGradient id="q656"><stop offset=".515" stop-color="#f2ff18"/><stop offset=".6062" stop-color="#f0ff00"/><stop offset=".727" stop-color="#efff00"/></linearGradient><linearGradient id="q657"><stop offset=".5154" stop-color="#f5ff18"/><stop offset=".6068" stop-color="#f4ff00"/><stop offset=".7276" stop-color="#f3ff00"/></linearGradient><linearGradient id="q658"><stop offset=".5159" stop-color="#f9ff18"/><stop offset=".6073" stop-color="#f9ff00"/><stop offset=".7283" stop-color="#f8ff00"/></linearGradient><linearGradient id="q659"><stop offset=".5164" stop-color="#fdff19"/><stop offset=".6079" stop-color="#fdff00"/><stop offset=".7291" stop-color="#fdff00"/></linearGradient><linearGradient id="q660"><stop offset=".517" stop-color="#fffd18"/><stop offset=".6086" stop-color="#fffd00"/><stop offset=".7299" stop-color="#fffc00"/></linearGradient><linearGradient id="q661"><stop offset=".5176" stop-color="#fff918"/><stop offset=".6093" stop-color="#fff800"/><stop offset=".7307" stop-color="#fff800"/></linearGradient><linearGradient id="q662"><stop offset=".5182" stop-color="#fff518"/><stop offset=".6101" stop-color="#fff400"/><stop offset=".7316" stop-color="#fff300"/></linearGradient><linearGradient id="q663"><stop offset=".5189" stop-color="#fff218"/><stop offset=".6109" stop-color="#fff000"/><stop offset=".7326" stop-color="#ffef00"/></linearGradient><linearGradient id="q664"><stop offset=".5197" stop-color="#ffee18"/><stop offset=".6118" stop-color="#ffec00"/><stop offset=".7337" stop-color="#ffea00"/></linearGradient><linearGradient id="q665"><stop offset=".5205" stop-color="#ffea17"/><stop offset=".6127" stop-color="#ffe800"/><stop offset=".7348" stop-color="#ffe600"/></linearGradient><linearGradient id="q666"><stop offset=".5213" stop-color="#ffe717"/><stop offset=".6137" stop-color="#ffe400"/><stop offset=".7359" stop-color="#ffe200"/></linearGradient><linearGradient id="q667"><stop offset=".5222" stop-color="#ffe317"/><stop offset=".6147" stop-color="#ffe000"/><stop offset=".7372" stop-color="#ffdd00"/></linearGradient><linearGradient id="q668"><stop offset=".5231" stop-color="#ffe017"/><stop offset=".6158" stop-color="#ffdd00"/><stop offset=".7385" stop-color="#ffd900"/></linearGradient><linearGradient id="q669"><stop offset=".524" stop-color="#ffdc16"/><stop offset=".6169" stop-color="#ffd900"/><stop offset=".7398" stop-color="#ffd500"/></linearGradient><linearGradient id="q670"><stop offset=".5251" stop-color="#ffd916"/><stop offset=".6181" stop-color="#ffd500"/><stop offset=".7412" stop-color="#ffd100"/></linearGradient><linearGradient id="q671"><stop offset=".5261" stop-color="#ffd616"/><stop offset=".6193" stop-color="#ffd200"/><stop offset=".7427" stop-color="#ffcd00"/></linearGradient><linearGradient id="q672"><stop offset=".5272" stop-color="#ffd216"/><stop offset=".6206" stop-color="#ffce00"/><stop offset=".7443" stop-color="#ffca00"/></linearGradient><linearGradient id="q673"><stop offset=".5284" stop-color="#ffcf16"/><stop offset=".622" stop-color="#ffcb00"/><stop offset=".7459" stop-color="#ffc600"/></linearGradient><linearGradient id="q674"><stop offset=".5295" stop-color="#ffcc15"/><stop offset=".6234" stop-color="#ffc700"/><stop offset=".7476" stop-color="#ffc200"/></linearGradient><linearGradient id="q675"><stop offset=".5308" stop-color="#ffc915"/><stop offset=".6248" stop-color="#ffc400"/><stop offset=".7493" stop-color="#ffbf00"/></linearGradient><linearGradient id="q676"><stop offset=".5321" stop-color="#ffc615"/><stop offset=".6264" stop-color="#ffc100"/><stop offset=".7512" stop-color="#ffbb00"/></linearGradient><linearGradient id="q677"><stop offset=".5334" stop-color="#ffc315"/><stop offset=".6279" stop-color="#ffbe00"/><stop offset=".7531" stop-color="#ffb800"/></linearGradient><linearGradient id="q678"><stop offset=".5348" stop-color="#ffc015"/><stop offset=".6296" stop-color="#ffba00"/><stop offset=".755" stop-color="#ffb400"/></linearGradient><linearGradient id="q679"><stop offset=".5362" stop-color="#ffbd14"/><stop offset=".6313" stop-color="#ffb700"/><stop offset=".7571" stop-color="#ffb100"/></linearGradient><linearGradient id="thd" x1="0" y1="0" x2="0" y2="1"><stop offset="0" stop-color="#333"/><stop offset=".45" stop-color="#2a2a2a"/><stop offset=".55" stop-color="#1c1c1c"/><stop offset="1" stop-color="#111"/></linearGradient></defs><rect x="0" y="0" width="1713" height="888" fill="#333"/>
<rect x="0" y="0" width="1713" height="1" fill="#1e1e1e"/>
<rect x="0" y="1" width="1713" height="1" fill="#2a2a2a"/>
<text x="17.80" y="84.20" font-size="41.42" textLength="244.13" lengthAdjust="spacingAndGlyphs" fill="#f0f0f0">ColorChecker</text>
<text x="85.32" y="141.70" font-size="29.51" textLength="240.48" lengthAdjust="spacingAndGlyphs" fill="#f0f0f0">Avg dE2000: 6,26</text>
<text x="69.24" y="183.80" font-size="29.51" textLength="269.64" lengthAdjust="spacingAndGlyphs" fill="#f0f0f0">Max dE2000: 19,14</text>
<text x="156.56" y="219.80" font-size="15.70" textLength="83.03" lengthAdjust="spacingAndGlyphs" fill="#d8d8d8">DeltaE 2000</text>
<rect x="15.2" y="225.5" width="365.8" height="370.0" fill="#232323" stroke="#8c8c8c" stroke-width="1.2"/>
<rect x="63.22" y="225.5" width="1.4" height="370.0" fill="#8a8a8a"/>
<rect x="111.94" y="225.5" width="1.4" height="370.0" fill="#8a8a8a"/>
<rect x="160.66" y="225.5" width="1.4" height="370.0" fill="#8a8a8a"/>
<rect x="209.38" y="225.5" width="1.4" height="370.0" fill="#8a8a8a"/>
<rect x="306.82" y="225.5" width="1.4" height="370.0" fill="#8a8a8a"/>
<rect x="355.54" y="225.5" width="1.4" height="370.0" fill="#8a8a8a"/>
<defs><clipPath id="ecl"><rect x="15.2" y="225.5" width="365.8" height="370.0"/></clipPath></defs>
<g clip-path="url(#ecl)">
<rect x="15.2" y="226.50" width="92.1" height="9.5" fill="#000"/>
<rect x="16.2" y="228.00" width="90.1" height="7" fill="url(#eb0)"/>
<rect x="15.2" y="238.82" width="262.9" height="9.5" fill="#000"/>
<rect x="16.2" y="240.32" width="260.9" height="7" fill="url(#eb1)"/>
<rect x="15.2" y="251.14" width="144.7" height="9.5" fill="#000"/>
<rect x="16.2" y="252.64" width="142.7" height="7" fill="url(#eb2)"/>
<rect x="15.2" y="263.46" width="467.3" height="9.5" fill="#000"/>
<rect x="16.2" y="264.96" width="465.3" height="7" fill="url(#eb3)"/>
<rect x="15.2" y="275.78" width="222.4" height="9.5" fill="#000"/>
<rect x="16.2" y="277.28" width="220.4" height="7" fill="url(#eb4)"/>
<rect x="15.2" y="288.10" width="154.5" height="9.5" fill="#000"/>
<rect x="16.2" y="289.60" width="152.5" height="7" fill="url(#eb5)"/>
<rect x="15.2" y="300.42" width="102.6" height="9.5" fill="#000"/>
<rect x="16.2" y="301.92" width="100.6" height="7" fill="url(#eb6)"/>
<rect x="15.2" y="312.74" width="198.3" height="9.5" fill="#000"/>
<rect x="16.2" y="314.24" width="196.3" height="7" fill="url(#eb7)"/>
<rect x="15.2" y="325.06" width="31.0" height="9.5" fill="#000"/>
<rect x="16.2" y="326.56" width="29.0" height="7" fill="url(#eb8)"/>
<rect x="15.2" y="337.38" width="158.4" height="9.5" fill="#000"/>
<rect x="16.2" y="338.88" width="156.4" height="7" fill="url(#eb9)"/>
<rect x="15.2" y="349.70" width="152.8" height="9.5" fill="#000"/>
<rect x="16.2" y="351.20" width="150.8" height="7" fill="url(#eb10)"/>
<rect x="15.2" y="362.02" width="197.3" height="9.5" fill="#000"/>
<rect x="16.2" y="363.52" width="195.3" height="7" fill="url(#eb11)"/>
<rect x="15.2" y="374.34" width="71.4" height="9.5" fill="#000"/>
<rect x="16.2" y="375.84" width="69.4" height="7" fill="url(#eb12)"/>
<rect x="15.2" y="386.66" width="112.8" height="9.5" fill="#000"/>
<rect x="16.2" y="388.16" width="110.8" height="7" fill="url(#eb13)"/>
<rect x="15.2" y="398.98" width="179.1" height="9.5" fill="#000"/>
<rect x="16.2" y="400.48" width="177.1" height="7" fill="url(#eb14)"/>
<rect x="15.2" y="411.30" width="179.6" height="9.5" fill="#000"/>
<rect x="16.2" y="412.80" width="177.6" height="7" fill="url(#eb15)"/>
<rect x="15.2" y="423.62" width="146.7" height="9.5" fill="#000"/>
<rect x="16.2" y="425.12" width="144.7" height="7" fill="url(#eb16)"/>
<rect x="15.2" y="435.94" width="136.4" height="9.5" fill="#000"/>
<rect x="16.2" y="437.44" width="134.4" height="7" fill="url(#eb17)"/>
<rect x="15.2" y="448.26" width="145.5" height="9.5" fill="#000"/>
<rect x="16.2" y="449.76" width="143.5" height="7" fill="url(#eb18)"/>
<rect x="15.2" y="460.58" width="153.2" height="9.5" fill="#000"/>
<rect x="16.2" y="462.08" width="151.2" height="7" fill="url(#eb19)"/>
<rect x="15.2" y="472.90" width="82.4" height="9.5" fill="#000"/>
<rect x="16.2" y="474.40" width="80.4" height="7" fill="url(#eb20)"/>
<rect x="15.2" y="485.22" width="130.8" height="9.5" fill="#000"/>
<rect x="16.2" y="486.72" width="128.8" height="7" fill="url(#eb21)"/>
<rect x="15.2" y="497.54" width="162.0" height="9.5" fill="#000"/>
<rect x="16.2" y="499.04" width="160.0" height="7" fill="url(#eb22)"/>
<rect x="15.2" y="509.86" width="142.3" height="9.5" fill="#000"/>
<rect x="16.2" y="511.36" width="140.3" height="7" fill="url(#eb23)"/>
<rect x="15.2" y="522.18" width="30.2" height="9.5" fill="#000"/>
<rect x="16.2" y="523.68" width="28.2" height="7" fill="url(#eb24)"/>
<rect x="15.2" y="534.50" width="133.3" height="9.5" fill="#000"/>
<rect x="16.2" y="536.00" width="131.3" height="7" fill="url(#eb25)"/>
<rect x="15.2" y="546.82" width="141.8" height="9.5" fill="#000"/>
<rect x="16.2" y="548.32" width="139.8" height="7" fill="url(#eb26)"/>
<rect x="15.2" y="559.14" width="143.5" height="9.5" fill="#000"/>
<rect x="16.2" y="560.64" width="141.5" height="7" fill="url(#eb27)"/>
<rect x="15.2" y="571.46" width="133.0" height="9.5" fill="#000"/>
<rect x="16.2" y="572.96" width="131.0" height="7" fill="url(#eb28)"/>
<rect x="15.2" y="583.78" width="73.3" height="9.5" fill="#000"/>
<rect x="16.2" y="585.28" width="71.3" height="7" fill="url(#eb29)"/>
</g>
<rect x="38.76" y="225.5" width="1.6" height="370.0" fill="#008000"/>
<rect x="87.48" y="225.5" width="1.6" height="370.0" fill="#ffff00"/>
<rect x="257.90" y="225.5" width="1.8" height="370.0" fill="#ff0000"/>
<rect x="14.40" y="595.5" width="1.6" height="5.5" fill="#dcdcdc"/>
<text x="10.91" y="617.80" font-size="15.41" textLength="8.57" lengthAdjust="spacingAndGlyphs" fill="#dcdcdc">0</text>
<rect x="63.12" y="595.5" width="1.6" height="5.5" fill="#dcdcdc"/>
<text x="59.64" y="617.80" font-size="15.41" textLength="8.57" lengthAdjust="spacingAndGlyphs" fill="#dcdcdc">2</text>
<rect x="111.84" y="595.5" width="1.6" height="5.5" fill="#dcdcdc"/>
<text x="108.40" y="617.80" font-size="15.41" textLength="8.57" lengthAdjust="spacingAndGlyphs" fill="#dcdcdc">4</text>
<rect x="160.56" y="595.5" width="1.6" height="5.5" fill="#dcdcdc"/>
<text x="157.03" y="617.80" font-size="15.41" textLength="8.57" lengthAdjust="spacingAndGlyphs" fill="#dcdcdc">6</text>
<rect x="209.28" y="595.5" width="1.6" height="5.5" fill="#dcdcdc"/>
<text x="205.80" y="617.80" font-size="15.41" textLength="8.57" lengthAdjust="spacingAndGlyphs" fill="#dcdcdc">8</text>
<rect x="258.00" y="595.5" width="1.6" height="5.5" fill="#dcdcdc"/>
<text x="249.96" y="617.80" font-size="15.41" textLength="17.14" lengthAdjust="spacingAndGlyphs" fill="#dcdcdc">10</text>
<rect x="306.72" y="595.5" width="1.6" height="5.5" fill="#dcdcdc"/>
<text x="298.78" y="617.80" font-size="15.41" textLength="17.14" lengthAdjust="spacingAndGlyphs" fill="#dcdcdc">12</text>
<rect x="355.44" y="595.5" width="1.6" height="5.5" fill="#dcdcdc"/>
<text x="347.32" y="617.80" font-size="15.41" textLength="17.14" lengthAdjust="spacingAndGlyphs" fill="#dcdcdc">14</text>
<text x="470.32" y="66.00" font-size="15.70" textLength="45.38" lengthAdjust="spacingAndGlyphs" fill="#d8d8d8">DeltaL</text>
<rect x="427.2" y="71.3" width="150.3" height="346.7" fill="#232323" stroke="#8c8c8c" stroke-width="1.2"/>
<rect x="421.2" y="417.30" width="6" height="1.4" fill="#dcdcdc"/>
<text x="407.45" y="423.30" font-size="15.41" textLength="13.70" lengthAdjust="spacingAndGlyphs" fill="#dcdcdc">-4</text>
<rect x="427.2" y="374.06" width="150.3" height="1.2" fill="#8a8a8a"/>
<rect x="421.2" y="373.96" width="6" height="1.4" fill="#dcdcdc"/>
<text x="407.68" y="379.96" font-size="15.41" textLength="13.70" lengthAdjust="spacingAndGlyphs" fill="#dcdcdc">-3</text>
<rect x="427.2" y="330.72" width="150.3" height="1.2" fill="#8a8a8a"/>
<rect x="421.2" y="330.62" width="6" height="1.4" fill="#dcdcdc"/>
<text x="407.80" y="336.62" font-size="15.41" textLength="13.70" lengthAdjust="spacingAndGlyphs" fill="#dcdcdc">-2</text>
<rect x="427.2" y="287.39" width="150.3" height="1.2" fill="#8a8a8a"/>
<rect x="421.2" y="287.29" width="6" height="1.4" fill="#dcdcdc"/>
<text x="407.76" y="293.29" font-size="15.41" textLength="13.70" lengthAdjust="spacingAndGlyphs" fill="#dcdcdc">-1</text>
<rect x="427.2" y="244.05" width="150.3" height="1.2" fill="#8a8a8a"/>
<rect x="421.2" y="243.95" width="6" height="1.4" fill="#dcdcdc"/>
<text x="412.73" y="249.95" font-size="15.41" textLength="8.57" lengthAdjust="spacingAndGlyphs" fill="#dcdcdc">0</text>
<rect x="427.2" y="200.71" width="150.3" height="1.2" fill="#8a8a8a"/>
<rect x="421.2" y="200.61" width="6" height="1.4" fill="#dcdcdc"/>
<text x="412.88" y="206.61" font-size="15.41" textLength="8.57" lengthAdjust="spacingAndGlyphs" fill="#dcdcdc">1</text>
<rect x="427.2" y="157.37" width="150.3" height="1.2" fill="#8a8a8a"/>
<rect x="421.2" y="157.27" width="6" height="1.4" fill="#dcdcdc"/>
<text x="412.92" y="163.27" font-size="15.41" textLength="8.57" lengthAdjust="spacingAndGlyphs" fill="#dcdcdc">2</text>
<rect x="427.2" y="114.04" width="150.3" height="1.2" fill="#8a8a8a"/>
<rect x="421.2" y="113.94" width="6" height="1.4" fill="#dcdcdc"/>
<text x="412.80" y="119.94" font-size="15.41" textLength="8.57" lengthAdjust="spacingAndGlyphs" fill="#dcdcdc">3</text>
<rect x="421.2" y="70.60" width="6" height="1.4" fill="#dcdcdc"/>
<text x="412.57" y="76.60" font-size="15.41" textLength="8.57" lengthAdjust="spacingAndGlyphs" fill="#dcdcdc">4</text>
<rect x="427.2" y="113.94" width="150.3" height="1.4" fill="#ffff00"/>
<rect x="427.2" y="373.96" width="150.3" height="1.4" fill="#ffff00"/>
<rect x="441.00" y="244.05" width="122.40" height="171.22" fill="#000"/>
<rect x="442.20" y="245.25" width="120.00" height="168.42" fill="url(#dgDeltaL)"/>
<rect x="427.2" y="200.61" width="150.3" height="1.4" fill="#008000"/>
<rect x="427.2" y="287.29" width="150.3" height="1.4" fill="#008000"/>
<rect x="427.2" y="71.3" width="150.3" height="346.7" fill="none" stroke="#8c8c8c" stroke-width="1.2"/>
<text x="665.35" y="66.00" font-size="15.70" textLength="47.98" lengthAdjust="spacingAndGlyphs" fill="#d8d8d8">DeltaC</text>
<rect x="623.6" y="71.3" width="150.60000000000002" height="346.7" fill="#232323" stroke="#8c8c8c" stroke-width="1.2"/>
<rect x="617.6" y="417.30" width="6" height="1.4" fill="#dcdcdc"/>
<text x="603.85" y="423.30" font-size="15.41" textLength="13.70" lengthAdjust="spacingAndGlyphs" fill="#dcdcdc">-4</text>
<rect x="623.6" y="374.06" width="150.60000000000002" height="1.2" fill="#8a8a8a"/>
<rect x="617.6" y="373.96" width="6" height="1.4" fill="#dcdcdc"/>
<text x="604.08" y="379.96" font-size="15.41" textLength="13.70" lengthAdjust="spacingAndGlyphs" fill="#dcdcdc">-3</text>
<rect x="623.6" y="330.72" width="150.60000000000002" height="1.2" fill="#8a8a8a"/>
<rect x="617.6" y="330.62" width="6" height="1.4" fill="#dcdcdc"/>
<text x="604.20" y="336.62" font-size="15.41" textLength="13.70" lengthAdjust="spacingAndGlyphs" fill="#dcdcdc">-2</text>
<rect x="623.6" y="287.39" width="150.60000000000002" height="1.2" fill="#8a8a8a"/>
<rect x="617.6" y="287.29" width="6" height="1.4" fill="#dcdcdc"/>
<text x="604.16" y="293.29" font-size="15.41" textLength="13.70" lengthAdjust="spacingAndGlyphs" fill="#dcdcdc">-1</text>
<rect x="623.6" y="244.05" width="150.60000000000002" height="1.2" fill="#8a8a8a"/>
<rect x="617.6" y="243.95" width="6" height="1.4" fill="#dcdcdc"/>
<text x="609.13" y="249.95" font-size="15.41" textLength="8.57" lengthAdjust="spacingAndGlyphs" fill="#dcdcdc">0</text>
<rect x="623.6" y="200.71" width="150.60000000000002" height="1.2" fill="#8a8a8a"/>
<rect x="617.6" y="200.61" width="6" height="1.4" fill="#dcdcdc"/>
<text x="609.28" y="206.61" font-size="15.41" textLength="8.57" lengthAdjust="spacingAndGlyphs" fill="#dcdcdc">1</text>
<rect x="623.6" y="157.37" width="150.60000000000002" height="1.2" fill="#8a8a8a"/>
<rect x="617.6" y="157.27" width="6" height="1.4" fill="#dcdcdc"/>
<text x="609.32" y="163.27" font-size="15.41" textLength="8.57" lengthAdjust="spacingAndGlyphs" fill="#dcdcdc">2</text>
<rect x="623.6" y="114.04" width="150.60000000000002" height="1.2" fill="#8a8a8a"/>
<rect x="617.6" y="113.94" width="6" height="1.4" fill="#dcdcdc"/>
<text x="609.20" y="119.94" font-size="15.41" textLength="8.57" lengthAdjust="spacingAndGlyphs" fill="#dcdcdc">3</text>
<rect x="617.6" y="70.60" width="6" height="1.4" fill="#dcdcdc"/>
<text x="608.97" y="76.60" font-size="15.41" textLength="8.57" lengthAdjust="spacingAndGlyphs" fill="#dcdcdc">4</text>
<rect x="623.6" y="113.94" width="150.60000000000002" height="1.4" fill="#ffff00"/>
<rect x="623.6" y="373.96" width="150.60000000000002" height="1.4" fill="#ffff00"/>
<rect x="638.40" y="188.58" width="121.00" height="57.67" fill="#000"/>
<rect x="639.60" y="189.78" width="118.60" height="54.87" fill="url(#dgDeltaC)"/>
<rect x="623.6" y="200.61" width="150.60000000000002" height="1.4" fill="#008000"/>
<rect x="623.6" y="287.29" width="150.60000000000002" height="1.4" fill="#008000"/>
<rect x="623.6" y="71.3" width="150.60000000000002" height="346.7" fill="none" stroke="#8c8c8c" stroke-width="1.2"/>
<text x="868.50" y="66.00" font-size="15.70" textLength="47.98" lengthAdjust="spacingAndGlyphs" fill="#d8d8d8">DeltaH</text>
<rect x="819.6" y="71.3" width="164.69999999999993" height="346.7" fill="#232323" stroke="#8c8c8c" stroke-width="1.2"/>
<rect x="813.6" y="417.30" width="6" height="1.4" fill="#dcdcdc"/>
<text x="800.08" y="423.30" font-size="15.41" textLength="13.70" lengthAdjust="spacingAndGlyphs" fill="#dcdcdc">-8</text>
<rect x="819.6" y="374.06" width="164.69999999999993" height="1.2" fill="#8a8a8a"/>
<rect x="813.6" y="373.96" width="6" height="1.4" fill="#dcdcdc"/>
<text x="800.08" y="379.96" font-size="15.41" textLength="13.70" lengthAdjust="spacingAndGlyphs" fill="#dcdcdc">-6</text>
<rect x="819.6" y="330.72" width="164.69999999999993" height="1.2" fill="#8a8a8a"/>
<rect x="813.6" y="330.62" width="6" height="1.4" fill="#dcdcdc"/>
<text x="799.85" y="336.62" font-size="15.41" textLength="13.70" lengthAdjust="spacingAndGlyphs" fill="#dcdcdc">-4</text>
<rect x="819.6" y="287.39" width="164.69999999999993" height="1.2" fill="#8a8a8a"/>
<rect x="813.6" y="287.29" width="6" height="1.4" fill="#dcdcdc"/>
<text x="800.20" y="293.29" font-size="15.41" textLength="13.70" lengthAdjust="spacingAndGlyphs" fill="#dcdcdc">-2</text>
<rect x="819.6" y="244.05" width="164.69999999999993" height="1.2" fill="#8a8a8a"/>
<rect x="813.6" y="243.95" width="6" height="1.4" fill="#dcdcdc"/>
<text x="805.13" y="249.95" font-size="15.41" textLength="8.57" lengthAdjust="spacingAndGlyphs" fill="#dcdcdc">0</text>
<rect x="819.6" y="200.71" width="164.69999999999993" height="1.2" fill="#8a8a8a"/>
<rect x="813.6" y="200.61" width="6" height="1.4" fill="#dcdcdc"/>
<text x="805.32" y="206.61" font-size="15.41" textLength="8.57" lengthAdjust="spacingAndGlyphs" fill="#dcdcdc">2</text>
<rect x="819.6" y="157.37" width="164.69999999999993" height="1.2" fill="#8a8a8a"/>
<rect x="813.6" y="157.27" width="6" height="1.4" fill="#dcdcdc"/>
<text x="804.97" y="163.27" font-size="15.41" textLength="8.57" lengthAdjust="spacingAndGlyphs" fill="#dcdcdc">4</text>
<rect x="819.6" y="114.04" width="164.69999999999993" height="1.2" fill="#8a8a8a"/>
<rect x="813.6" y="113.94" width="6" height="1.4" fill="#dcdcdc"/>
<text x="805.20" y="119.94" font-size="15.41" textLength="8.57" lengthAdjust="spacingAndGlyphs" fill="#dcdcdc">6</text>
<rect x="813.6" y="70.60" width="6" height="1.4" fill="#dcdcdc"/>
<text x="805.20" y="76.60" font-size="15.41" textLength="8.57" lengthAdjust="spacingAndGlyphs" fill="#dcdcdc">8</text>
<rect x="819.6" y="178.94" width="164.69999999999993" height="1.4" fill="#ffff00"/>
<rect x="819.6" y="308.96" width="164.69999999999993" height="1.4" fill="#ffff00"/>
<rect x="836.00" y="244.05" width="132.60" height="133.30" fill="#000"/>
<rect x="837.20" y="245.25" width="130.20" height="130.50" fill="url(#dgDeltaH)"/>
<rect x="819.6" y="222.28" width="164.69999999999993" height="1.4" fill="#008000"/>
<rect x="819.6" y="265.62" width="164.69999999999993" height="1.4" fill="#008000"/>
<rect x="819.6" y="71.3" width="164.69999999999993" height="346.7" fill="none" stroke="#8c8c8c" stroke-width="1.2"/>
<rect x="409" y="424" width="589" height="187" fill="#000"/>
<defs><clipPath id="swc"><rect x="409" y="424" width="589" height="187"/></clipPath></defs>
<g clip-path="url(#swc)">
<rect x="427.5" y="432.7" width="59" height="60.8" fill="#fcfdf9" stroke="#fff" stroke-width="1"/>
<rect x="428.5" y="433.7" width="57" height="58.8" fill="none" stroke="#a0a0a0" stroke-width="1"/>
<rect x="427.5" y="511.7" width="59" height="60.8" fill="#ffffff" stroke="#fff" stroke-width="1"/>
<rect x="428.5" y="512.7" width="57" height="58.8" fill="none" stroke="#a0a0a0" stroke-width="1"/>
<text x="440.90" y="587.60" font-size="12.79" textLength="32.70" lengthAdjust="spacingAndGlyphs" fill="#ffffff">White</text>
<rect x="497.5" y="432.7" width="59" height="60.8" fill="#e8ebe4" stroke="#fff" stroke-width="1"/>
<rect x="498.5" y="433.7" width="57" height="58.8" fill="none" stroke="#a0a0a0" stroke-width="1"/>
<rect x="497.5" y="511.7" width="59" height="60.8" fill="#e5e5e5" stroke="#fff" stroke-width="1"/>
<rect x="498.5" y="512.7" width="57" height="58.8" fill="none" stroke="#a0a0a0" stroke-width="1"/>
<text x="504.18" y="587.60" font-size="12.79" textLength="45.50" lengthAdjust="spacingAndGlyphs" fill="#ffffff">Gray 80</text>
<rect x="567.5" y="432.7" width="59" height="60.8" fill="#d4d6cd" stroke="#fff" stroke-width="1"/>
<rect x="568.5" y="433.7" width="57" height="58.8" fill="none" stroke="#a0a0a0" stroke-width="1"/>
<rect x="567.5" y="511.7" width="59" height="60.8" fill="#cfcfcf" stroke="#fff" stroke-width="1"/>
<rect x="568.5" y="512.7" width="57" height="58.8" fill="none" stroke="#a0a0a0" stroke-width="1"/>
<text x="574.20" y="587.60" font-size="12.79" textLength="45.50" lengthAdjust="spacingAndGlyphs" fill="#ffffff">Gray 65</text>
<rect x="637.5" y="432.7" width="59" height="60.8" fill="#babcb2" stroke="#fff" stroke-width="1"/>
<rect x="638.5" y="433.7" width="57" height="58.8" fill="none" stroke="#a0a0a0" stroke-width="1"/>
<rect x="637.5" y="511.7" width="59" height="60.8" fill="#b8b8b8" stroke="#fff" stroke-width="1"/>
<rect x="638.5" y="512.7" width="57" height="58.8" fill="none" stroke="#a0a0a0" stroke-width="1"/>
<text x="644.18" y="587.60" font-size="12.79" textLength="45.50" lengthAdjust="spacingAndGlyphs" fill="#ffffff">Gray 50</text>
<rect x="707.5" y="432.7" width="59" height="60.8" fill="#9e9f95" stroke="#fff" stroke-width="1"/>
<rect x="708.5" y="433.7" width="57" height="58.8" fill="none" stroke="#a0a0a0" stroke-width="1"/>
<rect x="707.5" y="511.7" width="59" height="60.8" fill="#a0a0a0" stroke="#fff" stroke-width="1"/>
<rect x="708.5" y="512.7" width="57" height="58.8" fill="none" stroke="#a0a0a0" stroke-width="1"/>
<text x="714.20" y="587.60" font-size="12.79" textLength="45.50" lengthAdjust="spacingAndGlyphs" fill="#ffffff">Gray 35</text>
<rect x="777.5" y="432.7" width="59" height="60.8" fill="#050508" stroke="#fff" stroke-width="1"/>
<rect x="778.5" y="433.7" width="57" height="58.8" fill="none" stroke="#a0a0a0" stroke-width="1"/>
<rect x="777.5" y="511.7" width="59" height="60.8" fill="#020202" stroke="#fff" stroke-width="1"/>
<rect x="778.5" y="512.7" width="57" height="58.8" fill="none" stroke="#a0a0a0" stroke-width="1"/>
<text x="790.84" y="587.60" font-size="12.79" textLength="31.28" lengthAdjust="spacingAndGlyphs" fill="#ffffff">Black</text>
<rect x="847.5" y="432.7" width="59" height="60.8" fill="#725847" stroke="#fff" stroke-width="1"/>
<rect x="848.5" y="433.7" width="57" height="58.8" fill="none" stroke="#a0a0a0" stroke-width="1"/>
<rect x="847.5" y="511.7" width="59" height="60.8" fill="#765444" stroke="#fff" stroke-width="1"/>
<rect x="848.5" y="512.7" width="57" height="58.8" fill="none" stroke="#a0a0a0" stroke-width="1"/>
<text x="849.16" y="587.60" font-size="12.79" textLength="55.44" lengthAdjust="spacingAndGlyphs" fill="#ffffff">Dark Skin</text>
<rect x="917.5" y="432.7" width="59" height="60.8" fill="#b89b7e" stroke="#fff" stroke-width="1"/>
<rect x="918.5" y="433.7" width="57" height="58.8" fill="none" stroke="#a0a0a0" stroke-width="1"/>
<rect x="917.5" y="511.7" width="59" height="60.8" fill="#c39583" stroke="#fff" stroke-width="1"/>
<rect x="918.5" y="512.7" width="57" height="58.8" fill="none" stroke="#a0a0a0" stroke-width="1"/>
<text x="918.80" y="587.60" font-size="12.79" textLength="56.17" lengthAdjust="spacingAndGlyphs" fill="#ffffff">Light Skin</text>
<rect x="987.5" y="432.7" width="59" height="60.8" fill="#6a8099" stroke="#fff" stroke-width="1"/>
<rect x="988.5" y="433.7" width="57" height="58.8" fill="none" stroke="#a0a0a0" stroke-width="1"/>
<rect x="987.5" y="511.7" width="59" height="60.8" fill="#607b9f" stroke="#fff" stroke-width="1"/>
<rect x="988.5" y="512.7" width="57" height="58.8" fill="none" stroke="#a0a0a0" stroke-width="1"/>
<text x="991.24" y="587.60" font-size="12.79" textLength="50.48" lengthAdjust="spacingAndGlyphs" fill="#ffffff">Blue Sky</text>
</g>
<text x="-0.03" y="0.00" font-size="14.39" textLength="35.69" lengthAdjust="spacingAndGlyphs" fill="#ffffff" transform="translate(423 480.8) rotate(-90)">Actual</text>
<text x="-0.29" y="0.00" font-size="14.39" textLength="35.98" lengthAdjust="spacingAndGlyphs" fill="#ffffff" transform="translate(423 559.5) rotate(-90)">Target</text>
<rect x="409" y="611" width="589" height="17" fill="#5b5b5b"/>
<rect x="427.5" y="612.5" width="151" height="14" rx="7" fill="#474747"/>
<rect x="410.2" y="612" width="13.8" height="14.8" rx="3" fill="#6a6a6a" stroke="#7a7a7a" stroke-width="1"/>
<path d="M414.2 619.4 L419.6 615 L419.6 623.8 Z" fill="#3c3c3c"/>
<rect x="983.2" y="612" width="13.8" height="14.8" rx="3" fill="#6a6a6a" stroke="#7a7a7a" stroke-width="1"/>
<path d="M993 619.4 L987.6 615 L987.6 623.8 Z" fill="#3c3c3c"/>
<rect x="1015.5" y="49.5" width="694" height="561" fill="none" stroke="#ffff00" stroke-width="7"/>
<text x="1323.18" y="72.00" font-size="15.70" textLength="78.15" lengthAdjust="spacingAndGlyphs" fill="#d8d8d8">CIE 1931 xy</text>
<rect x="1048.6" y="76.6" width="653.9" height="500.9" fill="#232323"/>
<g clip-path="url(#loc)">
<g clip-path="url(#loc)"><g transform="translate(1291.66 382.08)" shape-rendering="crispEdges">
<use href="#w0" transform="rotate(-179.400)" fill="url(#q0)"/>
<use href="#w0" transform="rotate(-178.200)" fill="url(#q1)"/>
<use href="#w0" transform="rotate(-177.000)" fill="url(#q2)"/>
<use href="#w0" transform="rotate(-175.800)" fill="url(#q3)"/>
<use href="#w0" transform="rotate(-174.600)" fill="url(#q4)"/>
<use href="#w0" transform="rotate(-173.400)" fill="url(#q5)"/>
<use href="#w0" transform="rotate(-172.200)" fill="url(#q6)"/>
<use href="#w0" transform="rotate(-171.000)" fill="url(#q7)"/>
<use href="#w0" transform="rotate(-169.800)" fill="url(#q8)"/>
<use href="#w0" transform="rotate(-168.600)" fill="url(#q9)"/>
<use href="#w0" transform="rotate(-167.400)" fill="url(#q10)"/>
<use href="#w0" transform="rotate(-166.200)" fill="url(#q11)"/>
<use href="#w0" transform="rotate(-165.000)" fill="url(#q12)"/>
<use href="#w0" transform="rotate(-163.800)" fill="url(#q13)"/>
<use href="#w0" transform="rotate(-162.600)" fill="url(#q14)"/>
<use href="#w0" transform="rotate(-161.400)" fill="url(#q15)"/>
<use href="#w0" transform="rotate(-160.200)" fill="url(#q16)"/>
<use href="#w0" transform="rotate(-159.000)" fill="url(#q17)"/>
<use href="#w0" transform="rotate(-157.800)" fill="url(#q18)"/>
<use href="#w0" transform="rotate(-156.600)" fill="url(#q19)"/>
<use href="#w0" transform="rotate(-155.400)" fill="url(#q20)"/>
<use href="#w0" transform="rotate(-154.200)" fill="url(#q21)"/>
<use href="#w0" transform="rotate(-153.000)" fill="url(#q22)"/>
<use href="#w0" transform="rotate(-151.800)" fill="url(#q23)"/>
<use href="#w0" transform="rotate(-150.600)" fill="url(#q24)"/>
<use href="#w0" transform="rotate(-149.400)" fill="url(#q25)"/>
<use href="#w0" transform="rotate(-148.200)" fill="url(#q26)"/>
<use href="#w0" transform="rotate(-147.000)" fill="url(#q27)"/>
<use href="#w0" transform="rotate(-145.800)" fill="url(#q28)"/>
<use href="#w0" transform="rotate(-144.600)" fill="url(#q29)"/>
<use href="#w0" transform="rotate(-143.400)" fill="url(#q30)"/>
<use href="#w0" transform="rotate(-142.200)" fill="url(#q31)"/>
<use href="#w0" transform="rotate(-141.000)" fill="url(#q32)"/>
<use href="#w0" transform="rotate(-139.800)" fill="url(#q33)"/>
<use href="#w0" transform="rotate(-138.600)" fill="url(#q34)"/>
<use href="#w0" transform="rotate(-137.400)" fill="url(#q35)"/>
<use href="#w0" transform="rotate(-136.200)" fill="url(#q36)"/>
<use href="#w0" transform="rotate(-135.000)" fill="url(#q37)"/>
<use href="#w0" transform="rotate(-133.800)" fill="url(#q38)"/>
<use href="#w0" transform="rotate(-132.600)" fill="url(#q39)"/>
<use href="#w0" transform="rotate(-131.400)" fill="url(#q40)"/>
<use href="#w0" transform="rotate(-130.200)" fill="url(#q41)"/>
<use href="#w0" transform="rotate(-129.000)" fill="url(#q42)"/>
<use href="#w0" transform="rotate(-127.800)" fill="url(#q43)"/>
<use href="#w0" transform="rotate(-126.600)" fill="url(#q44)"/>
<use href="#w0" transform="rotate(-125.400)" fill="url(#q45)"/>
<use href="#w0" transform="rotate(-124.200)" fill="url(#q46)"/>
<use href="#w0" transform="rotate(-123.000)" fill="url(#q47)"/>
<use href="#w0" transform="rotate(-121.800)" fill="url(#q48)"/>
<use href="#w0" transform="rotate(-120.600)" fill="url(#q49)"/>
<use href="#w0" transform="rotate(-119.400)" fill="url(#q50)"/>
<use href="#w0" transform="rotate(-118.200)" fill="url(#q51)"/>
<use href="#w0" transform="rotate(-117.000)" fill="url(#q52)"/>
<use href="#w0" transform="rotate(-115.800)" fill="url(#q53)"/>
<use href="#w0" transform="rotate(-114.600)" fill="url(#q54)"/>
<use href="#w0" transform="rotate(-113.400)" fill="url(#q55)"/>
<use href="#w0" transform="rotate(-112.200)" fill="url(#q56)"/>
<use href="#w0" transform="rotate(-111.000)" fill="url(#q57)"/>
<use href="#w0" transform="rotate(-109.800)" fill="url(#q58)"/>
<use href="#w0" transform="rotate(-108.600)" fill="url(#q59)"/>
<use href="#w0" transform="rotate(-107.400)" fill="url(#q60)"/>
<use href="#w0" transform="rotate(-106.200)" fill="url(#q61)"/>
<use href="#w0" transform="rotate(-105.000)" fill="url(#q62)"/>
<use href="#w0" transform="rotate(-103.800)" fill="url(#q63)"/>
<use href="#w0" transform="rotate(-102.600)" fill="url(#q64)"/>
<use href="#w0" transform="rotate(-101.400)" fill="url(#q65)"/>
<use href="#w0" transform="rotate(-100.200)" fill="url(#q66)"/>
<use href="#w0" transform="rotate(-99.000)" fill="url(#q67)"/>
<use href="#w0" transform="rotate(-97.800)" fill="url(#q68)"/>
<use href="#w0" transform="rotate(-96.600)" fill="url(#q69)"/>
<use href="#w0" transform="rotate(-95.400)" fill="url(#q70)"/>
<use href="#w0" transform="rotate(-94.200)" fill="url(#q71)"/>
<use href="#w0" transform="rotate(-93.000)" fill="url(#q72)"/>
<use href="#w0" transform="rotate(-91.800)" fill="url(#q73)"/>
<use href="#w0" transform="rotate(-90.600)" fill="url(#q74)"/>
<use href="#w0" transform="rotate(-89.400)" fill="url(#q75)"/>
<use href="#w0" transform="rotate(-88.200)" fill="url(#q76)"/>
<use href="#w0" transform="rotate(-87.000)" fill="url(#q77)"/>
<use href="#w0" transform="rotate(-85.800)" fill="url(#q78)"/>
<use href="#w0" transform="rotate(-84.600)" fill="url(#q79)"/>
<use href="#w0" transform="rotate(-83.400)" fill="url(#q80)"/>
<use href="#w0" transform="rotate(-82.200)" fill="url(#q81)"/>
<use href="#w0" transform="rotate(-81.000)" fill="url(#q82)"/>
<use href="#w0" transform="rotate(-79.800)" fill="url(#q83)"/>
<use href="#w0" transform="rotate(-78.600)" fill="url(#q84)"/>
<use href="#w0" transform="rotate(-77.400)" fill="url(#q85)"/>
<use href="#w0" transform="rotate(-76.200)" fill="url(#q86)"/>
<use href="#w0" transform="rotate(-75.000)" fill="url(#q87)"/>
<use href="#w0" transform="rotate(-73.800)" fill="url(#q88)"/>
<use href="#w0" transform="rotate(-72.600)" fill="url(#q89)"/>
<use href="#w0" transform="rotate(-71.400)" fill="url(#q90)"/>
<use href="#w0" transform="rotate(-70.200)" fill="url(#q91)"/>
<use href="#w0" transform="rotate(-69.000)" fill="url(#q92)"/>
<use href="#w0" transform="rotate(-67.800)" fill="url(#q93)"/>
<use href="#w0" transform="rotate(-66.600)" fill="url(#q94)"/>
<use href="#w0" transform="rotate(-65.400)" fill="url(#q95)"/>
<use href="#w0" transform="rotate(-64.200)" fill="url(#q96)"/>
<use href="#w0" transform="rotate(-63.000)" fill="url(#q97)"/>
<use href="#w0" transform="rotate(-61.800)" fill="url(#q98)"/>
<use href="#w0" transform="rotate(-60.600)" fill="url(#q99)"/>
<use href="#w0" transform="rotate(-59.400)" fill="url(#q100)"/>
<use href="#w0" transform="rotate(-58.200)" fill="url(#q101)"/>
<use href="#w0" transform="rotate(-57.000)" fill="url(#q102)"/>
<use href="#w0" transform="rotate(-55.800)" fill="url(#q103)"/>
<use href="#w0" transform="rotate(-54.600)" fill="url(#q104)"/>
<use href="#w0" transform="rotate(-53.400)" fill="url(#q105)"/>
<use href="#w0" transform="rotate(-52.200)" fill="url(#q106)"/>
<use href="#w0" transform="rotate(-51.000)" fill="url(#q107)"/>
<use href="#w0" transform="rotate(-49.800)" fill="url(#q108)"/>
<use href="#w0" transform="rotate(-48.600)" fill="url(#q109)"/>
<use href="#w0" transform="rotate(-47.400)" fill="url(#q110)"/>
<use href="#w0" transform="rotate(-46.200)" fill="url(#q111)"/>
<use href="#w0" transform="rotate(-45.000)" fill="url(#q112)"/>
<use href="#w0" transform="rotate(-43.800)" fill="url(#q113)"/>
<use href="#w0" transform="rotate(-42.600)" fill="url(#q114)"/>
<use href="#w0" transform="rotate(-41.400)" fill="url(#q115)"/>
<use href="#w0" transform="rotate(-40.200)" fill="url(#q116)"/>
<use href="#w0" transform="rotate(-39.000)" fill="url(#q117)"/>
<use href="#w0" transform="rotate(-37.800)" fill="url(#q118)"/>
<use href="#w0" transform="rotate(-36.600)" fill="url(#q119)"/>
<use href="#w0" transform="rotate(-35.400)" fill="url(#q120)"/>
<use href="#w0" transform="rotate(-34.200)" fill="url(#q121)"/>
<use href="#w0" transform="rotate(-33.000)" fill="url(#q122)"/>
<use href="#w0" transform="rotate(-31.800)" fill="url(#q123)"/>
<use href="#w0" transform="rotate(-30.600)" fill="url(#q124)"/>
<use href="#w0" transform="rotate(-29.400)" fill="url(#q125)"/>
<use href="#w0" transform="rotate(-28.200)" fill="url(#q126)"/>
<use href="#w0" transform="rotate(-27.000)" fill="url(#q127)"/>
<use href="#w0" transform="rotate(-25.800)" fill="url(#q128)"/>
<use href="#w0" transform="rotate(-24.600)" fill="url(#q129)"/>
<use href="#w0" transform="rotate(-23.400)" fill="url(#q130)"/>
<use href="#w0" transform="rotate(-22.200)" fill="url(#q131)"/>
<use href="#w0" transform="rotate(-21.000)" fill="url(#q132)"/>
<use href="#w0" transform="rotate(-19.800)" fill="url(#q133)"/>
<use href="#w0" transform="rotate(-18.600)" fill="url(#q134)"/>
<use href="#w0" transform="rotate(-17.400)" fill="url(#q135)"/>
<use href="#w0" transform="rotate(-16.200)" fill="url(#q136)"/>
<use href="#w0" transform="rotate(-15.000)" fill="url(#q137)"/>
<use href="#w0" transform="rotate(-13.800)" fill="url(#q138)"/>
<use href="#w0" transform="rotate(-12.600)" fill="url(#q139)"/>
<use href="#w0" transform="rotate(-11.400)" fill="url(#q140)"/>
<use href="#w0" transform="rotate(-10.200)" fill="url(#q141)"/>
<use href="#w0" transform="rotate(-9.000)" fill="url(#q142)"/>
<use href="#w0" transform="rotate(-7.800)" fill="url(#q143)"/>
<use href="#w0" transform="rotate(-6.600)" fill="url(#q144)"/>
<use href="#w0" transform="rotate(-5.400)" fill="url(#q145)"/>
<use href="#w0" transform="rotate(-4.200)" fill="url(#q146)"/>
<use href="#w0" transform="rotate(-3.000)" fill="url(#q147)"/>
<use href="#w0" transform="rotate(-1.800)" fill="url(#q148)"/>
<use href="#w0" transform="rotate(-0.600)" fill="url(#q149)"/>
<use href="#w0" transform="rotate(0.600)" fill="url(#q150)"/>
<use href="#w0" transform="rotate(1.800)" fill="url(#q151)"/>
<use href="#w0" transform="rotate(3.000)" fill="url(#q152)"/>
<use href="#w0" transform="rotate(4.200)" fill="url(#q153)"/>
<use href="#w0" transform="rotate(5.400)" fill="url(#q154)"/>
<use href="#w0" transform="rotate(6.600)" fill="url(#q155)"/>
<use href="#w0" transform="rotate(7.800)" fill="url(#q156)"/>
<use href="#w0" transform="rotate(9.000)" fill="url(#q157)"/>
<use href="#w0" transform="rotate(10.200)" fill="url(#q158)"/>
<use href="#w0" transform="rotate(11.400)" fill="url(#q159)"/>
<use href="#w0" transform="rotate(12.600)" fill="url(#q160)"/>
<use href="#w0" transform="rotate(13.800)" fill="url(#q161)"/>
<use href="#w0" transform="rotate(15.000)" fill="url(#q162)"/>
<use href="#w0" transform="rotate(16.200)" fill="url(#q163)"/>
<use href="#w0" transform="rotate(17.400)" fill="url(#q164)"/>
<use href="#w0" transform="rotate(18.600)" fill="url(#q165)"/>
<use href="#w0" transform="rotate(19.800)" fill="url(#q166)"/>
<use href="#w0" transform="rotate(21.000)" fill="url(#q167)"/>
<use href="#w0" transform="rotate(22.200)" fill="url(#q168)"/>
<use href="#w0" transform="rotate(23.400)" fill="url(#q169)"/>
<use href="#w0" transform="rotate(24.600)" fill="url(#q170)"/>
<use href="#w0" transform="rotate(25.800)" fill="url(#q171)"/>
<use href="#w0" transform="rotate(27.000)" fill="url(#q172)"/>
<use href="#w0" transform="rotate(28.200)" fill="url(#q173)"/>
<use href="#w0" transform="rotate(29.400)" fill="url(#q174)"/>
<use href="#w0" transform="rotate(30.600)" fill="url(#q175)"/>
<use href="#w0" transform="rotate(31.800)" fill="url(#q176)"/>
<use href="#w0" transform="rotate(33.000)" fill="url(#q177)"/>
<use href="#w0" transform="rotate(34.200)" fill="url(#q178)"/>
<use href="#w0" transform="rotate(35.400)" fill="url(#q179)"/>
<use href="#w0" transform="rotate(36.600)" fill="url(#q180)"/>
<use href="#w0" transform="rotate(37.800)" fill="url(#q181)"/>
<use href="#w0" transform="rotate(39.000)" fill="url(#q182)"/>
<use href="#w0" transform="rotate(40.200)" fill="url(#q183)"/>
<use href="#w0" transform="rotate(41.400)" fill="url(#q184)"/>
<use href="#w0" transform="rotate(42.600)" fill="url(#q185)"/>
<use href="#w0" transform="rotate(43.800)" fill="url(#q186)"/>
<use href="#w0" transform="rotate(45.000)" fill="url(#q187)"/>
<use href="#w0" transform="rotate(46.200)" fill="url(#q188)"/>
<use href="#w0" transform="rotate(47.400)" fill="url(#q189)"/>
<use href="#w0" transform="rotate(48.600)" fill="url(#q190)"/>
<use href="#w0" transform="rotate(49.800)" fill="url(#q191)"/>
<use href="#w0" transform="rotate(51.000)" fill="url(#q192)"/>
<use href="#w0" transform="rotate(52.200)" fill="url(#q193)"/>
<use href="#w0" transform="rotate(53.400)" fill="url(#q194)"/>
<use href="#w0" transform="rotate(54.600)" fill="url(#q195)"/>
<use href="#w0" transform="rotate(55.800)" fill="url(#q196)"/>
<use href="#w0" transform="rotate(57.000)" fill="url(#q197)"/>
<use href="#w0" transform="rotate(58.200)" fill="url(#q198)"/>
<use href="#w0" transform="rotate(59.400)" fill="url(#q199)"/>
<use href="#w0" transform="rotate(60.600)" fill="url(#q200)"/>
<use href="#w0" transform="rotate(61.800)" fill="url(#q201)"/>
<use href="#w0" transform="rotate(63.000)" fill="url(#q202)"/>
<use href="#w0" transform="rotate(64.200)" fill="url(#q203)"/>
<use href="#w0" transform="rotate(65.400)" fill="url(#q204)"/>
<use href="#w0" transform="rotate(66.600)" fill="url(#q205)"/>
<use href="#w0" transform="rotate(67.800)" fill="url(#q206)"/>
<use href="#w0" transform="rotate(69.000)" fill="url(#q207)"/>
<use href="#w0" transform="rotate(70.200)" fill="url(#q208)"/>
<use href="#w0" transform="rotate(71.400)" fill="url(#q209)"/>
<use href="#w0" transform="rotate(72.600)" fill="url(#q210)"/>
<use href="#w0" transform="rotate(73.800)" fill="url(#q211)"/>
<use href="#w0" transform="rotate(75.000)" fill="url(#q212)"/>
<use href="#w0" transform="rotate(76.200)" fill="url(#q213)"/>
<use href="#w0" transform="rotate(77.400)" fill="url(#q214)"/>
<use href="#w0" transform="rotate(78.600)" fill="url(#q215)"/>
<use href="#w0" transform="rotate(79.800)" fill="url(#q216)"/>
<use href="#w0" transform="rotate(81.000)" fill="url(#q217)"/>
<use href="#w0" transform="rotate(82.200)" fill="url(#q218)"/>
<use href="#w0" transform="rotate(83.400)" fill="url(#q219)"/>
<use href="#w0" transform="rotate(84.600)" fill="url(#q220)"/>
<use href="#w0" transform="rotate(85.800)" fill="url(#q221)"/>
<use href="#w0" transform="rotate(87.000)" fill="url(#q222)"/>
<use href="#w0" transform="rotate(88.200)" fill="url(#q223)"/>
<use href="#w0" transform="rotate(89.400)" fill="url(#q224)"/>
<use href="#w0" transform="rotate(90.600)" fill="url(#q225)"/>
<use href="#w0" transform="rotate(91.800)" fill="url(#q226)"/>
<use href="#w0" transform="rotate(93.000)" fill="url(#q227)"/>
<use href="#w0" transform="rotate(94.200)" fill="url(#q228)"/>
<use href="#w0" transform="rotate(95.400)" fill="url(#q229)"/>
<use href="#w0" transform="rotate(96.600)" fill="url(#q230)"/>
<use href="#w0" transform="rotate(97.800)" fill="url(#q231)"/>
<use href="#w0" transform="rotate(99.000)" fill="url(#q232)"/>
<use href="#w0" transform="rotate(100.200)" fill="url(#q233)"/>
<use href="#w0" transform="rotate(101.400)" fill="url(#q234)"/>
<use href="#w0" transform="rotate(102.600)" fill="url(#q235)"/>
<use href="#w0" transform="rotate(103.800)" fill="url(#q236)"/>
<use href="#w0" transform="rotate(105.000)" fill="url(#q237)"/>
<use href="#w0" transform="rotate(106.200)" fill="url(#q238)"/>
<use href="#w0" transform="rotate(107.400)" fill="url(#q239)"/>
<use href="#w0" transform="rotate(108.600)" fill="url(#q240)"/>
<use href="#w0" transform="rotate(109.800)" fill="url(#q241)"/>
<use href="#w0" transform="rotate(111.000)" fill="url(#q242)"/>
<use href="#w0" transform="rotate(112.200)" fill="url(#q243)"/>
<use href="#w0" transform="rotate(113.400)" fill="url(#q244)"/>
<use href="#w0" transform="rotate(114.600)" fill="url(#q245)"/>
<use href="#w0" transform="rotate(115.800)" fill="url(#q246)"/>
<use href="#w0" transform="rotate(117.000)" fill="url(#q247)"/>
<use href="#w0" transform="rotate(118.200)" fill="url(#q248)"/>
<use href="#w0" transform="rotate(119.400)" fill="url(#q249)"/>
<use href="#w0" transform="rotate(120.600)" fill="url(#q250)"/>
<use href="#w0" transform="rotate(121.800)" fill="url(#q251)"/>
<use href="#w0" transform="rotate(123.000)" fill="url(#q252)"/>
<use href="#w0" transform="rotate(124.200)" fill="url(#q253)"/>
<use href="#w0" transform="rotate(125.400)" fill="url(#q254)"/>
<use href="#w0" transform="rotate(126.600)" fill="url(#q255)"/>
<use href="#w0" transform="rotate(127.800)" fill="url(#q256)"/>
<use href="#w0" transform="rotate(129.000)" fill="url(#q257)"/>
<use href="#w0" transform="rotate(130.200)" fill="url(#q258)"/>
<use href="#w0" transform="rotate(131.400)" fill="url(#q259)"/>
<use href="#w0" transform="rotate(132.600)" fill="url(#q260)"/>
<use href="#w0" transform="rotate(133.800)" fill="url(#q261)"/>
<use href="#w0" transform="rotate(135.000)" fill="url(#q262)"/>
<use href="#w0" transform="rotate(136.200)" fill="url(#q263)"/>
<use href="#w0" transform="rotate(137.400)" fill="url(#q264)"/>
<use href="#w0" transform="rotate(138.600)" fill="url(#q265)"/>
<use href="#w0" transform="rotate(139.800)" fill="url(#q266)"/>
<use href="#w0" transform="rotate(141.000)" fill="url(#q267)"/>
<use href="#w0" transform="rotate(142.200)" fill="url(#q268)"/>
<use href="#w0" transform="rotate(143.400)" fill="url(#q269)"/>
<use href="#w0" transform="rotate(144.600)" fill="url(#q270)"/>
<use href="#w0" transform="rotate(145.800)" fill="url(#q271)"/>
<use href="#w0" transform="rotate(147.000)" fill="url(#q272)"/>
<use href="#w0" transform="rotate(148.200)" fill="url(#q273)"/>
<use href="#w0" transform="rotate(149.400)" fill="url(#q274)"/>
<use href="#w0" transform="rotate(150.600)" fill="url(#q275)"/>
<use href="#w0" transform="rotate(151.800)" fill="url(#q276)"/>
<use href="#w0" transform="rotate(153.000)" fill="url(#q277)"/>
<use href="#w0" transform="rotate(154.200)" fill="url(#q278)"/>
<use href="#w0" transform="rotate(155.400)" fill="url(#q279)"/>
<use href="#w0" transform="rotate(156.600)" fill="url(#q280)"/>
<use href="#w0" transform="rotate(157.800)" fill="url(#q281)"/>
<use href="#w0" transform="rotate(159.000)" fill="url(#q282)"/>
<use href="#w0" transform="rotate(160.200)" fill="url(#q283)"/>
<use href="#w0" transform="rotate(161.400)" fill="url(#q284)"/>
<use href="#w0" transform="rotate(162.600)" fill="url(#q285)"/>
<use href="#w0" transform="rotate(163.800)" fill="url(#q286)"/>
<use href="#w0" transform="rotate(165.000)" fill="url(#q287)"/>
<use href="#w0" transform="rotate(166.200)" fill="url(#q288)"/>
<use href="#w0" transform="rotate(167.400)" fill="url(#q289)"/>
<use href="#w0" transform="rotate(168.600)" fill="url(#q290)"/>
<use href="#w0" transform="rotate(169.800)" fill="url(#q291)"/>
<use href="#w0" transform="rotate(171.000)" fill="url(#q292)"/>
<use href="#w0" transform="rotate(172.200)" fill="url(#q293)"/>
<use href="#w0" transform="rotate(173.400)" fill="url(#q294)"/>
<use href="#w0" transform="rotate(174.600)" fill="url(#q295)"/>
<use href="#w0" transform="rotate(175.800)" fill="url(#q296)"/>
<use href="#w0" transform="rotate(177.000)" fill="url(#q297)"/>
<use href="#w0" transform="rotate(178.200)" fill="url(#q298)"/>
<use href="#w0" transform="rotate(179.400)" fill="url(#q299)"/>
</g></g>
</g>
<g clip-path="url(#tri)"><g transform="translate(1291.66 382.08)" shape-rendering="crispEdges">
<use href="#w1" transform="rotate(-179.400)" fill="url(#q300)"/>
<use href="#w1" transform="rotate(-178.200)" fill="url(#q301)"/>
<use href="#w1" transform="rotate(-177.000)" fill="url(#q302)"/>
<use href="#w1" transform="rotate(-175.800)" fill="url(#q303)"/>
<use href="#w1" transform="rotate(-174.600)" fill="url(#q304)"/>
<use href="#w1" transform="rotate(-173.400)" fill="url(#q305)"/>
<use href="#w1" transform="rotate(-172.200)" fill="url(#q306)"/>
<use href="#w1" transform="rotate(-171.000)" fill="url(#q307)"/>
<use href="#w1" transform="rotate(-169.800)" fill="url(#q308)"/>
<use href="#w1" transform="rotate(-168.600)" fill="url(#q309)"/>
<use href="#w1" transform="rotate(-167.400)" fill="url(#q310)"/>
<use href="#w1" transform="rotate(-166.200)" fill="url(#q311)"/>
<use href="#w1" transform="rotate(-165.000)" fill="url(#q312)"/>
<use href="#w1" transform="rotate(-163.800)" fill="url(#q313)"/>
<use href="#w1" transform="rotate(-162.600)" fill="url(#q314)"/>
<use href="#w1" transform="rotate(-161.400)" fill="url(#q315)"/>
<use href="#w1" transform="rotate(-160.200)" fill="url(#q316)"/>
<use href="#w1" transform="rotate(-159.000)" fill="url(#q317)"/>
<use href="#w1" transform="rotate(-157.800)" fill="url(#q318)"/>
<use href="#w1" transform="rotate(-156.600)" fill="url(#q319)"/>
<use href="#w1" transform="rotate(-155.400)" fill="url(#q320)"/>
<use href="#w1" transform="rotate(-154.200)" fill="url(#q321)"/>
<use href="#w1" transform="rotate(-153.000)" fill="url(#q322)"/>
<use href="#w1" transform="rotate(-151.800)" fill="url(#q323)"/>
<use href="#w1" transform="rotate(-150.600)" fill="url(#q324)"/>
<use href="#w1" transform="rotate(-149.400)" fill="url(#q325)"/>
<use href="#w1" transform="rotate(-148.200)" fill="url(#q326)"/>
<use href="#w1" transform="rotate(-147.000)" fill="url(#q327)"/>
<use href="#w1" transform="rotate(-145.800)" fill="url(#q328)"/>
<use href="#w1" transform="rotate(-144.600)" fill="url(#q329)"/>
<use href="#w1" transform="rotate(-143.400)" fill="url(#q330)"/>
<use href="#w1" transform="rotate(-142.200)" fill="url(#q331)"/>
<use href="#w1" transform="rotate(-141.000)" fill="url(#q332)"/>
<use href="#w1" transform="rotate(-139.800)" fill="url(#q333)"/>
<use href="#w1" transform="rotate(-138.600)" fill="url(#q334)"/>
<use href="#w1" transform="rotate(-137.400)" fill="url(#q335)"/>
<use href="#w1" transform="rotate(-136.200)" fill="url(#q336)"/>
<use href="#w1" transform="rotate(-135.000)" fill="url(#q337)"/>
<use href="#w1" transform="rotate(-133.800)" fill="url(#q338)"/>
<use href="#w1" transform="rotate(-132.600)" fill="url(#q339)"/>
<use href="#w1" transform="rotate(-131.400)" fill="url(#q340)"/>
<use href="#w1" transform="rotate(-130.200)" fill="url(#q341)"/>
<use href="#w1" transform="rotate(-129.000)" fill="url(#q342)"/>
<use href="#w1" transform="rotate(-127.800)" fill="url(#q343)"/>
<use href="#w1" transform="rotate(-126.600)" fill="url(#q344)"/>
<use href="#w1" transform="rotate(-125.400)" fill="url(#q345)"/>
<use href="#w1" transform="rotate(-124.200)" fill="url(#q346)"/>
<use href="#w1" transform="rotate(-123.000)" fill="url(#q347)"/>
<use href="#w1" transform="rotate(-121.800)" fill="url(#q348)"/>
<use href="#w1" transform="rotate(-120.600)" fill="url(#q349)"/>
<use href="#w1" transform="rotate(-119.400)" fill="url(#q350)"/>
<use href="#w1" transform="rotate(-118.200)" fill="url(#q351)"/>
<use href="#w1" transform="rotate(-117.000)" fill="url(#q352)"/>
<use href="#w1" transform="rotate(-115.800)" fill="url(#q353)"/>
<use href="#w1" transform="rotate(-114.600)" fill="url(#q354)"/>
<use href="#w1" transform="rotate(-113.400)" fill="url(#q355)"/>
<use href="#w1" transform="rotate(-112.200)" fill="url(#q356)"/>
<use href="#w1" transform="rotate(-111.000)" fill="url(#q357)"/>
<use href="#w1" transform="rotate(-109.800)" fill="url(#q358)"/>
<use href="#w1" transform="rotate(-108.600)" fill="url(#q359)"/>
<use href="#w1" transform="rotate(-107.400)" fill="url(#q360)"/>
<use href="#w1" transform="rotate(-106.200)" fill="url(#q361)"/>
<use href="#w1" transform="rotate(-105.000)" fill="url(#q362)"/>
<use href="#w1" transform="rotate(-103.800)" fill="url(#q363)"/>
<use href="#w1" transform="rotate(-102.600)" fill="url(#q364)"/>
<use href="#w1" transform="rotate(-101.400)" fill="url(#q365)"/>
<use href="#w1" transform="rotate(-100.200)" fill="url(#q366)"/>
<use href="#w1" transform="rotate(-99.000)" fill="url(#q367)"/>
<use href="#w1" transform="rotate(-97.800)" fill="url(#q368)"/>
<use href="#w1" transform="rotate(-96.600)" fill="url(#q369)"/>
<use href="#w1" transform="rotate(-95.400)" fill="url(#q370)"/>
<use href="#w1" transform="rotate(-94.200)" fill="url(#q371)"/>
<use href="#w1" transform="rotate(-93.000)" fill="url(#q372)"/>
<use href="#w1" transform="rotate(-91.800)" fill="url(#q373)"/>
<use href="#w1" transform="rotate(-90.600)" fill="url(#q374)"/>
<use href="#w1" transform="rotate(-89.400)" fill="url(#q375)"/>
<use href="#w1" transform="rotate(-88.200)" fill="url(#q376)"/>
<use href="#w1" transform="rotate(-87.000)" fill="url(#q377)"/>
<use href="#w1" transform="rotate(-85.800)" fill="url(#q378)"/>
<use href="#w1" transform="rotate(-84.600)" fill="url(#q379)"/>
<use href="#w1" transform="rotate(-83.400)" fill="url(#q380)"/>
<use href="#w1" transform="rotate(-82.200)" fill="url(#q381)"/>
<use href="#w1" transform="rotate(-81.000)" fill="url(#q382)"/>
<use href="#w1" transform="rotate(-79.800)" fill="url(#q383)"/>
<use href="#w1" transform="rotate(-78.600)" fill="url(#q384)"/>
<use href="#w1" transform="rotate(-77.400)" fill="url(#q385)"/>
<use href="#w1" transform="rotate(-76.200)" fill="url(#q386)"/>
<use href="#w1" transform="rotate(-75.000)" fill="url(#q387)"/>
<use href="#w1" transform="rotate(-73.800)" fill="url(#q388)"/>
<use href="#w1" transform="rotate(-72.600)" fill="url(#q389)"/>
<use href="#w1" transform="rotate(-71.400)" fill="url(#q390)"/>
<use href="#w1" transform="rotate(-70.200)" fill="url(#q391)"/>
<use href="#w1" transform="rotate(-69.000)" fill="url(#q392)"/>
<use href="#w1" transform="rotate(-67.800)" fill="url(#q393)"/>
<use href="#w1" transform="rotate(-66.600)" fill="url(#q394)"/>
<use href="#w1" transform="rotate(-65.400)" fill="url(#q395)"/>
<use href="#w1" transform="rotate(-64.200)" fill="url(#q396)"/>
<use href="#w1" transform="rotate(-63.000)" fill="url(#q397)"/>
<use href="#w1" transform="rotate(-61.800)" fill="url(#q398)"/>
<use href="#w1" transform="rotate(-60.600)" fill="url(#q399)"/>
<use href="#w1" transform="rotate(-59.400)" fill="url(#q400)"/>
<use href="#w1" transform="rotate(-58.200)" fill="url(#q401)"/>
<use href="#w1" transform="rotate(-57.000)" fill="url(#q402)"/>
<use href="#w1" transform="rotate(-55.800)" fill="url(#q403)"/>
<use href="#w1" transform="rotate(-54.600)" fill="url(#q404)"/>
<use href="#w1" transform="rotate(-53.400)" fill="url(#q405)"/>
<use href="#w1" transform="rotate(-52.200)" fill="url(#q406)"/>
<use href="#w1" transform="rotate(-51.000)" fill="url(#q407)"/>
<use href="#w1" transform="rotate(-49.800)" fill="url(#q408)"/>
<use href="#w1" transform="rotate(-48.600)" fill="url(#q409)"/>
<use href="#w1" transform="rotate(-47.400)" fill="url(#q410)"/>
<use href="#w1" transform="rotate(-46.200)" fill="url(#q411)"/>
<use href="#w1" transform="rotate(-45.000)" fill="url(#q412)"/>
<use href="#w1" transform="rotate(-43.800)" fill="url(#q413)"/>
<use href="#w1" transform="rotate(-42.600)" fill="url(#q414)"/>
<use href="#w1" transform="rotate(-41.400)" fill="url(#q415)"/>
<use href="#w1" transform="rotate(-40.200)" fill="url(#q416)"/>
<use href="#w1" transform="rotate(-39.000)" fill="url(#q417)"/>
<use href="#w1" transform="rotate(-37.800)" fill="url(#q418)"/>
<use href="#w1" transform="rotate(-36.600)" fill="url(#q419)"/>
<use href="#w1" transform="rotate(-35.400)" fill="url(#q420)"/>
<use href="#w1" transform="rotate(-34.200)" fill="url(#q421)"/>
<use href="#w1" transform="rotate(-33.000)" fill="url(#q422)"/>
<use href="#w1" transform="rotate(-31.800)" fill="url(#q423)"/>
<use href="#w1" transform="rotate(-30.600)" fill="url(#q424)"/>
<use href="#w1" transform="rotate(-29.400)" fill="url(#q425)"/>
<use href="#w1" transform="rotate(-28.200)" fill="url(#q426)"/>
<use href="#w1" transform="rotate(-27.000)" fill="url(#q427)"/>
<use href="#w1" transform="rotate(-25.800)" fill="url(#q428)"/>
<use href="#w1" transform="rotate(-24.600)" fill="url(#q429)"/>
<use href="#w1" transform="rotate(-23.400)" fill="url(#q430)"/>
<use href="#w1" transform="rotate(-22.200)" fill="url(#q431)"/>
<use href="#w1" transform="rotate(-21.000)" fill="url(#q432)"/>
<use href="#w1" transform="rotate(-19.800)" fill="url(#q433)"/>
<use href="#w1" transform="rotate(-18.600)" fill="url(#q434)"/>
<use href="#w1" transform="rotate(-17.400)" fill="url(#q435)"/>
<use href="#w1" transform="rotate(-16.200)" fill="url(#q436)"/>
<use href="#w1" transform="rotate(-15.000)" fill="url(#q437)"/>
<use href="#w1" transform="rotate(-13.800)" fill="url(#q438)"/>
<use href="#w1" transform="rotate(-12.600)" fill="url(#q439)"/>
<use href="#w1" transform="rotate(-11.400)" fill="url(#q440)"/>
<use href="#w1" transform="rotate(-10.200)" fill="url(#q441)"/>
<use href="#w1" transform="rotate(-9.000)" fill="url(#q442)"/>
<use href="#w1" transform="rotate(-7.800)" fill="url(#q443)"/>
<use href="#w1" transform="rotate(-6.600)" fill="url(#q444)"/>
<use href="#w1" transform="rotate(-5.400)" fill="url(#q445)"/>
<use href="#w1" transform="rotate(-4.200)" fill="url(#q446)"/>
<use href="#w1" transform="rotate(-3.000)" fill="url(#q447)"/>
<use href="#w1" transform="rotate(-1.800)" fill="url(#q448)"/>
<use href="#w1" transform="rotate(-0.600)" fill="url(#q449)"/>
<use href="#w1" transform="rotate(0.600)" fill="url(#q450)"/>
<use href="#w1" transform="rotate(1.800)" fill="url(#q451)"/>
<use href="#w1" transform="rotate(3.000)" fill="url(#q452)"/>
<use href="#w1" transform="rotate(4.200)" fill="url(#q453)"/>
<use href="#w1" transform="rotate(5.400)" fill="url(#q454)"/>
<use href="#w1" transform="rotate(6.600)" fill="url(#q455)"/>
<use href="#w1" transform="rotate(7.800)" fill="url(#q456)"/>
<use href="#w1" transform="rotate(9.000)" fill="url(#q457)"/>
<use href="#w1" transform="rotate(10.200)" fill="url(#q458)"/>
<use href="#w1" transform="rotate(11.400)" fill="url(#q459)"/>
<use href="#w1" transform="rotate(12.600)" fill="url(#q460)"/>
<use href="#w1" transform="rotate(13.800)" fill="url(#q461)"/>
<use href="#w1" transform="rotate(15.000)" fill="url(#q462)"/>
<use href="#w1" transform="rotate(16.200)" fill="url(#q463)"/>
<use href="#w1" transform="rotate(17.400)" fill="url(#q464)"/>
<use href="#w1" transform="rotate(18.600)" fill="url(#q465)"/>
<use href="#w1" transform="rotate(19.800)" fill="url(#q466)"/>
<use href="#w1" transform="rotate(21.000)" fill="url(#q467)"/>
<use href="#w1" transform="rotate(22.200)" fill="url(#q468)"/>
<use href="#w1" transform="rotate(23.400)" fill="url(#q469)"/>
<use href="#w1" transform="rotate(24.600)" fill="url(#q470)"/>
<use href="#w1" transform="rotate(25.800)" fill="url(#q471)"/>
<use href="#w1" transform="rotate(27.000)" fill="url(#q472)"/>
<use href="#w1" transform="rotate(28.200)" fill="url(#q473)"/>
<use href="#w1" transform="rotate(29.400)" fill="url(#q474)"/>
<use href="#w1" transform="rotate(30.600)" fill="url(#q475)"/>
<use href="#w1" transform="rotate(31.800)" fill="url(#q476)"/>
<use href="#w1" transform="rotate(33.000)" fill="url(#q477)"/>
<use href="#w1" transform="rotate(34.200)" fill="url(#q478)"/>
<use href="#w1" transform="rotate(35.400)" fill="url(#q479)"/>
<use href="#w1" transform="rotate(36.600)" fill="url(#q480)"/>
<use href="#w1" transform="rotate(37.800)" fill="url(#q481)"/>
<use href="#w1" transform="rotate(39.000)" fill="url(#q482)"/>
<use href="#w1" transform="rotate(40.200)" fill="url(#q483)"/>
<use href="#w1" transform="rotate(41.400)" fill="url(#q484)"/>
<use href="#w1" transform="rotate(42.600)" fill="url(#q485)"/>
<use href="#w1" transform="rotate(43.800)" fill="url(#q486)"/>
<use href="#w1" transform="rotate(45.000)" fill="url(#q487)"/>
<use href="#w1" transform="rotate(46.200)" fill="url(#q488)"/>
<use href="#w1" transform="rotate(47.400)" fill="url(#q489)"/>
<use href="#w1" transform="rotate(48.600)" fill="url(#q490)"/>
<use href="#w1" transform="rotate(49.800)" fill="url(#q491)"/>
<use href="#w1" transform="rotate(51.000)" fill="url(#q492)"/>
<use href="#w1" transform="rotate(52.200)" fill="url(#q493)"/>
<use href="#w1" transform="rotate(53.400)" fill="url(#q494)"/>
<use href="#w1" transform="rotate(54.600)" fill="url(#q495)"/>
<use href="#w1" transform="rotate(55.800)" fill="url(#q496)"/>
<use href="#w1" transform="rotate(57.000)" fill="url(#q497)"/>
<use href="#w1" transform="rotate(58.200)" fill="url(#q498)"/>
<use href="#w1" transform="rotate(59.400)" fill="url(#q499)"/>
<use href="#w1" transform="rotate(60.600)" fill="url(#q500)"/>
<use href="#w1" transform="rotate(61.800)" fill="url(#q501)"/>
<use href="#w1" transform="rotate(63.000)" fill="url(#q502)"/>
<use href="#w1" transform="rotate(64.200)" fill="url(#q503)"/>
<use href="#w1" transform="rotate(65.400)" fill="url(#q504)"/>
<use href="#w1" transform="rotate(66.600)" fill="url(#q505)"/>
<use href="#w1" transform="rotate(67.800)" fill="url(#q506)"/>
<use href="#w1" transform="rotate(69.000)" fill="url(#q507)"/>
<use href="#w1" transform="rotate(70.200)" fill="url(#q508)"/>
<use href="#w1" transform="rotate(71.400)" fill="url(#q509)"/>
<use href="#w1" transform="rotate(72.600)" fill="url(#q510)"/>
<use href="#w1" transform="rotate(73.800)" fill="url(#q511)"/>
<use href="#w1" transform="rotate(75.000)" fill="url(#q512)"/>
<use href="#w1" transform="rotate(76.200)" fill="url(#q513)"/>
<use href="#w1" transform="rotate(77.400)" fill="url(#q514)"/>
<use href="#w1" transform="rotate(78.600)" fill="url(#q515)"/>
<use href="#w1" transform="rotate(79.800)" fill="url(#q516)"/>
<use href="#w1" transform="rotate(81.000)" fill="url(#q517)"/>
<use href="#w1" transform="rotate(82.200)" fill="url(#q518)"/>
<use href="#w1" transform="rotate(83.400)" fill="url(#q519)"/>
<use href="#w1" transform="rotate(84.600)" fill="url(#q520)"/>
<use href="#w1" transform="rotate(85.800)" fill="url(#q521)"/>
<use href="#w1" transform="rotate(87.000)" fill="url(#q522)"/>
<use href="#w1" transform="rotate(88.200)" fill="url(#q523)"/>
<use href="#w1" transform="rotate(89.400)" fill="url(#q524)"/>
<use href="#w1" transform="rotate(90.600)" fill="url(#q525)"/>
<use href="#w1" transform="rotate(91.800)" fill="url(#q526)"/>
<use href="#w1" transform="rotate(93.000)" fill="url(#q527)"/>
<use href="#w1" transform="rotate(94.200)" fill="url(#q528)"/>
<use href="#w1" transform="rotate(95.400)" fill="url(#q529)"/>
<use href="#w1" transform="rotate(96.600)" fill="url(#q530)"/>
<use href="#w1" transform="rotate(97.800)" fill="url(#q531)"/>
<use href="#w1" transform="rotate(99.000)" fill="url(#q532)"/>
<use href="#w1" transform="rotate(100.200)" fill="url(#q533)"/>
<use href="#w1" transform="rotate(101.400)" fill="url(#q534)"/>
<use href="#w1" transform="rotate(102.600)" fill="url(#q535)"/>
<use href="#w1" transform="rotate(103.800)" fill="url(#q536)"/>
<use href="#w1" transform="rotate(105.000)" fill="url(#q537)"/>
<use href="#w1" transform="rotate(106.200)" fill="url(#q538)"/>
<use href="#w1" transform="rotate(107.400)" fill="url(#q539)"/>
<use href="#w1" transform="rotate(108.600)" fill="url(#q540)"/>
<use href="#w1" transform="rotate(109.800)" fill="url(#q541)"/>
<use href="#w1" transform="rotate(111.000)" fill="url(#q542)"/>
<use href="#w1" transform="rotate(112.200)" fill="url(#q543)"/>
<use href="#w1" transform="rotate(113.400)" fill="url(#q544)"/>
<use href="#w1" transform="rotate(114.600)" fill="url(#q545)"/>
<use href="#w1" transform="rotate(115.800)" fill="url(#q546)"/>
<use href="#w1" transform="rotate(117.000)" fill="url(#q547)"/>
<use href="#w1" transform="rotate(118.200)" fill="url(#q548)"/>
<use href="#w1" transform="rotate(119.400)" fill="url(#q549)"/>
<use href="#w1" transform="rotate(120.600)" fill="url(#q550)"/>
<use href="#w1" transform="rotate(121.800)" fill="url(#q551)"/>
<use href="#w1" transform="rotate(123.000)" fill="url(#q552)"/>
<use href="#w1" transform="rotate(124.200)" fill="url(#q553)"/>
<use href="#w1" transform="rotate(125.400)" fill="url(#q554)"/>
<use href="#w1" transform="rotate(126.600)" fill="url(#q555)"/>
<use href="#w1" transform="rotate(127.800)" fill="url(#q556)"/>
<use href="#w1" transform="rotate(129.000)" fill="url(#q557)"/>
<use href="#w1" transform="rotate(130.200)" fill="url(#q558)"/>
<use href="#w1" transform="rotate(131.400)" fill="url(#q559)"/>
<use href="#w1" transform="rotate(132.600)" fill="url(#q560)"/>
<use href="#w1" transform="rotate(133.800)" fill="url(#q561)"/>
<use href="#w1" transform="rotate(135.000)" fill="url(#q562)"/>
<use href="#w1" transform="rotate(136.200)" fill="url(#q563)"/>
<use href="#w1" transform="rotate(137.400)" fill="url(#q564)"/>
<use href="#w1" transform="rotate(138.600)" fill="url(#q565)"/>
<use href="#w1" transform="rotate(139.800)" fill="url(#q566)"/>
<use href="#w1" transform="rotate(141.000)" fill="url(#q567)"/>
<use href="#w1" transform="rotate(142.200)" fill="url(#q568)"/>
<use href="#w1" transform="rotate(143.400)" fill="url(#q569)"/>
<use href="#w1" transform="rotate(144.600)" fill="url(#q570)"/>
<use href="#w1" transform="rotate(145.800)" fill="url(#q571)"/>
<use href="#w1" transform="rotate(147.000)" fill="url(#q572)"/>
<use href="#w1" transform="rotate(148.200)" fill="url(#q573)"/>
<use href="#w1" transform="rotate(149.400)" fill="url(#q574)"/>
<use href="#w1" transform="rotate(150.600)" fill="url(#q575)"/>
<use href="#w1" transform="rotate(151.800)" fill="url(#q576)"/>
<use href="#w1" transform="rotate(153.000)" fill="url(#q577)"/>
<use href="#w1" transform="rotate(154.200)" fill="url(#q578)"/>
<use href="#w1" transform="rotate(155.400)" fill="url(#q579)"/>
<use href="#w1" transform="rotate(156.600)" fill="url(#q580)"/>
<use href="#w1" transform="rotate(157.800)" fill="url(#q581)"/>
<use href="#w1" transform="rotate(159.000)" fill="url(#q582)"/>
<use href="#w1" transform="rotate(160.200)" fill="url(#q583)"/>
<use href="#w1" transform="rotate(161.400)" fill="url(#q584)"/>
<use href="#w1" transform="rotate(162.600)" fill="url(#q585)"/>
<use href="#w1" transform="rotate(163.800)" fill="url(#q586)"/>
<use href="#w1" transform="rotate(165.000)" fill="url(#q587)"/>
<use href="#w1" transform="rotate(166.200)" fill="url(#q588)"/>
<use href="#w1" transform="rotate(167.400)" fill="url(#q589)"/>
<use href="#w1" transform="rotate(168.600)" fill="url(#q590)"/>
<use href="#w1" transform="rotate(169.800)" fill="url(#q591)"/>
<use href="#w1" transform="rotate(171.000)" fill="url(#q592)"/>
<use href="#w1" transform="rotate(172.200)" fill="url(#q593)"/>
<use href="#w1" transform="rotate(173.400)" fill="url(#q594)"/>
<use href="#w1" transform="rotate(174.600)" fill="url(#q595)"/>
<use href="#w1" transform="rotate(175.800)" fill="url(#q596)"/>
<use href="#w1" transform="rotate(177.000)" fill="url(#q597)"/>
<use href="#w1" transform="rotate(178.200)" fill="url(#q598)"/>
<use href="#w1" transform="rotate(179.400)" fill="url(#q599)"/>
</g></g>
<rect x="1048.6" y="76.6" width="653.9" height="500.9" fill="none" stroke="#8c8c8c" stroke-width="1.2"/>
<rect x="1047.90" y="577.5" width="1.4" height="5" fill="#dcdcdc"/>
<text x="1044.63" y="598.30" font-size="14.24" textLength="7.92" lengthAdjust="spacingAndGlyphs" fill="#dcdcdc">0</text>
<rect x="1043.10" y="577.30" width="5.5" height="1.4" fill="#dcdcdc"/>
<text x="1034.93" y="582.90" font-size="14.24" textLength="7.92" lengthAdjust="spacingAndGlyphs" fill="#dcdcdc">0</text>
<rect x="1125.63" y="577.5" width="1.4" height="5" fill="#dcdcdc"/>
<text x="1116.48" y="598.30" font-size="14.24" textLength="19.80" lengthAdjust="spacingAndGlyphs" fill="#dcdcdc">0,1</text>
<rect x="1043.10" y="517.75" width="5.5" height="1.4" fill="#dcdcdc"/>
<text x="1023.18" y="523.35" font-size="14.24" textLength="19.80" lengthAdjust="spacingAndGlyphs" fill="#dcdcdc">0,1</text>
<rect x="1203.36" y="577.5" width="1.4" height="5" fill="#dcdcdc"/>
<text x="1194.23" y="598.30" font-size="14.24" textLength="19.80" lengthAdjust="spacingAndGlyphs" fill="#dcdcdc">0,2</text>
<rect x="1043.10" y="458.20" width="5.5" height="1.4" fill="#dcdcdc"/>
<text x="1023.21" y="463.80" font-size="14.24" textLength="19.80" lengthAdjust="spacingAndGlyphs" fill="#dcdcdc">0,2</text>
<rect x="1281.09" y="577.5" width="1.4" height="5" fill="#dcdcdc"/>
<text x="1271.91" y="598.30" font-size="14.24" textLength="19.80" lengthAdjust="spacingAndGlyphs" fill="#dcdcdc">0,3</text>
<rect x="1043.10" y="398.65" width="5.5" height="1.4" fill="#dcdcdc"/>
<text x="1023.11" y="404.25" font-size="14.24" textLength="19.80" lengthAdjust="spacingAndGlyphs" fill="#dcdcdc">0,3</text>
<rect x="1358.82" y="577.5" width="1.4" height="5" fill="#dcdcdc"/>
<text x="1349.53" y="598.30" font-size="14.24" textLength="19.80" lengthAdjust="spacingAndGlyphs" fill="#dcdcdc">0,4</text>
<rect x="1043.10" y="339.10" width="5.5" height="1.4" fill="#dcdcdc"/>
<text x="1022.89" y="344.70" font-size="14.24" textLength="19.80" lengthAdjust="spacingAndGlyphs" fill="#dcdcdc">0,4</text>
<rect x="1436.55" y="577.5" width="1.4" height="5" fill="#dcdcdc"/>
<text x="1427.35" y="598.30" font-size="14.24" textLength="19.80" lengthAdjust="spacingAndGlyphs" fill="#dcdcdc">0,5</text>
<rect x="1043.10" y="279.55" width="5.5" height="1.4" fill="#dcdcdc"/>
<text x="1023.07" y="285.15" font-size="14.24" textLength="19.80" lengthAdjust="spacingAndGlyphs" fill="#dcdcdc">0,5</text>
<rect x="1514.28" y="577.5" width="1.4" height="5" fill="#dcdcdc"/>
<text x="1505.10" y="598.30" font-size="14.24" textLength="19.80" lengthAdjust="spacingAndGlyphs" fill="#dcdcdc">0,6</text>
<rect x="1043.10" y="220.00" width="5.5" height="1.4" fill="#dcdcdc"/>
<text x="1023.11" y="225.60" font-size="14.24" textLength="19.80" lengthAdjust="spacingAndGlyphs" fill="#dcdcdc">0,6</text>
<rect x="1592.01" y="577.5" width="1.4" height="5" fill="#dcdcdc"/>
<text x="1582.88" y="598.30" font-size="14.24" textLength="19.80" lengthAdjust="spacingAndGlyphs" fill="#dcdcdc">0,7</text>
<rect x="1043.10" y="160.45" width="5.5" height="1.4" fill="#dcdcdc"/>
<text x="1023.21" y="166.05" font-size="14.24" textLength="19.80" lengthAdjust="spacingAndGlyphs" fill="#dcdcdc">0,7</text>
<rect x="1669.74" y="577.5" width="1.4" height="5" fill="#dcdcdc"/>
<text x="1660.56" y="598.30" font-size="14.24" textLength="19.80" lengthAdjust="spacingAndGlyphs" fill="#dcdcdc">0,8</text>
<rect x="1043.10" y="100.90" width="5.5" height="1.4" fill="#dcdcdc"/>
<text x="1023.11" y="106.50" font-size="14.24" textLength="19.80" lengthAdjust="spacingAndGlyphs" fill="#dcdcdc">0,8</text>
<rect x="1275.60" y="211.80" width="12.8" height="12.8" fill="none" stroke="#fff" stroke-width="1.9"/>
<rect x="1279.40" y="278.10" width="12.8" height="12.8" fill="none" stroke="#fff" stroke-width="1.9"/>
<rect x="1334.70" y="276.40" width="12.8" height="12.8" fill="none" stroke="#fff" stroke-width="1.9"/>
<rect x="1368.00" y="269.60" width="12.8" height="12.8" fill="none" stroke="#fff" stroke-width="1.9"/>
<rect x="1389.10" y="288.20" width="12.8" height="12.8" fill="none" stroke="#fff" stroke-width="1.9"/>
<rect x="1410.00" y="309.00" width="12.8" height="12.8" fill="none" stroke="#fff" stroke-width="1.9"/>
<rect x="1441.10" y="328.40" width="12.8" height="12.8" fill="none" stroke="#fff" stroke-width="1.9"/>
<rect x="1306.50" y="316.10" width="12.8" height="12.8" fill="none" stroke="#fff" stroke-width="1.9"/>
<rect x="1246.00" y="355.00" width="12.8" height="12.8" fill="none" stroke="#fff" stroke-width="1.9"/>
<rect x="1216.40" y="374.40" width="12.8" height="12.8" fill="none" stroke="#fff" stroke-width="1.9"/>
<rect x="1203.90" y="410.00" width="12.8" height="12.8" fill="none" stroke="#fff" stroke-width="1.9"/>
<rect x="1235.90" y="410.90" width="12.8" height="12.8" fill="none" stroke="#fff" stroke-width="1.9"/>
<rect x="1249.80" y="419.40" width="12.8" height="12.8" fill="none" stroke="#fff" stroke-width="1.9"/>
<rect x="1267.00" y="437.60" width="12.8" height="12.8" fill="none" stroke="#fff" stroke-width="1.9"/>
<rect x="1332.90" y="422.40" width="12.8" height="12.8" fill="none" stroke="#fff" stroke-width="1.9"/>
<rect x="1211.20" y="455.90" width="12.8" height="12.8" fill="none" stroke="#fff" stroke-width="1.9"/>
<rect x="1191.60" y="485.40" width="12.8" height="12.8" fill="none" stroke="#fff" stroke-width="1.9"/>
<rect x="1159.10" y="534.30" width="12.8" height="12.8" fill="none" stroke="#fff" stroke-width="1.9"/>
<rect x="1290.90" y="478.60" width="12.8" height="12.8" fill="none" stroke="#fff" stroke-width="1.9"/>
<rect x="1337.00" y="357.90" width="12.8" height="12.8" fill="none" stroke="#fff" stroke-width="1.9"/>
<rect x="1352.80" y="353.40" width="12.8" height="12.8" fill="none" stroke="#fff" stroke-width="1.9"/>
<rect x="1401.60" y="382.90" width="12.8" height="12.8" fill="none" stroke="#fff" stroke-width="1.9"/>
<rect x="1459.00" y="380.50" width="12.8" height="12.8" fill="none" stroke="#fff" stroke-width="1.9"/>
<rect x="1538.90" y="373.60" width="12.8" height="12.8" fill="none" stroke="#fff" stroke-width="1.9"/>
<rect x="1285.65" y="373.65" width="12.5" height="12.5" fill="none" stroke="#000" stroke-width="3.0"/>
<circle cx="1325.40" cy="232.40" r="4.2" fill="#10f010" stroke="#000" stroke-width="1.25"/>
<circle cx="1312.90" cy="293.80" r="4.2" fill="#4a9a50" stroke="#000" stroke-width="1.25"/>
<circle cx="1355.90" cy="287.00" r="4.2" fill="#9aba50" stroke="#000" stroke-width="1.25"/>
<circle cx="1383.80" cy="276.00" r="4.2" fill="#ffff00" stroke="#000" stroke-width="1.25"/>
<circle cx="1399.90" cy="291.20" r="4.2" fill="#e0c030" stroke="#000" stroke-width="1.25"/>
<circle cx="1412.00" cy="309.80" r="4.2" fill="#e0a030" stroke="#000" stroke-width="1.25"/>
<circle cx="1430.90" cy="325.00" r="4.2" fill="#d07a30" stroke="#000" stroke-width="1.25"/>
<circle cx="1325.40" cy="323.80" r="4.2" fill="#5a6a48" stroke="#000" stroke-width="1.25"/>
<circle cx="1273.40" cy="356.90" r="4.2" fill="#5aa898" stroke="#000" stroke-width="1.25"/>
<circle cx="1244.00" cy="383.00" r="4.2" fill="#00ffff" stroke="#000" stroke-width="1.25"/>
<circle cx="1231.50" cy="403.80" r="4.2" fill="#1a8090" stroke="#000" stroke-width="1.25"/>
<circle cx="1254.90" cy="403.50" r="4.2" fill="#6a80a0" stroke="#000" stroke-width="1.25"/>
<circle cx="1262.00" cy="410.70" r="4.2" fill="#8a80b0" stroke="#000" stroke-width="1.25"/>
<circle cx="1271.80" cy="421.80" r="4.2" fill="#5e3c6c" stroke="#000" stroke-width="1.25"/>
<circle cx="1229.90" cy="436.00" r="4.2" fill="#5060a0" stroke="#000" stroke-width="1.25"/>
<circle cx="1320.80" cy="407.60" r="4.2" fill="#b05a90" stroke="#000" stroke-width="1.25"/>
<circle cx="1339.30" cy="355.90" r="4.2" fill="#b89888" stroke="#000" stroke-width="1.25"/>
<circle cx="1349.00" cy="351.70" r="4.2" fill="#6a5045" stroke="#000" stroke-width="1.25"/>
<circle cx="1380.00" cy="375.50" r="4.2" fill="#c06070" stroke="#000" stroke-width="1.25"/>
<circle cx="1426.50" cy="370.90" r="4.2" fill="#b03a48" stroke="#000" stroke-width="1.25"/>
<circle cx="1498.90" cy="361.50" r="4.2" fill="#ff0000" stroke="#000" stroke-width="1.25"/>
<circle cx="1273.40" cy="461.00" r="4.2" fill="#ff00ff" stroke="#000" stroke-width="1.25"/>
<circle cx="1210.40" cy="460.00" r="4.2" fill="#404a90" stroke="#000" stroke-width="1.25"/>
<circle cx="1178.00" cy="502.80" r="4.2" fill="#0000ff" stroke="#000" stroke-width="1.25"/>
<circle cx="1256.90" cy="427.60" r="4.6" fill="#000" stroke="#000" stroke-width="1.25"/>
<circle cx="1291.40" cy="378.10" r="4.2" fill="#ffffff" stroke="#000" stroke-width="1.25"/>
<circle cx="1294.00" cy="374.80" r="4.2" fill="#c0c0c0" stroke="#000" stroke-width="1.25"/>
<circle cx="1295.60" cy="372.40" r="4.2" fill="#a8a8a8" stroke="#000" stroke-width="1.25"/>
<circle cx="1296.80" cy="370.40" r="4.2" fill="#9a9a9a" stroke="#000" stroke-width="1.25"/>
<rect x="1502.4" y="81.0" width="196.3" height="154.0" fill="#333"/>
<g clip-path="url(#ins)">
<g clip-path="url(#ins)"><g transform="translate(1186.20 682.13)" shape-rendering="crispEdges">
<use href="#w2" transform="rotate(-61.686)" fill="url(#q600)"/>
<use href="#w2" transform="rotate(-61.174)" fill="url(#q601)"/>
<use href="#w2" transform="rotate(-60.661)" fill="url(#q602)"/>
<use href="#w2" transform="rotate(-60.149)" fill="url(#q603)"/>
<use href="#w2" transform="rotate(-59.636)" fill="url(#q604)"/>
<use href="#w2" transform="rotate(-59.124)" fill="url(#q605)"/>
<use href="#w2" transform="rotate(-58.612)" fill="url(#q606)"/>
<use href="#w2" transform="rotate(-58.099)" fill="url(#q607)"/>
<use href="#w2" transform="rotate(-57.587)" fill="url(#q608)"/>
<use href="#w2" transform="rotate(-57.074)" fill="url(#q609)"/>
<use href="#w2" transform="rotate(-56.562)" fill="url(#q610)"/>
<use href="#w2" transform="rotate(-56.049)" fill="url(#q611)"/>
<use href="#w2" transform="rotate(-55.537)" fill="url(#q612)"/>
<use href="#w2" transform="rotate(-55.024)" fill="url(#q613)"/>
<use href="#w2" transform="rotate(-54.512)" fill="url(#q614)"/>
<use href="#w2" transform="rotate(-53.999)" fill="url(#q615)"/>
<use href="#w2" transform="rotate(-53.487)" fill="url(#q616)"/>
<use href="#w2" transform="rotate(-52.974)" fill="url(#q617)"/>
<use href="#w2" transform="rotate(-52.462)" fill="url(#q618)"/>
<use href="#w2" transform="rotate(-51.949)" fill="url(#q619)"/>
<use href="#w2" transform="rotate(-51.437)" fill="url(#q620)"/>
<use href="#w2" transform="rotate(-50.924)" fill="url(#q621)"/>
<use href="#w2" transform="rotate(-50.412)" fill="url(#q622)"/>
<use href="#w2" transform="rotate(-49.899)" fill="url(#q623)"/>
<use href="#w2" transform="rotate(-49.387)" fill="url(#q624)"/>
<use href="#w2" transform="rotate(-48.874)" fill="url(#q625)"/>
<use href="#w2" transform="rotate(-48.362)" fill="url(#q626)"/>
<use href="#w2" transform="rotate(-47.849)" fill="url(#q627)"/>
<use href="#w2" transform="rotate(-47.337)" fill="url(#q628)"/>
<use href="#w2" transform="rotate(-46.824)" fill="url(#q629)"/>
<use href="#w2" transform="rotate(-46.312)" fill="url(#q630)"/>
<use href="#w2" transform="rotate(-45.799)" fill="url(#q631)"/>
<use href="#w2" transform="rotate(-45.287)" fill="url(#q632)"/>
<use href="#w2" transform="rotate(-44.774)" fill="url(#q633)"/>
<use href="#w2" transform="rotate(-44.262)" fill="url(#q634)"/>
<use href="#w2" transform="rotate(-43.749)" fill="url(#q635)"/>
<use href="#w2" transform="rotate(-43.237)" fill="url(#q636)"/>
<use href="#w2" transform="rotate(-42.724)" fill="url(#q637)"/>
<use href="#w2" transform="rotate(-42.212)" fill="url(#q638)"/>
<use href="#w2" transform="rotate(-41.699)" fill="url(#q639)"/>
</g></g>
<g clip-path="url(#trii)">
<g clip-path="url(#ins)"><g transform="translate(1186.20 682.13)" shape-rendering="crispEdges">
<use href="#w3" transform="rotate(-61.686)" fill="url(#q640)"/>
<use href="#w3" transform="rotate(-61.174)" fill="url(#q641)"/>
<use href="#w3" transform="rotate(-60.661)" fill="url(#q642)"/>
<use href="#w3" transform="rotate(-60.149)" fill="url(#q643)"/>
<use href="#w3" transform="rotate(-59.636)" fill="url(#q644)"/>
<use href="#w3" transform="rotate(-59.124)" fill="url(#q645)"/>
<use href="#w3" transform="rotate(-58.612)" fill="url(#q646)"/>
<use href="#w3" transform="rotate(-58.099)" fill="url(#q647)"/>
<use href="#w3" transform="rotate(-57.587)" fill="url(#q648)"/>
<use href="#w3" transform="rotate(-57.074)" fill="url(#q649)"/>
<use href="#w3" transform="rotate(-56.562)" fill="url(#q650)"/>
<use href="#w3" transform="rotate(-56.049)" fill="url(#q651)"/>
<use href="#w3" transform="rotate(-55.537)" fill="url(#q652)"/>
<use href="#w3" transform="rotate(-55.024)" fill="url(#q653)"/>
<use href="#w3" transform="rotate(-54.512)" fill="url(#q654)"/>
<use href="#w3" transform="rotate(-53.999)" fill="url(#q655)"/>
<use href="#w3" transform="rotate(-53.487)" fill="url(#q656)"/>
<use href="#w3" transform="rotate(-52.974)" fill="url(#q657)"/>
<use href="#w3" transform="rotate(-52.462)" fill="url(#q658)"/>
<use href="#w3" transform="rotate(-51.949)" fill="url(#q659)"/>
<use href="#w3" transform="rotate(-51.437)" fill="url(#q660)"/>
<use href="#w3" transform="rotate(-50.924)" fill="url(#q661)"/>
<use href="#w3" transform="rotate(-50.412)" fill="url(#q662)"/>
<use href="#w3" transform="rotate(-49.899)" fill="url(#q663)"/>
<use href="#w3" transform="rotate(-49.387)" fill="url(#q664)"/>
<use href="#w3" transform="rotate(-48.874)" fill="url(#q665)"/>
<use href="#w3" transform="rotate(-48.362)" fill="url(#q666)"/>
<use href="#w3" transform="rotate(-47.849)" fill="url(#q667)"/>
<use href="#w3" transform="rotate(-47.337)" fill="url(#q668)"/>
<use href="#w3" transform="rotate(-46.824)" fill="url(#q669)"/>
<use href="#w3" transform="rotate(-46.312)" fill="url(#q670)"/>
<use href="#w3" transform="rotate(-45.799)" fill="url(#q671)"/>
<use href="#w3" transform="rotate(-45.287)" fill="url(#q672)"/>
<use href="#w3" transform="rotate(-44.774)" fill="url(#q673)"/>
<use href="#w3" transform="rotate(-44.262)" fill="url(#q674)"/>
<use href="#w3" transform="rotate(-43.749)" fill="url(#q675)"/>
<use href="#w3" transform="rotate(-43.237)" fill="url(#q676)"/>
<use href="#w3" transform="rotate(-42.724)" fill="url(#q677)"/>
<use href="#w3" transform="rotate(-42.212)" fill="url(#q678)"/>
<use href="#w3" transform="rotate(-41.699)" fill="url(#q679)"/>
</g></g>
</g>
<rect x="1593.60" y="150.60" width="12.8" height="12.8" fill="none" stroke="#fff" stroke-width="1.9"/>
<circle cx="1650.50" cy="160.00" r="4.2" fill="#ffff00" stroke="#000" stroke-width="1.25"/>
<circle cx="1509.00" cy="211.70" r="4.2" fill="#8aa050" stroke="#000" stroke-width="1.25"/>
</g>
<rect x="1504.8" y="83.8" width="192" height="148.5" fill="none" stroke="#8c8c8c" stroke-width="1.6"/>
<rect x="1418.3" y="536.8" width="280.4" height="28" fill="#333"/>
<text x="1448.51" y="558.70" font-size="21.66" textLength="219.98" lengthAdjust="spacingAndGlyphs" fill="#f4f4f4">RGB Triplet: 255, 255, 0</text>
<text x="7.94" y="675.00" font-size="30.52" textLength="229.02" lengthAdjust="spacingAndGlyphs" fill="#f0f0f0">Current Reading</text>
<text x="9.18" y="718.00" font-size="25.87" textLength="106.77" lengthAdjust="spacingAndGlyphs" fill="#f0f0f0">x: 0,4327</text>
<text x="9.13" y="760.00" font-size="25.87" textLength="107.43" lengthAdjust="spacingAndGlyphs" fill="#f0f0f0">y: 0,5044</text>
<text x="9.61" y="801.70" font-size="25.87" textLength="115.00" lengthAdjust="spacingAndGlyphs" fill="#f0f0f0">fL: 71,197</text>
<text x="8.04" y="843.30" font-size="25.87" textLength="181.43" lengthAdjust="spacingAndGlyphs" fill="#f0f0f0">cd/m²: 243,938</text>
<rect x="334" y="629" width="1376" height="28.60" fill="url(#thd)"/>
<rect x="325" y="629" width="9" height="28.60" fill="#000"/>
<rect x="325" y="657.6" width="9" height="185.92" fill="#1e1e1e"/>
<rect x="334" y="657.60" width="1376" height="26.56" fill="#424242"/>
<rect x="334" y="684.16" width="1376" height="26.56" fill="#858585"/>
<rect x="334" y="710.72" width="1376" height="26.56" fill="#424242"/>
<rect x="334" y="737.28" width="1376" height="26.56" fill="#858585"/>
<rect x="334" y="763.84" width="1376" height="26.56" fill="#424242"/>
<rect x="334" y="790.40" width="1376" height="26.56" fill="#858585"/>
<rect x="334" y="816.96" width="1376" height="26.56" fill="#424242"/>
<text x="404.15" y="648.60" font-size="15.26" textLength="25.79" lengthAdjust="spacingAndGlyphs" fill="#f4f4f4">White</text>
<text x="438.84" y="648.60" font-size="15.26" textLength="32.73" lengthAdjust="spacingAndGlyphs" fill="#f4f4f4">Gray 80</text>
<text x="475.65" y="648.60" font-size="15.26" textLength="32.34" lengthAdjust="spacingAndGlyphs" fill="#f4f4f4">Gray 65</text>
<text x="512.05" y="648.60" font-size="15.26" textLength="32.32" lengthAdjust="spacingAndGlyphs" fill="#f4f4f4">Gray 50</text>
<text x="548.35" y="648.60" font-size="15.26" textLength="32.34" lengthAdjust="spacingAndGlyphs" fill="#f4f4f4">Gray 35</text>
<text x="584.84" y="648.60" font-size="15.26" textLength="22.46" lengthAdjust="spacingAndGlyphs" fill="#f4f4f4">Black</text>
<text x="611.45" y="648.60" font-size="15.26" textLength="39.33" lengthAdjust="spacingAndGlyphs" fill="#f4f4f4">Dark Skin</text>
<text x="654.34" y="648.60" font-size="15.26" textLength="40.56" lengthAdjust="spacingAndGlyphs" fill="#f4f4f4">Light Skin</text>
<text x="698.46" y="648.60" font-size="15.26" textLength="35.56" lengthAdjust="spacingAndGlyphs" fill="#f4f4f4">Blue Sky</text>
<text x="737.73" y="648.60" font-size="15.26" textLength="30.56" lengthAdjust="spacingAndGlyphs" fill="#f4f4f4">Foliage</text>
<text x="772.03" y="648.60" font-size="15.26" textLength="49.51" lengthAdjust="spacingAndGlyphs" fill="#f4f4f4">Blue Flower</text>
<text x="825.13" y="648.60" font-size="15.26" textLength="54.06" lengthAdjust="spacingAndGlyphs" fill="#f4f4f4">Bluish Green</text>
<text x="882.66" y="648.60" font-size="15.26" textLength="31.15" lengthAdjust="spacingAndGlyphs" fill="#f4f4f4">Orange</text>
<text x="917.12" y="648.60" font-size="15.26" textLength="55.91" lengthAdjust="spacingAndGlyphs" fill="#f4f4f4">Purplish Blue</text>
<text x="975.92" y="648.60" font-size="15.26" textLength="60.10" lengthAdjust="spacingAndGlyphs" fill="#f4f4f4">Moderate Red</text>
<text x="1039.59" y="648.60" font-size="15.26" textLength="28.23" lengthAdjust="spacingAndGlyphs" fill="#f4f4f4">Purple</text>
<text x="1071.79" y="648.60" font-size="15.26" textLength="54.90" lengthAdjust="spacingAndGlyphs" fill="#f4f4f4">Yellow Green</text>
<text x="1130.26" y="648.60" font-size="15.26" textLength="59.11" lengthAdjust="spacingAndGlyphs" fill="#f4f4f4">Orange Yellow</text>
<text x="1193.58" y="648.60" font-size="15.26" textLength="19.96" lengthAdjust="spacingAndGlyphs" fill="#f4f4f4">Blue</text>
<text x="1223.42" y="648.60" font-size="15.26" textLength="26.91" lengthAdjust="spacingAndGlyphs" fill="#f4f4f4">Green</text>
<text x="1253.50" y="648.60" font-size="15.26" textLength="17.72" lengthAdjust="spacingAndGlyphs" fill="#f4f4f4">Red</text>
<text x="1284.09" y="648.60" font-size="15.26" textLength="27.18" lengthAdjust="spacingAndGlyphs" fill="#f4f4f4">Yellow</text>
<text x="1318.91" y="648.60" font-size="15.26" textLength="37.39" lengthAdjust="spacingAndGlyphs" fill="#f4f4f4">Magenta</text>
<text x="1360.44" y="648.60" font-size="15.26" textLength="21.45" lengthAdjust="spacingAndGlyphs" fill="#f4f4f4">Cyan</text>
<text x="1390.12" y="648.60" font-size="15.26" textLength="42.04" lengthAdjust="spacingAndGlyphs" fill="#f4f4f4">100% Red</text>
<text x="1435.52" y="648.60" font-size="15.26" textLength="51.25" lengthAdjust="spacingAndGlyphs" fill="#f4f4f4">100% Green</text>
<text x="1490.51" y="648.60" font-size="15.26" textLength="44.29" lengthAdjust="spacingAndGlyphs" fill="#f4f4f4">100% Blue</text>
<text x="1538.72" y="648.60" font-size="15.26" textLength="46.64" lengthAdjust="spacingAndGlyphs" fill="#f4f4f4">100% Cyan</text>
<text x="1588.71" y="648.60" font-size="15.26" textLength="62.29" lengthAdjust="spacingAndGlyphs" fill="#f4f4f4">100% Magenta</text>
<text x="1655.31" y="648.60" font-size="15.26" textLength="52.26" lengthAdjust="spacingAndGlyphs" fill="#f4f4f4">100% Yellow</text>
<text x="335.69" y="677.80" font-size="17.01" textLength="35.05" lengthAdjust="spacingAndGlyphs" fill="#f4f4f4">x: CIE31</text>
<text x="403.80" y="677.80" font-size="17.01" textLength="19.36" lengthAdjust="spacingAndGlyphs" fill="#f4f4f4">0,31</text>
<text x="438.90" y="677.80" font-size="17.01" textLength="19.36" lengthAdjust="spacingAndGlyphs" fill="#f4f4f4">0,32</text>
<text x="475.70" y="677.80" font-size="17.01" textLength="19.36" lengthAdjust="spacingAndGlyphs" fill="#f4f4f4">0,32</text>
<text x="512.10" y="677.80" font-size="17.01" textLength="19.36" lengthAdjust="spacingAndGlyphs" fill="#f4f4f4">0,32</text>
<text x="548.40" y="677.80" font-size="17.01" textLength="19.36" lengthAdjust="spacingAndGlyphs" fill="#f4f4f4">0,32</text>
<text x="585.20" y="677.80" font-size="17.01" textLength="19.36" lengthAdjust="spacingAndGlyphs" fill="#f4f4f4">0,27</text>
<text x="611.80" y="677.80" font-size="17.01" textLength="19.36" lengthAdjust="spacingAndGlyphs" fill="#f4f4f4">0,39</text>
<text x="654.70" y="677.80" font-size="17.01" textLength="19.36" lengthAdjust="spacingAndGlyphs" fill="#f4f4f4">0,37</text>
<text x="698.80" y="677.80" font-size="17.01" textLength="19.36" lengthAdjust="spacingAndGlyphs" fill="#f4f4f4">0,27</text>
<text x="738.10" y="677.80" font-size="17.01" textLength="19.36" lengthAdjust="spacingAndGlyphs" fill="#f4f4f4">0,36</text>
<text x="772.40" y="677.80" font-size="17.01" textLength="19.36" lengthAdjust="spacingAndGlyphs" fill="#f4f4f4">0,28</text>
<text x="825.50" y="677.80" font-size="17.01" textLength="19.36" lengthAdjust="spacingAndGlyphs" fill="#f4f4f4">0,29</text>
<text x="882.70" y="677.80" font-size="17.01" textLength="19.36" lengthAdjust="spacingAndGlyphs" fill="#f4f4f4">0,49</text>
<text x="917.50" y="677.80" font-size="17.01" textLength="19.36" lengthAdjust="spacingAndGlyphs" fill="#f4f4f4">0,23</text>
<text x="976.30" y="677.80" font-size="17.01" textLength="19.36" lengthAdjust="spacingAndGlyphs" fill="#f4f4f4">0,43</text>
<text x="1040.00" y="677.80" font-size="17.01" textLength="19.36" lengthAdjust="spacingAndGlyphs" fill="#f4f4f4">0,29</text>
<text x="1071.60" y="677.80" font-size="17.01" textLength="19.36" lengthAdjust="spacingAndGlyphs" fill="#f4f4f4">0,40</text>
<text x="1130.30" y="677.80" font-size="17.01" textLength="19.36" lengthAdjust="spacingAndGlyphs" fill="#f4f4f4">0,47</text>
<text x="1194.00" y="677.80" font-size="17.01" textLength="19.36" lengthAdjust="spacingAndGlyphs" fill="#f4f4f4">0,21</text>
<text x="1223.50" y="677.80" font-size="17.01" textLength="19.36" lengthAdjust="spacingAndGlyphs" fill="#f4f4f4">0,34</text>
<text x="1253.90" y="677.80" font-size="17.01" textLength="19.36" lengthAdjust="spacingAndGlyphs" fill="#f4f4f4">0,49</text>
<text x="1283.90" y="677.80" font-size="17.01" textLength="19.36" lengthAdjust="spacingAndGlyphs" fill="#f4f4f4">0,45</text>
<text x="1319.30" y="677.80" font-size="17.01" textLength="19.36" lengthAdjust="spacingAndGlyphs" fill="#f4f4f4">0,35</text>
<text x="1360.50" y="677.80" font-size="17.01" textLength="19.36" lengthAdjust="spacingAndGlyphs" fill="#f4f4f4">0,24</text>
<text x="1390.40" y="677.80" font-size="17.01" textLength="19.36" lengthAdjust="spacingAndGlyphs" fill="#f4f4f4">0,58</text>
<text x="1435.80" y="677.80" font-size="17.01" textLength="19.36" lengthAdjust="spacingAndGlyphs" fill="#f4f4f4">0,36</text>
<text x="1490.80" y="677.80" font-size="17.01" textLength="19.36" lengthAdjust="spacingAndGlyphs" fill="#f4f4f4">0,17</text>
<text x="1539.00" y="677.80" font-size="17.01" textLength="19.36" lengthAdjust="spacingAndGlyphs" fill="#f4f4f4">0,25</text>
<text x="1589.00" y="677.80" font-size="17.01" textLength="19.36" lengthAdjust="spacingAndGlyphs" fill="#f4f4f4">0,29</text>
<text x="1655.60" y="677.80" font-size="17.01" textLength="19.36" lengthAdjust="spacingAndGlyphs" fill="#f4f4f4">0,43</text>
<text x="335.78" y="704.36" font-size="17.01" textLength="35.77" lengthAdjust="spacingAndGlyphs" fill="#f4f4f4">y: CIE31</text>
<text x="403.80" y="704.36" font-size="17.01" textLength="19.36" lengthAdjust="spacingAndGlyphs" fill="#f4f4f4">0,33</text>
<text x="438.90" y="704.36" font-size="17.01" textLength="19.36" lengthAdjust="spacingAndGlyphs" fill="#f4f4f4">0,34</text>
<text x="475.70" y="704.36" font-size="17.01" textLength="19.36" lengthAdjust="spacingAndGlyphs" fill="#f4f4f4">0,34</text>
<text x="512.10" y="704.36" font-size="17.01" textLength="19.36" lengthAdjust="spacingAndGlyphs" fill="#f4f4f4">0,34</text>
<text x="548.40" y="704.36" font-size="17.01" textLength="19.36" lengthAdjust="spacingAndGlyphs" fill="#f4f4f4">0,34</text>
<text x="585.20" y="704.36" font-size="17.01" textLength="19.36" lengthAdjust="spacingAndGlyphs" fill="#f4f4f4">0,25</text>
<text x="611.80" y="704.36" font-size="17.01" textLength="19.36" lengthAdjust="spacingAndGlyphs" fill="#f4f4f4">0,38</text>
<text x="654.70" y="704.36" font-size="17.01" textLength="19.36" lengthAdjust="spacingAndGlyphs" fill="#f4f4f4">0,37</text>
<text x="698.80" y="704.36" font-size="17.01" textLength="19.36" lengthAdjust="spacingAndGlyphs" fill="#f4f4f4">0,29</text>
<text x="738.10" y="704.36" font-size="17.01" textLength="19.36" lengthAdjust="spacingAndGlyphs" fill="#f4f4f4">0,42</text>
<text x="772.40" y="704.36" font-size="17.01" textLength="19.36" lengthAdjust="spacingAndGlyphs" fill="#f4f4f4">0,28</text>
<text x="825.50" y="704.36" font-size="17.01" textLength="19.36" lengthAdjust="spacingAndGlyphs" fill="#f4f4f4">0,37</text>
<text x="882.70" y="704.36" font-size="17.01" textLength="19.36" lengthAdjust="spacingAndGlyphs" fill="#f4f4f4">0,42</text>
<text x="917.50" y="704.36" font-size="17.01" textLength="19.36" lengthAdjust="spacingAndGlyphs" fill="#f4f4f4">0,24</text>
<text x="976.30" y="704.36" font-size="17.01" textLength="19.36" lengthAdjust="spacingAndGlyphs" fill="#f4f4f4">0,34</text>
<text x="1040.00" y="704.36" font-size="17.01" textLength="19.36" lengthAdjust="spacingAndGlyphs" fill="#f4f4f4">0,26</text>
<text x="1071.60" y="704.36" font-size="17.01" textLength="19.36" lengthAdjust="spacingAndGlyphs" fill="#f4f4f4">0,49</text>
<text x="1130.30" y="704.36" font-size="17.01" textLength="19.36" lengthAdjust="spacingAndGlyphs" fill="#f4f4f4">0,45</text>
<text x="1194.00" y="704.36" font-size="17.01" textLength="19.36" lengthAdjust="spacingAndGlyphs" fill="#f4f4f4">0,20</text>
<text x="1223.50" y="704.36" font-size="17.01" textLength="19.36" lengthAdjust="spacingAndGlyphs" fill="#f4f4f4">0,47</text>
<text x="1253.90" y="704.36" font-size="17.01" textLength="19.36" lengthAdjust="spacingAndGlyphs" fill="#f4f4f4">0,34</text>
<text x="1283.90" y="704.36" font-size="17.01" textLength="19.36" lengthAdjust="spacingAndGlyphs" fill="#f4f4f4">0,48</text>
<text x="1319.30" y="704.36" font-size="17.01" textLength="19.36" lengthAdjust="spacingAndGlyphs" fill="#f4f4f4">0,28</text>
<text x="1360.50" y="704.36" font-size="17.01" textLength="19.36" lengthAdjust="spacingAndGlyphs" fill="#f4f4f4">0,29</text>
<text x="1390.40" y="704.36" font-size="17.01" textLength="19.36" lengthAdjust="spacingAndGlyphs" fill="#f4f4f4">0,36</text>
<text x="1435.80" y="704.36" font-size="17.01" textLength="19.36" lengthAdjust="spacingAndGlyphs" fill="#f4f4f4">0,58</text>
<text x="1490.80" y="704.36" font-size="17.01" textLength="19.36" lengthAdjust="spacingAndGlyphs" fill="#f4f4f4">0,12</text>
<text x="1539.00" y="704.36" font-size="17.01" textLength="19.36" lengthAdjust="spacingAndGlyphs" fill="#f4f4f4">0,33</text>
<text x="1589.00" y="704.36" font-size="17.01" textLength="19.36" lengthAdjust="spacingAndGlyphs" fill="#f4f4f4">0,19</text>
<text x="1655.60" y="704.36" font-size="17.01" textLength="19.36" lengthAdjust="spacingAndGlyphs" fill="#f4f4f4">0,50</text>
<text x="335.60" y="730.92" font-size="17.01" textLength="5.89" lengthAdjust="spacingAndGlyphs" fill="#f4f4f4">Y</text>
<text x="403.70" y="730.92" font-size="17.01" textLength="30.43" lengthAdjust="spacingAndGlyphs" fill="#f4f4f4">291,88</text>
<text x="438.80" y="730.92" font-size="17.01" textLength="30.43" lengthAdjust="spacingAndGlyphs" fill="#f4f4f4">246,19</text>
<text x="475.35" y="730.92" font-size="17.01" textLength="30.43" lengthAdjust="spacingAndGlyphs" fill="#f4f4f4">196,10</text>
<text x="511.75" y="730.92" font-size="17.01" textLength="30.43" lengthAdjust="spacingAndGlyphs" fill="#f4f4f4">147,04</text>
<text x="548.05" y="730.92" font-size="17.01" textLength="30.43" lengthAdjust="spacingAndGlyphs" fill="#f4f4f4">102,13</text>
<text x="585.20" y="730.92" font-size="17.01" textLength="19.36" lengthAdjust="spacingAndGlyphs" fill="#f4f4f4">0,24</text>
<text x="611.83" y="730.92" font-size="17.01" textLength="24.90" lengthAdjust="spacingAndGlyphs" fill="#f4f4f4">30,88</text>
<text x="654.35" y="730.92" font-size="17.01" textLength="30.43" lengthAdjust="spacingAndGlyphs" fill="#f4f4f4">101,86</text>
<text x="698.70" y="730.92" font-size="17.01" textLength="24.90" lengthAdjust="spacingAndGlyphs" fill="#f4f4f4">60,65</text>
<text x="738.13" y="730.92" font-size="17.01" textLength="24.90" lengthAdjust="spacingAndGlyphs" fill="#f4f4f4">38,41</text>
<text x="772.30" y="730.92" font-size="17.01" textLength="24.90" lengthAdjust="spacingAndGlyphs" fill="#f4f4f4">75,73</text>
<text x="825.15" y="730.92" font-size="17.01" textLength="30.43" lengthAdjust="spacingAndGlyphs" fill="#f4f4f4">123,05</text>
<text x="882.68" y="730.92" font-size="17.01" textLength="24.90" lengthAdjust="spacingAndGlyphs" fill="#f4f4f4">81,64</text>
<text x="917.68" y="730.92" font-size="17.01" textLength="24.90" lengthAdjust="spacingAndGlyphs" fill="#f4f4f4">43,84</text>
<text x="976.30" y="730.92" font-size="17.01" textLength="24.90" lengthAdjust="spacingAndGlyphs" fill="#f4f4f4">57,68</text>
<text x="1039.90" y="730.92" font-size="17.01" textLength="24.90" lengthAdjust="spacingAndGlyphs" fill="#f4f4f4">24,10</text>
<text x="1071.25" y="730.92" font-size="17.01" textLength="29.69" lengthAdjust="spacingAndGlyphs" fill="#f4f4f4">116,18</text>
<text x="1129.95" y="730.92" font-size="17.01" textLength="29.69" lengthAdjust="spacingAndGlyphs" fill="#f4f4f4">119,45</text>
<text x="1193.90" y="730.92" font-size="17.01" textLength="24.90" lengthAdjust="spacingAndGlyphs" fill="#f4f4f4">26,47</text>
<text x="1223.40" y="730.92" font-size="17.01" textLength="24.90" lengthAdjust="spacingAndGlyphs" fill="#f4f4f4">62,88</text>
<text x="1253.93" y="730.92" font-size="17.01" textLength="24.90" lengthAdjust="spacingAndGlyphs" fill="#f4f4f4">34,92</text>
<text x="1283.55" y="730.92" font-size="17.01" textLength="30.43" lengthAdjust="spacingAndGlyphs" fill="#f4f4f4">163,69</text>
<text x="1319.20" y="730.92" font-size="17.01" textLength="24.90" lengthAdjust="spacingAndGlyphs" fill="#f4f4f4">62,14</text>
<text x="1360.40" y="730.92" font-size="17.01" textLength="24.90" lengthAdjust="spacingAndGlyphs" fill="#f4f4f4">61,30</text>
<text x="1390.30" y="730.92" font-size="17.01" textLength="24.90" lengthAdjust="spacingAndGlyphs" fill="#f4f4f4">60,14</text>
<text x="1435.45" y="730.92" font-size="17.01" textLength="30.43" lengthAdjust="spacingAndGlyphs" fill="#f4f4f4">184,08</text>
<text x="1490.98" y="730.92" font-size="17.01" textLength="24.90" lengthAdjust="spacingAndGlyphs" fill="#f4f4f4">48,23</text>
<text x="1538.90" y="730.92" font-size="17.01" textLength="30.43" lengthAdjust="spacingAndGlyphs" fill="#f4f4f4">232,02</text>
<text x="1588.65" y="730.92" font-size="17.01" textLength="30.43" lengthAdjust="spacingAndGlyphs" fill="#f4f4f4">108,01</text>
<text x="1655.50" y="730.92" font-size="17.01" textLength="30.43" lengthAdjust="spacingAndGlyphs" fill="#f4f4f4">243,94</text>
<text x="335.59" y="757.48" font-size="17.01" textLength="62.48" lengthAdjust="spacingAndGlyphs" fill="#f4f4f4">Target x:CIE31</text>
<text x="403.80" y="757.48" font-size="17.01" textLength="19.36" lengthAdjust="spacingAndGlyphs" fill="#f4f4f4">0,31</text>
<text x="438.90" y="757.48" font-size="17.01" textLength="19.36" lengthAdjust="spacingAndGlyphs" fill="#f4f4f4">0,31</text>
<text x="475.70" y="757.48" font-size="17.01" textLength="19.36" lengthAdjust="spacingAndGlyphs" fill="#f4f4f4">0,31</text>
<text x="512.10" y="757.48" font-size="17.01" textLength="19.36" lengthAdjust="spacingAndGlyphs" fill="#f4f4f4">0,31</text>
<text x="548.40" y="757.48" font-size="17.01" textLength="19.36" lengthAdjust="spacingAndGlyphs" fill="#f4f4f4">0,31</text>
<text x="585.20" y="757.48" font-size="17.01" textLength="19.36" lengthAdjust="spacingAndGlyphs" fill="#f4f4f4">0,31</text>
<text x="611.80" y="757.48" font-size="17.01" textLength="19.36" lengthAdjust="spacingAndGlyphs" fill="#f4f4f4">0,40</text>
<text x="654.70" y="757.48" font-size="17.01" textLength="19.36" lengthAdjust="spacingAndGlyphs" fill="#f4f4f4">0,38</text>
<text x="698.80" y="757.48" font-size="17.01" textLength="19.36" lengthAdjust="spacingAndGlyphs" fill="#f4f4f4">0,25</text>
<text x="738.10" y="757.48" font-size="17.01" textLength="19.36" lengthAdjust="spacingAndGlyphs" fill="#f4f4f4">0,34</text>
<text x="772.40" y="757.48" font-size="17.01" textLength="19.36" lengthAdjust="spacingAndGlyphs" fill="#f4f4f4">0,27</text>
<text x="825.50" y="757.48" font-size="17.01" textLength="19.36" lengthAdjust="spacingAndGlyphs" fill="#f4f4f4">0,26</text>
<text x="882.70" y="757.48" font-size="17.01" textLength="19.36" lengthAdjust="spacingAndGlyphs" fill="#f4f4f4">0,51</text>
<text x="917.50" y="757.48" font-size="17.01" textLength="19.36" lengthAdjust="spacingAndGlyphs" fill="#f4f4f4">0,22</text>
<text x="976.30" y="757.48" font-size="17.01" textLength="19.36" lengthAdjust="spacingAndGlyphs" fill="#f4f4f4">0,46</text>
<text x="1040.00" y="757.48" font-size="17.01" textLength="19.36" lengthAdjust="spacingAndGlyphs" fill="#f4f4f4">0,29</text>
<text x="1071.60" y="757.48" font-size="17.01" textLength="19.36" lengthAdjust="spacingAndGlyphs" fill="#f4f4f4">0,38</text>
<text x="1130.30" y="757.48" font-size="17.01" textLength="19.36" lengthAdjust="spacingAndGlyphs" fill="#f4f4f4">0,47</text>
<text x="1194.00" y="757.48" font-size="17.01" textLength="19.36" lengthAdjust="spacingAndGlyphs" fill="#f4f4f4">0,19</text>
<text x="1223.50" y="757.48" font-size="17.01" textLength="19.36" lengthAdjust="spacingAndGlyphs" fill="#f4f4f4">0,31</text>
<text x="1253.90" y="757.48" font-size="17.01" textLength="19.36" lengthAdjust="spacingAndGlyphs" fill="#f4f4f4">0,54</text>
<text x="1283.90" y="757.48" font-size="17.01" textLength="19.36" lengthAdjust="spacingAndGlyphs" fill="#f4f4f4">0,45</text>
<text x="1319.30" y="757.48" font-size="17.01" textLength="19.36" lengthAdjust="spacingAndGlyphs" fill="#f4f4f4">0,37</text>
<text x="1360.50" y="757.48" font-size="17.01" textLength="19.36" lengthAdjust="spacingAndGlyphs" fill="#f4f4f4">0,21</text>
<text x="1390.40" y="757.48" font-size="17.01" textLength="19.36" lengthAdjust="spacingAndGlyphs" fill="#f4f4f4">0,64</text>
<text x="1435.80" y="757.48" font-size="17.01" textLength="19.36" lengthAdjust="spacingAndGlyphs" fill="#f4f4f4">0,30</text>
<text x="1490.80" y="757.48" font-size="17.01" textLength="19.36" lengthAdjust="spacingAndGlyphs" fill="#f4f4f4">0,15</text>
<text x="1539.00" y="757.48" font-size="17.01" textLength="19.36" lengthAdjust="spacingAndGlyphs" fill="#f4f4f4">0,22</text>
<text x="1589.00" y="757.48" font-size="17.01" textLength="19.36" lengthAdjust="spacingAndGlyphs" fill="#f4f4f4">0,32</text>
<text x="1655.60" y="757.48" font-size="17.01" textLength="19.36" lengthAdjust="spacingAndGlyphs" fill="#f4f4f4">0,42</text>
<text x="335.59" y="784.04" font-size="17.01" textLength="62.48" lengthAdjust="spacingAndGlyphs" fill="#f4f4f4">Target y:CIE31</text>
<text x="403.80" y="784.04" font-size="17.01" textLength="19.36" lengthAdjust="spacingAndGlyphs" fill="#f4f4f4">0,33</text>
<text x="438.90" y="784.04" font-size="17.01" textLength="19.36" lengthAdjust="spacingAndGlyphs" fill="#f4f4f4">0,33</text>
<text x="475.70" y="784.04" font-size="17.01" textLength="19.36" lengthAdjust="spacingAndGlyphs" fill="#f4f4f4">0,33</text>
<text x="512.10" y="784.04" font-size="17.01" textLength="19.36" lengthAdjust="spacingAndGlyphs" fill="#f4f4f4">0,33</text>
<text x="548.40" y="784.04" font-size="17.01" textLength="19.36" lengthAdjust="spacingAndGlyphs" fill="#f4f4f4">0,33</text>
<text x="585.20" y="784.04" font-size="17.01" textLength="19.36" lengthAdjust="spacingAndGlyphs" fill="#f4f4f4">0,33</text>
<text x="611.80" y="784.04" font-size="17.01" textLength="19.36" lengthAdjust="spacingAndGlyphs" fill="#f4f4f4">0,36</text>
<text x="654.70" y="784.04" font-size="17.01" textLength="19.36" lengthAdjust="spacingAndGlyphs" fill="#f4f4f4">0,36</text>
<text x="698.80" y="784.04" font-size="17.01" textLength="19.36" lengthAdjust="spacingAndGlyphs" fill="#f4f4f4">0,27</text>
<text x="738.10" y="784.04" font-size="17.01" textLength="19.36" lengthAdjust="spacingAndGlyphs" fill="#f4f4f4">0,43</text>
<text x="772.40" y="784.04" font-size="17.01" textLength="19.36" lengthAdjust="spacingAndGlyphs" fill="#f4f4f4">0,25</text>
<text x="825.50" y="784.04" font-size="17.01" textLength="19.36" lengthAdjust="spacingAndGlyphs" fill="#f4f4f4">0,36</text>
<text x="882.70" y="784.04" font-size="17.01" textLength="19.36" lengthAdjust="spacingAndGlyphs" fill="#f4f4f4">0,41</text>
<text x="917.50" y="784.04" font-size="17.01" textLength="19.36" lengthAdjust="spacingAndGlyphs" fill="#f4f4f4">0,19</text>
<text x="976.30" y="784.04" font-size="17.01" textLength="19.36" lengthAdjust="spacingAndGlyphs" fill="#f4f4f4">0,31</text>
<text x="1040.00" y="784.04" font-size="17.01" textLength="19.36" lengthAdjust="spacingAndGlyphs" fill="#f4f4f4">0,22</text>
<text x="1071.60" y="784.04" font-size="17.01" textLength="19.36" lengthAdjust="spacingAndGlyphs" fill="#f4f4f4">0,49</text>
<text x="1130.30" y="784.04" font-size="17.01" textLength="19.36" lengthAdjust="spacingAndGlyphs" fill="#f4f4f4">0,44</text>
<text x="1194.00" y="784.04" font-size="17.01" textLength="19.36" lengthAdjust="spacingAndGlyphs" fill="#f4f4f4">0,14</text>
<text x="1223.50" y="784.04" font-size="17.01" textLength="19.36" lengthAdjust="spacingAndGlyphs" fill="#f4f4f4">0,49</text>
<text x="1253.90" y="784.04" font-size="17.01" textLength="19.36" lengthAdjust="spacingAndGlyphs" fill="#f4f4f4">0,32</text>
<text x="1283.90" y="784.04" font-size="17.01" textLength="19.36" lengthAdjust="spacingAndGlyphs" fill="#f4f4f4">0,47</text>
<text x="1319.30" y="784.04" font-size="17.01" textLength="19.36" lengthAdjust="spacingAndGlyphs" fill="#f4f4f4">0,25</text>
<text x="1360.50" y="784.04" font-size="17.01" textLength="19.36" lengthAdjust="spacingAndGlyphs" fill="#f4f4f4">0,27</text>
<text x="1390.40" y="784.04" font-size="17.01" textLength="19.36" lengthAdjust="spacingAndGlyphs" fill="#f4f4f4">0,33</text>
<text x="1435.80" y="784.04" font-size="17.01" textLength="19.36" lengthAdjust="spacingAndGlyphs" fill="#f4f4f4">0,60</text>
<text x="1490.80" y="784.04" font-size="17.01" textLength="19.36" lengthAdjust="spacingAndGlyphs" fill="#f4f4f4">0,06</text>
<text x="1539.00" y="784.04" font-size="17.01" textLength="19.36" lengthAdjust="spacingAndGlyphs" fill="#f4f4f4">0,33</text>
<text x="1589.00" y="784.04" font-size="17.01" textLength="19.36" lengthAdjust="spacingAndGlyphs" fill="#f4f4f4">0,15</text>
<text x="1655.60" y="784.04" font-size="17.01" textLength="19.36" lengthAdjust="spacingAndGlyphs" fill="#f4f4f4">0,51</text>
<text x="335.58" y="810.60" font-size="17.01" textLength="36.53" lengthAdjust="spacingAndGlyphs" fill="#f4f4f4">Target Y</text>
<text x="403.70" y="810.60" font-size="17.01" textLength="30.43" lengthAdjust="spacingAndGlyphs" fill="#f4f4f4">291,88</text>
<text x="438.80" y="810.60" font-size="17.01" textLength="30.43" lengthAdjust="spacingAndGlyphs" fill="#f4f4f4">230,96</text>
<text x="475.35" y="810.60" font-size="17.01" textLength="30.43" lengthAdjust="spacingAndGlyphs" fill="#f4f4f4">186,10</text>
<text x="511.75" y="810.60" font-size="17.01" textLength="30.43" lengthAdjust="spacingAndGlyphs" fill="#f4f4f4">143,32</text>
<text x="548.33" y="810.60" font-size="17.01" textLength="24.90" lengthAdjust="spacingAndGlyphs" fill="#f4f4f4">99,80</text>
<text x="585.20" y="810.60" font-size="17.01" textLength="19.36" lengthAdjust="spacingAndGlyphs" fill="#f4f4f4">0,00</text>
<text x="611.70" y="810.60" font-size="17.01" textLength="24.90" lengthAdjust="spacingAndGlyphs" fill="#f4f4f4">29,40</text>
<text x="654.35" y="810.60" font-size="17.01" textLength="30.43" lengthAdjust="spacingAndGlyphs" fill="#f4f4f4">101,85</text>
<text x="698.80" y="810.60" font-size="17.01" textLength="24.90" lengthAdjust="spacingAndGlyphs" fill="#f4f4f4">54,58</text>
<text x="738.13" y="810.60" font-size="17.01" textLength="24.90" lengthAdjust="spacingAndGlyphs" fill="#f4f4f4">38,04</text>
<text x="772.30" y="810.60" font-size="17.01" textLength="24.90" lengthAdjust="spacingAndGlyphs" fill="#f4f4f4">68,06</text>
<text x="825.15" y="810.60" font-size="17.01" textLength="30.43" lengthAdjust="spacingAndGlyphs" fill="#f4f4f4">122,22</text>
<text x="882.68" y="810.60" font-size="17.01" textLength="24.90" lengthAdjust="spacingAndGlyphs" fill="#f4f4f4">82,74</text>
<text x="917.53" y="810.60" font-size="17.01" textLength="24.90" lengthAdjust="spacingAndGlyphs" fill="#f4f4f4">34,31</text>
<text x="976.30" y="810.60" font-size="17.01" textLength="24.90" lengthAdjust="spacingAndGlyphs" fill="#f4f4f4">54,51</text>
<text x="1039.65" y="810.60" font-size="17.01" textLength="24.90" lengthAdjust="spacingAndGlyphs" fill="#f4f4f4">19,48</text>
<text x="1071.25" y="810.60" font-size="17.01" textLength="30.43" lengthAdjust="spacingAndGlyphs" fill="#f4f4f4">124,80</text>
<text x="1129.95" y="810.60" font-size="17.01" textLength="30.43" lengthAdjust="spacingAndGlyphs" fill="#f4f4f4">124,09</text>
<text x="1193.65" y="810.60" font-size="17.01" textLength="24.90" lengthAdjust="spacingAndGlyphs" fill="#f4f4f4">18,22</text>
<text x="1223.40" y="810.60" font-size="17.01" textLength="24.90" lengthAdjust="spacingAndGlyphs" fill="#f4f4f4">67,05</text>
<text x="1253.93" y="810.60" font-size="17.01" textLength="24.90" lengthAdjust="spacingAndGlyphs" fill="#f4f4f4">34,04</text>
<text x="1283.55" y="810.60" font-size="17.01" textLength="30.43" lengthAdjust="spacingAndGlyphs" fill="#f4f4f4">172,10</text>
<text x="1319.30" y="810.60" font-size="17.01" textLength="24.90" lengthAdjust="spacingAndGlyphs" fill="#f4f4f4">54,95</text>
<text x="1360.50" y="810.60" font-size="17.01" textLength="24.90" lengthAdjust="spacingAndGlyphs" fill="#f4f4f4">56,68</text>
<text x="1390.30" y="810.60" font-size="17.01" textLength="24.90" lengthAdjust="spacingAndGlyphs" fill="#f4f4f4">62,07</text>
<text x="1435.70" y="810.60" font-size="17.01" textLength="30.43" lengthAdjust="spacingAndGlyphs" fill="#f4f4f4">208,74</text>
<text x="1490.70" y="810.60" font-size="17.01" textLength="24.90" lengthAdjust="spacingAndGlyphs" fill="#f4f4f4">21,07</text>
<text x="1538.90" y="810.60" font-size="17.01" textLength="30.43" lengthAdjust="spacingAndGlyphs" fill="#f4f4f4">229,81</text>
<text x="1588.98" y="810.60" font-size="17.01" textLength="24.90" lengthAdjust="spacingAndGlyphs" fill="#f4f4f4">83,14</text>
<text x="1655.50" y="810.60" font-size="17.01" textLength="30.43" lengthAdjust="spacingAndGlyphs" fill="#f4f4f4">270,81</text>
<text x="335.51" y="837.16" font-size="17.01" textLength="37.15" lengthAdjust="spacingAndGlyphs" fill="#f4f4f4">ΔE 2000</text>
<text x="403.70" y="837.16" font-size="17.01" textLength="19.36" lengthAdjust="spacingAndGlyphs" fill="#f4f4f4">2,97</text>
<text x="438.90" y="837.16" font-size="17.01" textLength="19.36" lengthAdjust="spacingAndGlyphs" fill="#f4f4f4">5,42</text>
<text x="475.70" y="837.16" font-size="17.01" textLength="19.36" lengthAdjust="spacingAndGlyphs" fill="#f4f4f4">5,85</text>
<text x="512.10" y="837.16" font-size="17.01" textLength="19.36" lengthAdjust="spacingAndGlyphs" fill="#f4f4f4">5,78</text>
<text x="548.40" y="837.16" font-size="17.01" textLength="19.36" lengthAdjust="spacingAndGlyphs" fill="#f4f4f4">5,43</text>
<text x="584.85" y="837.16" font-size="17.01" textLength="19.36" lengthAdjust="spacingAndGlyphs" fill="#f4f4f4">1,20</text>
<text x="611.80" y="837.16" font-size="17.01" textLength="19.36" lengthAdjust="spacingAndGlyphs" fill="#f4f4f4">5,80</text>
<text x="654.60" y="837.16" font-size="17.01" textLength="19.36" lengthAdjust="spacingAndGlyphs" fill="#f4f4f4">6,61</text>
<text x="698.80" y="837.16" font-size="17.01" textLength="19.36" lengthAdjust="spacingAndGlyphs" fill="#f4f4f4">5,33</text>
<text x="738.13" y="837.16" font-size="17.01" textLength="19.36" lengthAdjust="spacingAndGlyphs" fill="#f4f4f4">3,34</text>
<text x="772.30" y="837.16" font-size="17.01" textLength="19.36" lengthAdjust="spacingAndGlyphs" fill="#f4f4f4">6,25</text>
<text x="825.50" y="837.16" font-size="17.01" textLength="19.36" lengthAdjust="spacingAndGlyphs" fill="#f4f4f4">5,93</text>
<text x="882.70" y="837.16" font-size="17.01" textLength="19.36" lengthAdjust="spacingAndGlyphs" fill="#f4f4f4">5,56</text>
<text x="917.50" y="837.16" font-size="17.01" textLength="19.36" lengthAdjust="spacingAndGlyphs" fill="#f4f4f4">5,98</text>
<text x="976.20" y="837.16" font-size="17.01" textLength="19.36" lengthAdjust="spacingAndGlyphs" fill="#f4f4f4">7,33</text>
<text x="1039.90" y="837.16" font-size="17.01" textLength="19.36" lengthAdjust="spacingAndGlyphs" fill="#f4f4f4">7,31</text>
<text x="1071.78" y="837.16" font-size="17.01" textLength="19.36" lengthAdjust="spacingAndGlyphs" fill="#f4f4f4">4,59</text>
<text x="1130.20" y="837.16" font-size="17.01" textLength="19.36" lengthAdjust="spacingAndGlyphs" fill="#f4f4f4">2,89</text>
<text x="1193.98" y="837.16" font-size="17.01" textLength="19.36" lengthAdjust="spacingAndGlyphs" fill="#f4f4f4">8,06</text>
<text x="1223.40" y="837.16" font-size="17.01" textLength="19.36" lengthAdjust="spacingAndGlyphs" fill="#f4f4f4">6,23</text>
<text x="1253.80" y="837.16" font-size="17.01" textLength="19.36" lengthAdjust="spacingAndGlyphs" fill="#f4f4f4">6,46</text>
<text x="1283.55" y="837.16" font-size="17.01" textLength="19.36" lengthAdjust="spacingAndGlyphs" fill="#f4f4f4">1,23</text>
<text x="1319.28" y="837.16" font-size="17.01" textLength="19.36" lengthAdjust="spacingAndGlyphs" fill="#f4f4f4">8,10</text>
<text x="1360.68" y="837.16" font-size="17.01" textLength="19.36" lengthAdjust="spacingAndGlyphs" fill="#f4f4f4">4,17</text>
<text x="1390.30" y="837.16" font-size="17.01" textLength="19.36" lengthAdjust="spacingAndGlyphs" fill="#f4f4f4">6,30</text>
<text x="1435.73" y="837.16" font-size="17.01" textLength="19.36" lengthAdjust="spacingAndGlyphs" fill="#f4f4f4">9,09</text>
<text x="1490.45" y="837.16" font-size="17.01" textLength="24.90" lengthAdjust="spacingAndGlyphs" fill="#f4f4f4">19,14</text>
<text x="1539.00" y="837.16" font-size="17.01" textLength="19.36" lengthAdjust="spacingAndGlyphs" fill="#f4f4f4">5,90</text>
<text x="1588.65" y="837.16" font-size="17.01" textLength="24.90" lengthAdjust="spacingAndGlyphs" fill="#f4f4f4">10,75</text>
<text x="1655.63" y="837.16" font-size="17.01" textLength="19.36" lengthAdjust="spacingAndGlyphs" fill="#f4f4f4">3,74</text></svg></body></html>
